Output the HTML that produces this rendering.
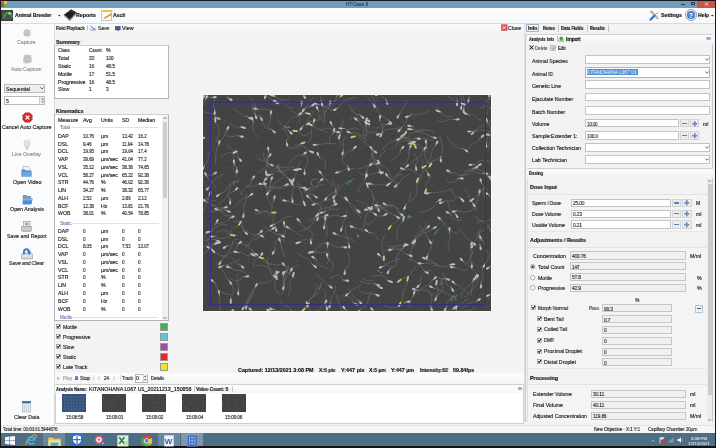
<!DOCTYPE html><html><head><meta charset="utf-8"><style>
html,body{margin:0;padding:0;width:716px;height:448px;overflow:hidden;background:#f3f3f3;}
.t{position:absolute;font-family:"Liberation Sans",sans-serif;line-height:1;white-space:nowrap;transform-origin:0 50%;will-change:transform;-webkit-text-stroke:0.15px currentColor;}
.r{position:absolute;box-sizing:border-box;}
svg{position:absolute;overflow:visible;}
</style></head><body>
<div class="r" style="left:0px;top:0px;width:716px;height:448px;background:#f3f3f3"></div>
<div class="r" style="left:0px;top:1px;width:716px;height:7px;background:#6e9ebf"></div>
<div class="t" style="left:207px;width:300px;text-align:center;top:2.48px;font-size:5px;color:#2b4257;">HTCasa II</div>
<div class="r" style="left:1px;top:2px;width:3px;height:3px;background:#d94c3a"></div>
<div class="r" style="left:4px;top:1px;width:3px;height:3px;background:#f0c030"></div>
<div class="r" style="left:1px;top:5px;width:3px;height:2px;background:#3a7bd0"></div>
<div class="r" style="left:4px;top:4px;width:3px;height:3px;background:#5db05a"></div>
<div class="r" style="left:681px;top:4.3px;width:4px;height:0.9px;background:#2a3a48"></div>
<div class="r" style="left:691px;top:1.8px;width:4px;height:3px;border:0.8px solid #2a3a48;border-top-width:1.3px"></div>
<div class="r" style="left:697px;top:1px;width:18px;height:7px;background:#c9534d"></div>
<svg style="left:703.5px;top:2.2px" width="5" height="4" viewBox="0 0 5 4"><path d="M1 0.5 L4 3.5 M4 0.5 L1 3.5" stroke="#fff" stroke-width="0.8"/></svg>
<div class="r" style="left:1px;top:8px;width:714px;height:15px;background:linear-gradient(#fdfdfe,#f7f8f9)"></div>
<div class="r" style="left:1px;top:23px;width:714px;height:1px;background:#d6dbe0"></div>
<div class="r" style="left:1px;top:9.7px;width:12.4px;height:11px;background:#4d4f4f;border:0.6px solid #3a3c3c"></div>
<svg style="left:1px;top:9.7px" width="12.4" height="11" viewBox="0 0 12.4 11"><path d="M2.8 8.2 Q3.5 3 8 2.8 Q10.8 3.2 11 7.5" stroke="#35a843" stroke-width="1.7" fill="none"/><circle cx="8.6" cy="3.4" r="1.2" fill="#b8ecb8"/></svg>
<div class="t" style="left:15px;top:13.10px;font-size:5.2px;color:#111;font-weight:bold;transform:scaleX(0.952)">Animal Breeder</div>
<svg style="left:57.8px;top:15px" width="2.6" height="2" viewBox="0 0 2.6 2"><path d="M0 0 L2.6 0 L1.3 1.6 Z" fill="#222"/></svg>
<svg style="left:62px;top:8px" width="18" height="15" viewBox="0 0 18 15"><path d="M2.3 6.4 L7.8 11.4 L14.2 4.3 L14.2 5.8 L7.8 12.8 L2.3 7.9 Z" fill="#cdc8b2" stroke="#3a3a3a" stroke-width="0.5"/><path d="M9 1.6 L14.2 4.3 L7.8 11.4 L2.3 6.4 Z" fill="#1d1d1d"/><path d="M9 1.6 L14.2 4.3 L12 6.6 L6.6 3.8 Z" fill="#2e2e2e"/></svg>
<div class="t" style="left:76px;top:13.10px;font-size:5.2px;color:#111;font-weight:bold;transform:scaleX(1.020)">Reports</div>
<div class="r" style="left:101.3px;top:9.8px;width:10.3px;height:11px;background:#fbfbf8;border:0.6px solid #c6c6c0;border-radius:0.5px"></div>
<div class="r" style="left:102px;top:9.9px;width:8.5px;height:2px;background:#dccb5a"></div>
<svg style="left:101px;top:9px" width="12" height="12" viewBox="0 0 12 12"><path d="M3.5 9.2 L10.8 4.8" stroke="#e08a2a" stroke-width="1.5"/><path d="M3.5 9.2 L2.8 9.9" stroke="#666" stroke-width="0.9"/></svg>
<div class="t" style="left:113px;top:13.10px;font-size:5.2px;color:#111;font-weight:bold;transform:scaleX(0.967)">Ascii</div>
<svg style="left:649px;top:10px" width="11" height="11" viewBox="0 0 11 11"><path d="M1.5 2 L3 1 L9.5 8 L8.5 9.5 Z" fill="#b9bec3" stroke="#8f959b" stroke-width="0.4"/><path d="M0.6 1.6 Q1.2 0.2 2.8 0.6 L2 1.8 L2.6 2.5 L3.6 1.8 Q3.8 3.2 2.5 3.5 Z" fill="#a9aeb3"/><path d="M1.6 9.6 L5.5 5.6" stroke="#3f7cc4" stroke-width="2.3" stroke-linecap="round"/><path d="M5.5 5.6 L8.8 2.3" stroke="#7a8690" stroke-width="0.9"/></svg>
<div class="t" style="left:661px;top:13.10px;font-size:5.2px;color:#111;font-weight:bold;transform:scaleX(1.026)">Settings</div>
<svg style="left:685px;top:9.2px" width="12" height="12" viewBox="0 0 12 12"><circle cx="6" cy="6" r="5.6" fill="#dce6f0" stroke="#6d93bb" stroke-width="0.7"/><circle cx="6" cy="6" r="4.1" fill="#4a82c4"/><text x="6" y="8.6" font-size="7" font-family="Liberation Sans" font-weight="bold" fill="#fff" text-anchor="middle">?</text></svg>
<div class="t" style="left:698px;top:13.10px;font-size:5.2px;color:#111;font-weight:bold;transform:scaleX(0.978)">Help</div>
<svg style="left:711px;top:15px" width="2.6" height="2" viewBox="0 0 2.6 2"><path d="M0 0 L2.6 0 L1.3 1.6 Z" fill="#222"/></svg>
<div class="r" style="left:1px;top:24px;width:53px;height:401px;background:#fafbfc"></div>
<div class="r" style="left:54px;top:24px;width:1px;height:401px;background:#dcdcdc"></div>
<svg style="left:23px;top:28.5px" width="8" height="8" viewBox="0 0 8 8"><circle cx="4" cy="3.9" r="3.7" fill="#c4c4c4"/></svg>
<div class="t" style="left:17px;top:39.50px;font-size:5.2px;color:#8f8f8f;transform:scaleX(1.002)">Capture</div>
<svg style="left:22px;top:54px" width="10.5" height="10" viewBox="0 0 10.5 10"><path d="M2 1.2 Q5 0 9 1 Q10.3 4.5 9.5 8.5 Q5.5 10 1.5 9 Q0.3 5 2 1.2 Z" fill="#c9c9c9"/><circle cx="5.2" cy="5" r="2.6" fill="#b5b5b5"/><circle cx="5.2" cy="5" r="1.4" fill="#d2d2d2"/></svg>
<div class="t" style="left:11.4px;top:67.40px;font-size:5.2px;color:#8f8f8f;transform:scaleX(0.981)">Auto Capture</div>
<div class="r" style="left:4px;top:84px;width:41px;height:9px;background:#eeeeee;border:1px solid #b9b9b9;"></div>
<div class="t" style="left:6px;top:86.67px;font-size:5px;color:#222;transform:scaleX(1.015)">Sequential</div>
<svg style="left:40px;top:87px" width="4" height="3" viewBox="0 0 4 3"><path d="M0.3 0.3 L2 2 L3.7 0.3" stroke="#333" stroke-width="0.7" fill="none"/></svg>
<div class="r" style="left:4px;top:96px;width:41px;height:9px;background:#fff;border:1px solid #b9b9b9;"></div>
<div class="t" style="left:5.5px;top:98.67px;font-size:5px;color:#222;">5</div>
<div class="r" style="left:39px;top:97px;width:5px;height:7px;background:#efefef;border-left:1px solid #d0d0d0"></div>
<svg style="left:39.5px;top:97px" width="5" height="7" viewBox="0 0 5 7"><path d="M1 2.6 L2.5 1.2 L4 2.6 Z M1 4.4 L2.5 5.8 L4 4.4 Z" fill="#555"/></svg>
<svg style="left:21.5px;top:112px" width="11" height="11" viewBox="0 0 11 11"><path d="M3.2 0.5 L7.8 0.5 L10.5 3.2 L10.5 7.8 L7.8 10.5 L3.2 10.5 L0.5 7.8 L0.5 3.2 Z" fill="#d02b2b"/><path d="M3.6 3.6 L7.4 7.4 M7.4 3.6 L3.6 7.4" stroke="#fff" stroke-width="1.3"/></svg>
<div class="t" style="left:1.5px;top:125.20px;font-size:5.2px;color:#1e1e1e;transform:scaleX(1.034)">Cancel Auto Capture</div>
<svg style="left:23px;top:140px" width="8" height="10" viewBox="0 0 8 10"><ellipse cx="4" cy="3.6" rx="3.2" ry="3.4" fill="#e2e2e2" stroke="#cfcfcf" stroke-width="0.6"/><rect x="2.4" y="6.8" width="3.2" height="2.6" fill="#cfcfcf"/></svg>
<div class="t" style="left:12px;top:152.30px;font-size:5.2px;color:#8f8f8f;transform:scaleX(1.005)">Live Overlay</div>
<svg style="left:21px;top:166px" width="11" height="11" viewBox="0 0 11 11"><path d="M2 0.5 L7 0.5 L9 2.5 L9 6 L2 6 Z" fill="#f4f4f4" stroke="#9a9a9a" stroke-width="0.6"/><path d="M0.5 3.5 L4 3.5 L5 4.5 L10.5 4.5 L10.5 10.5 L0.5 10.5 Z" fill="#4f8fd6"/><path d="M0.5 6 L10.5 6 L10.5 10.5 L0.5 10.5 Z" fill="#6aa6e6"/></svg>
<div class="t" style="left:12.5px;top:180.00px;font-size:5.2px;color:#1e1e1e;transform:scaleX(1.043)">Open Video</div>
<svg style="left:21.5px;top:193.5px" width="11" height="11" viewBox="0 0 11 11"><path d="M0.8 1 L4.5 1 L5.5 2 L9 2 L9 6 L0.8 6 Z" fill="#8e9398"/><path d="M1 4.5 L10.5 4.5 L9.5 10.5 L0.5 10.5 Z" fill="#4a8ad8"/><path d="M1 4.5 L10.5 4.5 L10.2 6.5 L0.8 6.5 Z" fill="#7fb2ea"/></svg>
<div class="t" style="left:10px;top:207.00px;font-size:5.2px;color:#1e1e1e;transform:scaleX(1.025)">Open Analysis</div>
<svg style="left:21px;top:220.5px" width="11" height="11.5" viewBox="0 0 11 11.5"><rect x="2.5" y="0.5" width="6.5" height="5" fill="#e9eaeb" stroke="#8f9194" stroke-width="0.6"/><rect x="4.3" y="1.8" width="3" height="2.4" fill="#9a9c9f"/><path d="M0.5 5.5 H10.5 V9.5 H0.5 Z" fill="#d6d7d9" stroke="#8a8c8f" stroke-width="0.6"/><path d="M1.5 7.3 H9.5" stroke="#9fa1a4" stroke-width="0.6"/><rect x="1" y="9.5" width="9" height="1.5" fill="#b9bbbe"/></svg>
<div class="t" style="left:7px;top:234.20px;font-size:5.2px;color:#1e1e1e;transform:scaleX(1.014)">Save and Report</div>
<svg style="left:21px;top:247.5px" width="12" height="11.5" viewBox="0 0 12 11.5"><path d="M0.5 6 L2.5 5 L9.5 5 L11.5 6 L11.5 11 L0.5 11 Z" fill="#d4d6d8" stroke="#9d9fa2" stroke-width="0.6"/><path d="M1.5 7.8 H10.5" stroke="#eceeef" stroke-width="1.2"/><path d="M3.2 6.5 Q2 2 5 1.2 Q7.5 0.8 8.3 4" stroke="#3b7fd0" stroke-width="2" fill="none"/><path d="M6 3.6 L10.3 3.4 L8.3 7.6 Z" fill="#3b7fd0"/></svg>
<div class="t" style="left:9px;top:261.00px;font-size:5.2px;color:#1e1e1e;transform:scaleX(0.979)">Save and Clear</div>
<svg style="left:21px;top:400px" width="11" height="13" viewBox="0 0 11 13"><rect x="1" y="1" width="9" height="2.4" rx="0.8" fill="#3f73b8"/><rect x="1.5" y="3.4" width="8" height="8.6" fill="#e3e6ea" stroke="#a9adb2" stroke-width="0.6"/><path d="M3.5 5 V11 M5.5 5 V11 M7.5 5 V11" stroke="#c2c6cb" stroke-width="0.6"/></svg>
<div class="t" style="left:14px;top:414.50px;font-size:5.2px;color:#1e1e1e;transform:scaleX(1.028)">Clear Data</div>
<div class="r" style="left:1px;top:424.5px;width:714px;height:8.5px;background:#f5f6f7;border-top:0.6px solid #e4e4e4"></div>
<div class="t" style="left:2.5px;top:427.30px;font-size:5.2px;color:#1e1e1e;transform:scaleX(0.814)">Total time: 00:00:01.5944676</div>
<div class="t" style="left:594px;top:427.30px;font-size:5.2px;color:#1e1e1e;transform:scaleX(0.841)">New Objective - X:1 Y:1</div>
<div class="t" style="left:648px;top:427.30px;font-size:5.2px;color:#1e1e1e;transform:scaleX(0.852)">Capillary Chamber 20&micro;m</div>
<div class="r" style="left:0px;top:433px;width:716px;height:14px;background:#4e6e85"></div>
<div class="r" style="left:0px;top:446px;width:716px;height:2px;background:#141414"></div>
<div class="r" style="left:55px;top:24px;width:469px;height:349px;background:#f3f3f3"></div>
<div class="r" style="left:55px;top:24px;width:469px;height:10px;background:linear-gradient(#fbfbfb,#f3f3f3)"></div>
<div class="t" style="left:56px;top:26.30px;font-size:5.2px;color:#1e1e1e;font-weight:bold;transform:scaleX(0.791)">Field Playback</div>
<div class="r" style="left:87px;top:25px;width:0.8px;height:5px;background:#c8c8c8"></div>
<svg style="left:90px;top:24.5px" width="6" height="6" viewBox="0 0 6 6"><path d="M0.5 3.2 L0.5 5.5 L5.5 5.5 L5.5 3.2" fill="#dfe4ea" stroke="#8d99a6" stroke-width="0.5"/><path d="M0.8 0.5 L3.8 3.4 L4.6 2.6 L4.6 4.6 L2.6 4.6 L3.3 3.9 L0.3 1 Z" fill="#3a72bd"/></svg>
<div class="t" style="left:97.5px;top:26.30px;font-size:5.2px;color:#1e1e1e;transform:scaleX(0.930)">Save</div>
<svg style="left:115px;top:25.5px" width="5.5" height="5" viewBox="0 0 5.5 5"><rect x="0.3" y="0.3" width="4.9" height="3.6" fill="#3d5ea8" stroke="#24386e" stroke-width="0.4"/><rect x="1.6" y="4" width="2.4" height="0.7" fill="#777"/></svg>
<div class="t" style="left:121.5px;top:26.30px;font-size:5.2px;color:#1e1e1e;transform:scaleX(1.031)">View</div>
<svg style="left:501px;top:24px" width="7" height="7" viewBox="0 0 7 7"><rect x="0.5" y="0.8" width="5.6" height="5.6" fill="#d9534f" stroke="#b03a36" stroke-width="0.5"/><path d="M1.8 2.1 L4.8 5.1 M4.8 2.1 L1.8 5.1" stroke="#fff" stroke-width="0.8"/></svg>
<div class="t" style="left:508px;top:26.30px;font-size:5.2px;color:#1e1e1e;transform:scaleX(0.980)">Close</div>
<div class="t" style="left:56px;top:40.12px;font-size:5.4px;color:#111;font-weight:bold;transform:scaleX(0.976)">Summary</div>
<div class="r" style="left:54px;top:45px;width:115px;height:54px;background:#fff;border:1px solid #b4b4b4;border-top-color:#cfcfcf"></div>
<div class="t" style="left:58px;top:48.00px;font-size:5.2px;color:#1e1e1e;transform:scaleX(0.886)">Class</div>
<div class="t" style="left:89px;top:48.00px;font-size:5.2px;color:#1e1e1e;transform:scaleX(0.903)">Count</div>
<div class="t" style="left:105.5px;top:48.00px;font-size:5.2px;color:#1e1e1e;">%</div>
<div class="t" style="left:58px;top:55.80px;font-size:5.2px;color:#1e1e1e;">Total</div>
<div class="t" style="left:89px;top:55.80px;font-size:5.2px;color:#1e1e1e;transform:scaleX(0.88);">33</div>
<div class="t" style="left:105.5px;top:55.80px;font-size:5.2px;color:#1e1e1e;transform:scaleX(0.88);">100</div>
<div class="t" style="left:58px;top:64.00px;font-size:5.2px;color:#1e1e1e;">Static</div>
<div class="t" style="left:89px;top:64.00px;font-size:5.2px;color:#1e1e1e;transform:scaleX(0.88);">16</div>
<div class="t" style="left:105.5px;top:64.00px;font-size:5.2px;color:#1e1e1e;transform:scaleX(0.88);">48.5</div>
<div class="t" style="left:58px;top:72.20px;font-size:5.2px;color:#1e1e1e;">Motile</div>
<div class="t" style="left:89px;top:72.20px;font-size:5.2px;color:#1e1e1e;transform:scaleX(0.88);">17</div>
<div class="t" style="left:105.5px;top:72.20px;font-size:5.2px;color:#1e1e1e;transform:scaleX(0.88);">51.5</div>
<div class="t" style="left:58px;top:80.00px;font-size:5.2px;color:#1e1e1e;">Progressive</div>
<div class="t" style="left:89px;top:80.00px;font-size:5.2px;color:#1e1e1e;transform:scaleX(0.88);">16</div>
<div class="t" style="left:105.5px;top:80.00px;font-size:5.2px;color:#1e1e1e;transform:scaleX(0.88);">48.5</div>
<div class="t" style="left:58px;top:87.10px;font-size:5.2px;color:#1e1e1e;">Slow</div>
<div class="t" style="left:89px;top:87.10px;font-size:5.2px;color:#1e1e1e;transform:scaleX(0.88);">1</div>
<div class="t" style="left:105.5px;top:87.10px;font-size:5.2px;color:#1e1e1e;transform:scaleX(0.88);">3</div>
<div class="t" style="left:56px;top:108.92px;font-size:5.4px;color:#111;font-weight:bold;transform:scaleX(0.956)">Kinematics</div>
<div class="r" style="left:54px;top:114px;width:115px;height:207px;background:#fff;border:1px solid #b4b4b4;border-top-color:#cfcfcf"></div>
<div class="r" style="left:162px;top:115px;width:6px;height:205px;background:#f0f0f0"></div>
<div class="r" style="left:162.7px;top:121.8px;width:4.2px;height:76.7px;background:#cdcdcd"></div>
<svg style="left:162px;top:116px" width="6" height="4" viewBox="0 0 6 4"><path d="M1.3 3 L3 1.3 L4.7 3" stroke="#555" stroke-width="0.7" fill="none"/></svg>
<svg style="left:162px;top:316px" width="6" height="4" viewBox="0 0 6 4"><path d="M1.3 1 L3 2.7 L4.7 1" stroke="#555" stroke-width="0.7" fill="none"/></svg>
<div class="t" style="left:58px;top:117.70px;font-size:5.2px;color:#1e1e1e;">Measure</div>
<div class="t" style="left:82.5px;top:117.70px;font-size:5.2px;color:#1e1e1e;">Avg</div>
<div class="t" style="left:101px;top:117.70px;font-size:5.2px;color:#1e1e1e;">Units</div>
<div class="t" style="left:121.5px;top:117.70px;font-size:5.2px;color:#1e1e1e;">SD</div>
<div class="t" style="left:137.5px;top:117.70px;font-size:5.2px;color:#1e1e1e;">Median</div>
<div class="t" style="left:59.5px;top:126.33px;font-size:4.6px;color:#34509a;-webkit-text-stroke:0;">Total</div>
<div class="r" style="left:71px;top:127.4px;width:87px;height:0.7px;background:#dde1ea"></div>
<div class="t" style="left:58px;top:133.80px;font-size:5.2px;color:#1e1e1e;">DAP</div>
<div class="t" style="left:82.5px;top:133.80px;font-size:5.2px;color:#1e1e1e;transform:scaleX(0.85);">10.76</div>
<div class="t" style="left:101px;top:133.80px;font-size:5.2px;color:#1e1e1e;">&micro;m</div>
<div class="t" style="left:121.5px;top:133.80px;font-size:5.2px;color:#1e1e1e;transform:scaleX(0.85);">13.42</div>
<div class="t" style="left:137.5px;top:133.80px;font-size:5.2px;color:#1e1e1e;transform:scaleX(0.85);">16.2</div>
<div class="t" style="left:58px;top:141.55px;font-size:5.2px;color:#1e1e1e;">DSL</div>
<div class="t" style="left:82.5px;top:141.55px;font-size:5.2px;color:#1e1e1e;transform:scaleX(0.85);">9.46</div>
<div class="t" style="left:101px;top:141.55px;font-size:5.2px;color:#1e1e1e;">&micro;m</div>
<div class="t" style="left:121.5px;top:141.55px;font-size:5.2px;color:#1e1e1e;transform:scaleX(0.85);">11.94</div>
<div class="t" style="left:137.5px;top:141.55px;font-size:5.2px;color:#1e1e1e;transform:scaleX(0.85);">14.78</div>
<div class="t" style="left:58px;top:149.30px;font-size:5.2px;color:#1e1e1e;">DCL</div>
<div class="t" style="left:82.5px;top:149.30px;font-size:5.2px;color:#1e1e1e;transform:scaleX(0.85);">19.95</div>
<div class="t" style="left:101px;top:149.30px;font-size:5.2px;color:#1e1e1e;">&micro;m</div>
<div class="t" style="left:121.5px;top:149.30px;font-size:5.2px;color:#1e1e1e;transform:scaleX(0.85);">19.04</div>
<div class="t" style="left:137.5px;top:149.30px;font-size:5.2px;color:#1e1e1e;transform:scaleX(0.85);">17.4</div>
<div class="t" style="left:58px;top:157.05px;font-size:5.2px;color:#1e1e1e;">VAP</div>
<div class="t" style="left:82.5px;top:157.05px;font-size:5.2px;color:#1e1e1e;transform:scaleX(0.85);">39.69</div>
<div class="t" style="left:101px;top:157.05px;font-size:5.2px;color:#1e1e1e;">&micro;m/sec</div>
<div class="t" style="left:121.5px;top:157.05px;font-size:5.2px;color:#1e1e1e;transform:scaleX(0.85);">41.04</div>
<div class="t" style="left:137.5px;top:157.05px;font-size:5.2px;color:#1e1e1e;transform:scaleX(0.85);">77.2</div>
<div class="t" style="left:58px;top:164.80px;font-size:5.2px;color:#1e1e1e;">VSL</div>
<div class="t" style="left:82.5px;top:164.80px;font-size:5.2px;color:#1e1e1e;transform:scaleX(0.85);">35.12</div>
<div class="t" style="left:101px;top:164.80px;font-size:5.2px;color:#1e1e1e;">&micro;m/sec</div>
<div class="t" style="left:121.5px;top:164.80px;font-size:5.2px;color:#1e1e1e;transform:scaleX(0.85);">38.36</div>
<div class="t" style="left:137.5px;top:164.80px;font-size:5.2px;color:#1e1e1e;transform:scaleX(0.85);">74.65</div>
<div class="t" style="left:58px;top:172.55px;font-size:5.2px;color:#1e1e1e;">VCL</div>
<div class="t" style="left:82.5px;top:172.55px;font-size:5.2px;color:#1e1e1e;transform:scaleX(0.85);">58.27</div>
<div class="t" style="left:101px;top:172.55px;font-size:5.2px;color:#1e1e1e;">&micro;m/sec</div>
<div class="t" style="left:121.5px;top:172.55px;font-size:5.2px;color:#1e1e1e;transform:scaleX(0.85);">65.22</div>
<div class="t" style="left:137.5px;top:172.55px;font-size:5.2px;color:#1e1e1e;transform:scaleX(0.85);">92.38</div>
<div class="t" style="left:58px;top:180.30px;font-size:5.2px;color:#1e1e1e;">STR</div>
<div class="t" style="left:82.5px;top:180.30px;font-size:5.2px;color:#1e1e1e;transform:scaleX(0.85);">44.76</div>
<div class="t" style="left:101px;top:180.30px;font-size:5.2px;color:#1e1e1e;">%</div>
<div class="t" style="left:121.5px;top:180.30px;font-size:5.2px;color:#1e1e1e;transform:scaleX(0.85);">46.02</div>
<div class="t" style="left:137.5px;top:180.30px;font-size:5.2px;color:#1e1e1e;transform:scaleX(0.85);">92.36</div>
<div class="t" style="left:58px;top:188.05px;font-size:5.2px;color:#1e1e1e;">LIN</div>
<div class="t" style="left:82.5px;top:188.05px;font-size:5.2px;color:#1e1e1e;transform:scaleX(0.85);">34.27</div>
<div class="t" style="left:101px;top:188.05px;font-size:5.2px;color:#1e1e1e;">%</div>
<div class="t" style="left:121.5px;top:188.05px;font-size:5.2px;color:#1e1e1e;transform:scaleX(0.85);">38.32</div>
<div class="t" style="left:137.5px;top:188.05px;font-size:5.2px;color:#1e1e1e;transform:scaleX(0.85);">65.77</div>
<div class="t" style="left:58px;top:195.80px;font-size:5.2px;color:#1e1e1e;">ALH</div>
<div class="t" style="left:82.5px;top:195.80px;font-size:5.2px;color:#1e1e1e;transform:scaleX(0.85);">2.52</div>
<div class="t" style="left:101px;top:195.80px;font-size:5.2px;color:#1e1e1e;">&micro;m</div>
<div class="t" style="left:121.5px;top:195.80px;font-size:5.2px;color:#1e1e1e;transform:scaleX(0.85);">2.89</div>
<div class="t" style="left:137.5px;top:195.80px;font-size:5.2px;color:#1e1e1e;transform:scaleX(0.85);">2.12</div>
<div class="t" style="left:58px;top:203.55px;font-size:5.2px;color:#1e1e1e;">BCF</div>
<div class="t" style="left:82.5px;top:203.55px;font-size:5.2px;color:#1e1e1e;transform:scaleX(0.85);">12.38</div>
<div class="t" style="left:101px;top:203.55px;font-size:5.2px;color:#1e1e1e;">Hz</div>
<div class="t" style="left:121.5px;top:203.55px;font-size:5.2px;color:#1e1e1e;transform:scaleX(0.85);">13.81</div>
<div class="t" style="left:137.5px;top:203.55px;font-size:5.2px;color:#1e1e1e;transform:scaleX(0.85);">21.76</div>
<div class="t" style="left:58px;top:211.30px;font-size:5.2px;color:#1e1e1e;">WOB</div>
<div class="t" style="left:82.5px;top:211.30px;font-size:5.2px;color:#1e1e1e;transform:scaleX(0.85);">38.01</div>
<div class="t" style="left:101px;top:211.30px;font-size:5.2px;color:#1e1e1e;">%</div>
<div class="t" style="left:121.5px;top:211.30px;font-size:5.2px;color:#1e1e1e;transform:scaleX(0.85);">40.54</div>
<div class="t" style="left:137.5px;top:211.30px;font-size:5.2px;color:#1e1e1e;transform:scaleX(0.85);">78.85</div>
<div class="t" style="left:59.5px;top:221.63px;font-size:4.6px;color:#34509a;-webkit-text-stroke:0;">Static</div>
<div class="r" style="left:72px;top:222.7px;width:87px;height:0.7px;background:#dde1ea"></div>
<div class="t" style="left:58px;top:228.90px;font-size:5.2px;color:#1e1e1e;">DAP</div>
<div class="t" style="left:82.5px;top:228.90px;font-size:5.2px;color:#1e1e1e;transform:scaleX(0.85);">0</div>
<div class="t" style="left:101px;top:228.90px;font-size:5.2px;color:#1e1e1e;">&micro;m</div>
<div class="t" style="left:121.5px;top:228.90px;font-size:5.2px;color:#1e1e1e;transform:scaleX(0.85);">0</div>
<div class="t" style="left:137.5px;top:228.90px;font-size:5.2px;color:#1e1e1e;transform:scaleX(0.85);">0</div>
<div class="t" style="left:58px;top:236.66px;font-size:5.2px;color:#1e1e1e;">DSL</div>
<div class="t" style="left:82.5px;top:236.66px;font-size:5.2px;color:#1e1e1e;transform:scaleX(0.85);">0</div>
<div class="t" style="left:101px;top:236.66px;font-size:5.2px;color:#1e1e1e;">&micro;m</div>
<div class="t" style="left:121.5px;top:236.66px;font-size:5.2px;color:#1e1e1e;transform:scaleX(0.85);">0</div>
<div class="t" style="left:137.5px;top:236.66px;font-size:5.2px;color:#1e1e1e;transform:scaleX(0.85);">0</div>
<div class="t" style="left:58px;top:244.42px;font-size:5.2px;color:#1e1e1e;">DCL</div>
<div class="t" style="left:82.5px;top:244.42px;font-size:5.2px;color:#1e1e1e;transform:scaleX(0.85);">8.05</div>
<div class="t" style="left:101px;top:244.42px;font-size:5.2px;color:#1e1e1e;">&micro;m</div>
<div class="t" style="left:121.5px;top:244.42px;font-size:5.2px;color:#1e1e1e;transform:scaleX(0.85);">7.53</div>
<div class="t" style="left:137.5px;top:244.42px;font-size:5.2px;color:#1e1e1e;transform:scaleX(0.85);">13.07</div>
<div class="t" style="left:58px;top:252.18px;font-size:5.2px;color:#1e1e1e;">VAP</div>
<div class="t" style="left:82.5px;top:252.18px;font-size:5.2px;color:#1e1e1e;transform:scaleX(0.85);">0</div>
<div class="t" style="left:101px;top:252.18px;font-size:5.2px;color:#1e1e1e;">&micro;m/sec</div>
<div class="t" style="left:121.5px;top:252.18px;font-size:5.2px;color:#1e1e1e;transform:scaleX(0.85);">0</div>
<div class="t" style="left:137.5px;top:252.18px;font-size:5.2px;color:#1e1e1e;transform:scaleX(0.85);">0</div>
<div class="t" style="left:58px;top:259.94px;font-size:5.2px;color:#1e1e1e;">VSL</div>
<div class="t" style="left:82.5px;top:259.94px;font-size:5.2px;color:#1e1e1e;transform:scaleX(0.85);">0</div>
<div class="t" style="left:101px;top:259.94px;font-size:5.2px;color:#1e1e1e;">&micro;m/sec</div>
<div class="t" style="left:121.5px;top:259.94px;font-size:5.2px;color:#1e1e1e;transform:scaleX(0.85);">0</div>
<div class="t" style="left:137.5px;top:259.94px;font-size:5.2px;color:#1e1e1e;transform:scaleX(0.85);">0</div>
<div class="t" style="left:58px;top:267.70px;font-size:5.2px;color:#1e1e1e;">VCL</div>
<div class="t" style="left:82.5px;top:267.70px;font-size:5.2px;color:#1e1e1e;transform:scaleX(0.85);">0</div>
<div class="t" style="left:101px;top:267.70px;font-size:5.2px;color:#1e1e1e;">&micro;m/sec</div>
<div class="t" style="left:121.5px;top:267.70px;font-size:5.2px;color:#1e1e1e;transform:scaleX(0.85);">0</div>
<div class="t" style="left:137.5px;top:267.70px;font-size:5.2px;color:#1e1e1e;transform:scaleX(0.85);">0</div>
<div class="t" style="left:58px;top:275.46px;font-size:5.2px;color:#1e1e1e;">STR</div>
<div class="t" style="left:82.5px;top:275.46px;font-size:5.2px;color:#1e1e1e;transform:scaleX(0.85);">0</div>
<div class="t" style="left:101px;top:275.46px;font-size:5.2px;color:#1e1e1e;">%</div>
<div class="t" style="left:121.5px;top:275.46px;font-size:5.2px;color:#1e1e1e;transform:scaleX(0.85);">0</div>
<div class="t" style="left:137.5px;top:275.46px;font-size:5.2px;color:#1e1e1e;transform:scaleX(0.85);">0</div>
<div class="t" style="left:58px;top:283.22px;font-size:5.2px;color:#1e1e1e;">LIN</div>
<div class="t" style="left:82.5px;top:283.22px;font-size:5.2px;color:#1e1e1e;transform:scaleX(0.85);">0</div>
<div class="t" style="left:101px;top:283.22px;font-size:5.2px;color:#1e1e1e;">%</div>
<div class="t" style="left:121.5px;top:283.22px;font-size:5.2px;color:#1e1e1e;transform:scaleX(0.85);">0</div>
<div class="t" style="left:137.5px;top:283.22px;font-size:5.2px;color:#1e1e1e;transform:scaleX(0.85);">0</div>
<div class="t" style="left:58px;top:290.98px;font-size:5.2px;color:#1e1e1e;">ALH</div>
<div class="t" style="left:82.5px;top:290.98px;font-size:5.2px;color:#1e1e1e;transform:scaleX(0.85);">0</div>
<div class="t" style="left:101px;top:290.98px;font-size:5.2px;color:#1e1e1e;">&micro;m</div>
<div class="t" style="left:121.5px;top:290.98px;font-size:5.2px;color:#1e1e1e;transform:scaleX(0.85);">0</div>
<div class="t" style="left:137.5px;top:290.98px;font-size:5.2px;color:#1e1e1e;transform:scaleX(0.85);">0</div>
<div class="t" style="left:58px;top:298.74px;font-size:5.2px;color:#1e1e1e;">BCF</div>
<div class="t" style="left:82.5px;top:298.74px;font-size:5.2px;color:#1e1e1e;transform:scaleX(0.85);">0</div>
<div class="t" style="left:101px;top:298.74px;font-size:5.2px;color:#1e1e1e;">Hz</div>
<div class="t" style="left:121.5px;top:298.74px;font-size:5.2px;color:#1e1e1e;transform:scaleX(0.85);">0</div>
<div class="t" style="left:137.5px;top:298.74px;font-size:5.2px;color:#1e1e1e;transform:scaleX(0.85);">0</div>
<div class="t" style="left:58px;top:306.50px;font-size:5.2px;color:#1e1e1e;">WOB</div>
<div class="t" style="left:82.5px;top:306.50px;font-size:5.2px;color:#1e1e1e;transform:scaleX(0.85);">0</div>
<div class="t" style="left:101px;top:306.50px;font-size:5.2px;color:#1e1e1e;">%</div>
<div class="t" style="left:121.5px;top:306.50px;font-size:5.2px;color:#1e1e1e;transform:scaleX(0.85);">0</div>
<div class="t" style="left:137.5px;top:306.50px;font-size:5.2px;color:#1e1e1e;transform:scaleX(0.85);">0</div>
<div class="t" style="left:59.5px;top:316.03px;font-size:4.6px;color:#34509a;-webkit-text-stroke:0;">Motile</div>
<div class="r" style="left:71px;top:317.09999999999997px;width:87px;height:0.7px;background:#dde1ea"></div>
<div class="r" style="left:54px;top:320px;width:115px;height:1px;background:#b4b4b4"></div>
<div class="r" style="left:55px;top:321px;width:114px;height:1.5px;background:#f3f3f3"></div>
<svg style="left:56.1px;top:324.29999999999995px" width="4.8" height="4.8" viewBox="0 0 4.8 4.8"><rect x="0.3" y="0.3" width="4.2" height="4.2" fill="#fff" stroke="#7d7d7d" stroke-width="0.6"/><path d="M1.1 2.3 L2.1 3.5 L3.9 1.1" stroke="#111" stroke-width="1.05" fill="none"/></svg>
<div class="t" style="left:63px;top:324.90px;font-size:5.2px;color:#1e1e1e;">Motile</div>
<div class="r" style="left:159.5px;top:322.9px;width:8.2px;height:8px;background:#3db54a;border:0.6px solid #9a9a9a"></div>
<svg style="left:56.1px;top:334.29999999999995px" width="4.8" height="4.8" viewBox="0 0 4.8 4.8"><rect x="0.3" y="0.3" width="4.2" height="4.2" fill="#fff" stroke="#7d7d7d" stroke-width="0.6"/><path d="M1.1 2.3 L2.1 3.5 L3.9 1.1" stroke="#111" stroke-width="1.05" fill="none"/></svg>
<div class="t" style="left:63px;top:334.90px;font-size:5.2px;color:#1e1e1e;">Progressive</div>
<div class="r" style="left:159.5px;top:332.9px;width:8.2px;height:8px;background:#5ac6dc;border:0.6px solid #9a9a9a"></div>
<svg style="left:56.1px;top:344.29999999999995px" width="4.8" height="4.8" viewBox="0 0 4.8 4.8"><rect x="0.3" y="0.3" width="4.2" height="4.2" fill="#fff" stroke="#7d7d7d" stroke-width="0.6"/><path d="M1.1 2.3 L2.1 3.5 L3.9 1.1" stroke="#111" stroke-width="1.05" fill="none"/></svg>
<div class="t" style="left:63px;top:344.90px;font-size:5.2px;color:#1e1e1e;">Slow</div>
<div class="r" style="left:159.5px;top:342.9px;width:8.2px;height:8px;background:#ad47a8;border:0.6px solid #9a9a9a"></div>
<svg style="left:56.1px;top:354.29999999999995px" width="4.8" height="4.8" viewBox="0 0 4.8 4.8"><rect x="0.3" y="0.3" width="4.2" height="4.2" fill="#fff" stroke="#7d7d7d" stroke-width="0.6"/><path d="M1.1 2.3 L2.1 3.5 L3.9 1.1" stroke="#111" stroke-width="1.05" fill="none"/></svg>
<div class="t" style="left:63px;top:354.90px;font-size:5.2px;color:#1e1e1e;">Static</div>
<div class="r" style="left:159.5px;top:352.9px;width:8.2px;height:8px;background:#e62429;border:0.6px solid #9a9a9a"></div>
<svg style="left:56.1px;top:364.29999999999995px" width="4.8" height="4.8" viewBox="0 0 4.8 4.8"><rect x="0.3" y="0.3" width="4.2" height="4.2" fill="#fff" stroke="#7d7d7d" stroke-width="0.6"/><path d="M1.1 2.3 L2.1 3.5 L3.9 1.1" stroke="#111" stroke-width="1.05" fill="none"/></svg>
<div class="t" style="left:63px;top:364.90px;font-size:5.2px;color:#1e1e1e;">Late Track</div>
<div class="r" style="left:159.5px;top:362.9px;width:8.2px;height:8px;background:#f3e61b;border:0.6px solid #9a9a9a"></div>
<div class="r" style="left:55px;top:372.5px;width:469px;height:10px;background:linear-gradient(#fcfcfc,#f6f6f6)"></div>
<svg style="left:56px;top:375.5px" width="5" height="5" viewBox="0 0 5 5"><path d="M1 0.5 L4 2.5 L1 4.5 Z" fill="#b9b9b9"/></svg>
<div class="t" style="left:63px;top:376.00px;font-size:5.2px;color:#9a9a9a;transform:scaleX(0.892)">Play</div>
<div class="r" style="left:75.3px;top:376.3px;width:2.8px;height:3.6px;background:linear-gradient(#7f9fd6,#3a5fae)"></div>
<div class="t" style="left:80px;top:376.00px;font-size:5.2px;color:#1e1e1e;transform:scaleX(0.937)">Stop</div>
<div class="r" style="left:93.2px;top:375px;width:0.7px;height:6px;background:#d6d6d6"></div>
<svg style="left:97px;top:375.5px" width="4" height="5" viewBox="0 0 4 5"><path d="M3 0.5 L0.8 2.5 L3 4.5" stroke="#aaa" stroke-width="0.7" fill="none"/></svg>
<div class="t" style="left:104px;top:376.00px;font-size:5.2px;color:#1e1e1e;transform:scaleX(0.865)">24</div>
<svg style="left:112px;top:375.5px" width="4" height="5" viewBox="0 0 4 5"><path d="M1 0.5 L3.2 2.5 L1 4.5" stroke="#aaa" stroke-width="0.7" fill="none"/></svg>
<div class="r" style="left:119.5px;top:375px;width:0.7px;height:6px;background:#d6d6d6"></div>
<div class="t" style="left:121.5px;top:376.00px;font-size:5.2px;color:#1e1e1e;transform:scaleX(0.861)">Track</div>
<div class="r" style="left:134.5px;top:373.5px;width:13px;height:9px;background:#fff;border:0.7px solid #b5b5b5"></div>
<div class="t" style="left:135.5px;top:376.00px;font-size:5.2px;color:#1e1e1e;">0</div>
<div class="r" style="left:143px;top:374px;width:4.3px;height:8px;background:#f0f0f0;border-left:0.6px solid #ccc"></div>
<svg style="left:143px;top:374px" width="4.3" height="8" viewBox="0 0 4.3 8"><path d="M1 3 L2.2 1.6 L3.4 3 Z M1 5 L2.2 6.4 L3.4 5 Z" fill="#555"/></svg>
<div class="t" style="left:151px;top:376.00px;font-size:5.2px;color:#1e1e1e;transform:scaleX(0.820)">Details</div>
<div class="r" style="left:524px;top:24px;width:191px;height:401px;background:#f2f2f2"></div>
<div class="r" style="left:524px;top:24px;width:1px;height:401px;background:#e2e2e2"></div>
<div class="r" style="left:525.3px;top:33.5px;width:1px;height:391px;background:#c9c9c9"></div>
<div class="r" style="left:527.2px;top:168px;width:0.8px;height:255px;background:#dedede"></div>
<div class="r" style="left:712.3px;top:33.5px;width:1px;height:391px;background:#c9c9c9"></div>
<div class="r" style="left:526px;top:24.3px;width:12.5px;height:7.8px;background:#f7fafd;border:0.8px solid #9fb6cc"></div>
<div class="t" style="left:527.8px;top:26.20px;font-size:5.2px;color:#111;font-weight:bold;transform:scaleX(0.998)">Info</div>
<div class="t" style="left:542.8px;top:26.20px;font-size:5.2px;color:#111;font-weight:bold;transform:scaleX(0.832)">Notes</div>
<div class="r" style="left:558.2px;top:25px;width:0.7px;height:6.5px;background:#c5c5c5"></div>
<div class="t" style="left:561.2px;top:26.20px;font-size:5.2px;color:#111;font-weight:bold;transform:scaleX(0.813)">Data Fields</div>
<div class="r" style="left:586.8px;top:25px;width:0.7px;height:6.5px;background:#c5c5c5"></div>
<div class="t" style="left:589.8px;top:26.20px;font-size:5.2px;color:#111;font-weight:bold;transform:scaleX(0.800)">Results</div>
<div class="r" style="left:608.2px;top:25px;width:0.7px;height:6.5px;background:#c5c5c5"></div>
<div class="r" style="left:525.3px;top:33.5px;width:187.5px;height:1px;background:#d3d3d3"></div>
<div class="r" style="left:526.5px;top:34.5px;width:186px;height:9px;background:linear-gradient(#fdfdfd,#f2f2f2)"></div>
<div class="t" style="left:528.7px;top:37.00px;font-size:5.2px;color:#111;font-weight:bold;transform:scaleX(0.774)">Analysis Info</div>
<div class="r" style="left:556.5px;top:36px;width:0.7px;height:5.5px;background:#c5c5c5"></div>
<svg style="left:558.3px;top:36px" width="6.5" height="6" viewBox="0 0 6.5 6"><path d="M0.3 3.2 L1 5.6 L5.5 5.6 L6.2 3.2" fill="#c9cdc6" stroke="#8b9088" stroke-width="0.4"/><path d="M3.25 0.2 L6 2.6 L4.4 2.6 L4.4 4.5 L2.1 4.5 L2.1 2.6 L0.5 2.6 Z" fill="#3f9e36"/></svg>
<div class="t" style="left:566px;top:37.00px;font-size:5.2px;color:#111;-webkit-text-stroke:0.3px #111;transform:scaleX(0.973)">Import</div>
<div class="r" style="left:706px;top:37.3px;width:4.5px;height:2.8px;background:#8fb0dc;border-radius:1.4px"></div>
<svg style="left:528.9px;top:45.3px" width="5" height="5" viewBox="0 0 5 5"><path d="M0.5 0.5 L4.5 4.5 M4.5 0.5 L0.5 4.5" stroke="#222" stroke-width="1.05"/></svg>
<div class="t" style="left:535px;top:46.00px;font-size:5.2px;color:#3a3a3a;-webkit-text-stroke:0.05px #3a3a3a;transform:scaleX(0.833)">Delete</div>
<svg style="left:550.3px;top:45px" width="6" height="6" viewBox="0 0 6 6"><rect x="0.4" y="0.6" width="4.8" height="5" fill="#dfe6ee" stroke="#8a9aaa" stroke-width="0.45"/><path d="M0.4 2.2 H5.2 M0.4 3.8 H5.2 M2.8 0.6 V5.6" stroke="#8a9aaa" stroke-width="0.35"/><path d="M2.5 5.2 L5.8 1.8" stroke="#c9a040" stroke-width="1.1"/></svg>
<div class="t" style="left:558px;top:46.00px;font-size:5.2px;color:#111;transform:scaleX(0.838)">Edit</div>
<div class="t" style="left:531.8px;top:58.70px;font-size:5.2px;color:#1e1e1e;transform:scaleX(0.993)">Animal Species</div>
<div class="r" style="left:585.3px;top:55.2px;width:124.30000000000007px;height:9.0px;background:#fff;border:0.8px solid #c3c3c3"></div>
<svg style="left:704.5px;top:58.2px" width="4" height="3" viewBox="0 0 4 3"><path d="M0.4 0.5 L2 2.2 L3.6 0.5" stroke="#444" stroke-width="0.8" fill="none"/></svg>
<div class="t" style="left:531.8px;top:72.10px;font-size:5.2px;color:#1e1e1e;transform:scaleX(0.933)">Animal ID</div>
<div class="r" style="left:585.3px;top:67.2px;width:124.30000000000007px;height:10.399999999999991px;background:#fff;border:0.8px solid #9ab8d6"></div>
<svg style="left:704.5px;top:70.9px" width="4" height="3" viewBox="0 0 4 3"><path d="M0.4 0.5 L2 2.2 L3.6 0.5" stroke="#444" stroke-width="0.8" fill="none"/></svg>
<div class="r" style="left:586.5px;top:69px;width:51.5px;height:6.4px;background:#4a8fd6"></div>
<div class="t" style="left:587px;top:70.30px;font-size:5.2px;color:#fff;-webkit-text-stroke:0;transform:scaleX(0.924)">KITANOHANA L067 U1</div>
<div class="t" style="left:531.8px;top:83.90px;font-size:5.2px;color:#1e1e1e;transform:scaleX(0.995)">Genetic Line</div>
<div class="r" style="left:585.3px;top:80.4px;width:124.30000000000007px;height:8.299999999999997px;background:#fff;border:0.8px solid #c3c3c3"></div>
<div class="t" style="left:531.8px;top:96.50px;font-size:5.2px;color:#1e1e1e;transform:scaleX(0.994)">Ejaculate Number</div>
<div class="r" style="left:585.3px;top:93.2px;width:124.30000000000007px;height:8.299999999999997px;background:#fff;border:0.8px solid #c3c3c3"></div>
<div class="t" style="left:531.8px;top:109.60px;font-size:5.2px;color:#1e1e1e;transform:scaleX(0.995)">Batch Number</div>
<div class="r" style="left:585.3px;top:106.2px;width:124.30000000000007px;height:8.399999999999991px;background:#fff;border:0.8px solid #c3c3c3"></div>
<div class="t" style="left:531.8px;top:122.00px;font-size:5.2px;color:#1e1e1e;transform:scaleX(1.011)">Volume</div>
<div class="r" style="left:585.3px;top:119.2px;width:94.0px;height:8.200000000000003px;background:#fff;border:0.8px solid #c3c3c3"></div>
<div class="t" style="left:586.7px;top:121.50px;font-size:5.2px;color:#1e1e1e;transform:scaleX(0.809)">10.00</div>
<div class="r" style="left:679.5px;top:119.2px;width:9.9px;height:8.200000000000003px;background:#ececec;border:0.7px solid #d3d3d3"></div>
<div class="r" style="left:682.2px;top:122.60000000000001px;width:5px;height:1.5px;background:#5f7fae"></div>
<div class="r" style="left:690.1px;top:119.2px;width:9.4px;height:8.200000000000003px;background:#ececec;border:0.7px solid #d3d3d3"></div>
<svg style="left:692.3px;top:120.5px" width="5.5" height="5.5" viewBox="0 0 5.5 5.5"><path d="M2.75 0.3 V5.2 M0.3 2.75 H5.2" stroke="#5b82bd" stroke-width="1.6"/><circle cx="2.75" cy="2.75" r="0.6" fill="#9fbde6"/></svg>
<div class="t" style="left:703px;top:121.50px;font-size:5.2px;color:#1e1e1e;transform:scaleX(0.966)">ml</div>
<div class="t" style="left:531.8px;top:133.80px;font-size:5.2px;color:#1e1e1e;transform:scaleX(0.999)">Sample:Extender 1:</div>
<div class="r" style="left:585.3px;top:131.3px;width:94.0px;height:8.399999999999977px;background:#fff;border:0.8px solid #c3c3c3"></div>
<div class="t" style="left:586.7px;top:133.70px;font-size:5.2px;color:#1e1e1e;transform:scaleX(0.847)">100.0</div>
<div class="r" style="left:679.5px;top:131.3px;width:9.9px;height:8.399999999999977px;background:#ececec;border:0.7px solid #d3d3d3"></div>
<div class="r" style="left:682.2px;top:134.8px;width:5px;height:1.5px;background:#5f7fae"></div>
<div class="r" style="left:690.1px;top:131.3px;width:9.4px;height:8.399999999999977px;background:#ececec;border:0.7px solid #d3d3d3"></div>
<svg style="left:692.3px;top:132.60000000000002px" width="5.5" height="5.5" viewBox="0 0 5.5 5.5"><path d="M2.75 0.3 V5.2 M0.3 2.75 H5.2" stroke="#5b82bd" stroke-width="1.6"/><circle cx="2.75" cy="2.75" r="0.6" fill="#9fbde6"/></svg>
<div class="t" style="left:531.8px;top:146.20px;font-size:5.2px;color:#1e1e1e;transform:scaleX(1.007)">Collection Technician</div>
<div class="r" style="left:585.3px;top:143.3px;width:124.30000000000007px;height:8.5px;background:#fff;border:0.8px solid #c3c3c3"></div>
<svg style="left:704.5px;top:146.05px" width="4" height="3" viewBox="0 0 4 3"><path d="M0.4 0.5 L2 2.2 L3.6 0.5" stroke="#444" stroke-width="0.8" fill="none"/></svg>
<div class="t" style="left:531.8px;top:158.20px;font-size:5.2px;color:#1e1e1e;transform:scaleX(1.014)">Lab Technician</div>
<div class="r" style="left:585.3px;top:155.3px;width:124.30000000000007px;height:8.5px;background:#fff;border:0.8px solid #c3c3c3"></div>
<svg style="left:704.5px;top:158.05px" width="4" height="3" viewBox="0 0 4 3"><path d="M0.4 0.5 L2 2.2 L3.6 0.5" stroke="#444" stroke-width="0.8" fill="none"/></svg>
<div class="r" style="left:526.5px;top:167.5px;width:186px;height:1px;background:#cfcfcf"></div>
<div class="r" style="left:526.5px;top:168.5px;width:186px;height:9px;background:linear-gradient(#fbfbfb,#f2f2f2)"></div>
<div class="t" style="left:528.5px;top:171.27px;font-size:5px;color:#111;font-weight:bold;transform:scaleX(0.826)">Dosing</div>
<div class="r" style="left:707px;top:178px;width:5.3px;height:247px;background:#ececec"></div>
<div class="r" style="left:707.5px;top:184.4px;width:4.6px;height:210.5px;background:#cbcbcb"></div>
<svg style="left:707px;top:179px" width="5.3" height="4" viewBox="0 0 5.3 4"><path d="M1.2 2.8 L2.65 1.3 L4.1 2.8" stroke="#555" stroke-width="0.7" fill="none"/></svg>
<svg style="left:707px;top:417.5px" width="5.3" height="4" viewBox="0 0 5.3 4"><path d="M1.2 1.2 L2.65 2.7 L4.1 1.2" stroke="#555" stroke-width="0.7" fill="none"/></svg>
<div class="t" style="left:530px;top:185.22px;font-size:5.4px;color:#111;font-weight:bold;transform:scaleX(0.969)">Dose Input</div>
<div class="r" style="left:527.5px;top:194px;width:179px;height:37.5px;background:#f4f4f4;border-top:0.7px solid #e2e2e2;border-bottom:0.7px solid #e8e8e8"></div>
<div class="t" style="left:532.3px;top:200.95px;font-size:5.2px;color:#1e1e1e;transform:scaleX(0.914)">Sperm / Dose</div>
<div class="r" style="left:571.4px;top:198.7px;width:100px;height:8.100000000000023px;background:#fff;border:0.8px solid #c3c3c3"></div>
<div class="t" style="left:572.8px;top:200.95px;font-size:5.2px;color:#1e1e1e;transform:scaleX(0.88);">25.00</div>
<div class="r" style="left:671.8px;top:198.7px;width:9.5px;height:8.100000000000023px;background:#ececec;border:0.7px solid #d3d3d3"></div>
<div class="r" style="left:674px;top:202.05px;width:5px;height:1.5px;background:#5f7fae"></div>
<div class="r" style="left:682px;top:198.7px;width:9.5px;height:8.100000000000023px;background:#ececec;border:0.7px solid #d3d3d3"></div>
<svg style="left:684px;top:200.0px" width="5.5" height="5.5" viewBox="0 0 5.5 5.5"><path d="M2.75 0.3 V5.2 M0.3 2.75 H5.2" stroke="#5b82bd" stroke-width="1.6"/><circle cx="2.75" cy="2.75" r="0.6" fill="#9fbde6"/></svg>
<div class="t" style="left:695.5px;top:200.95px;font-size:5.2px;color:#1e1e1e;">M</div>
<div class="t" style="left:532.3px;top:211.80px;font-size:5.2px;color:#1e1e1e;transform:scaleX(0.940)">Dose Volume</div>
<div class="r" style="left:571.4px;top:209.5px;width:100px;height:8.199999999999989px;background:#fff;border:0.8px solid #c3c3c3"></div>
<div class="t" style="left:572.8px;top:211.80px;font-size:5.2px;color:#1e1e1e;transform:scaleX(0.88);">0.23</div>
<div class="r" style="left:671.8px;top:209.5px;width:9.5px;height:8.199999999999989px;background:#ececec;border:0.7px solid #d3d3d3"></div>
<div class="r" style="left:674px;top:212.9px;width:5px;height:1.5px;background:#5f7fae"></div>
<div class="r" style="left:682px;top:209.5px;width:9.5px;height:8.199999999999989px;background:#ececec;border:0.7px solid #d3d3d3"></div>
<svg style="left:684px;top:210.8px" width="5.5" height="5.5" viewBox="0 0 5.5 5.5"><path d="M2.75 0.3 V5.2 M0.3 2.75 H5.2" stroke="#5b82bd" stroke-width="1.6"/><circle cx="2.75" cy="2.75" r="0.6" fill="#9fbde6"/></svg>
<div class="t" style="left:695.5px;top:211.80px;font-size:5.2px;color:#1e1e1e;">ml</div>
<div class="t" style="left:532.3px;top:222.70px;font-size:5.2px;color:#1e1e1e;transform:scaleX(0.945)">Usable Volume</div>
<div class="r" style="left:571.4px;top:220.4px;width:100px;height:8.199999999999989px;background:#fff;border:0.8px solid #c3c3c3"></div>
<div class="t" style="left:572.8px;top:222.70px;font-size:5.2px;color:#1e1e1e;transform:scaleX(0.88);">0.21</div>
<div class="r" style="left:671.8px;top:220.4px;width:9.5px;height:8.199999999999989px;background:#ececec;border:0.7px solid #d3d3d3"></div>
<div class="r" style="left:674px;top:223.8px;width:5px;height:1.5px;background:#5f7fae"></div>
<div class="r" style="left:682px;top:220.4px;width:9.5px;height:8.199999999999989px;background:#ececec;border:0.7px solid #d3d3d3"></div>
<svg style="left:684px;top:221.70000000000002px" width="5.5" height="5.5" viewBox="0 0 5.5 5.5"><path d="M2.75 0.3 V5.2 M0.3 2.75 H5.2" stroke="#5b82bd" stroke-width="1.6"/><circle cx="2.75" cy="2.75" r="0.6" fill="#9fbde6"/></svg>
<div class="t" style="left:695.5px;top:222.70px;font-size:5.2px;color:#1e1e1e;">ml</div>
<div class="t" style="left:530px;top:237.92px;font-size:5.4px;color:#111;font-weight:bold;transform:scaleX(0.989)">Adjustments / Results</div>
<div class="r" style="left:527.5px;top:247px;width:179px;height:121.5px;background:#f4f4f4;border-top:0.7px solid #e2e2e2;border-bottom:0.7px solid #e8e8e8"></div>
<div class="t" style="left:532.5px;top:253.80px;font-size:5.2px;color:#1e1e1e;transform:scaleX(1.021)">Concentration</div>
<div class="r" style="left:570.3px;top:251.4px;width:116.2px;height:8.200000000000017px;background:#f0f0f0;border:0.8px solid #c6c6c6"></div>
<div class="t" style="left:571.8px;top:253.70px;font-size:5.2px;color:#1e1e1e;transform:scaleX(0.88);">400.76</div>
<div class="t" style="left:690px;top:253.80px;font-size:5.2px;color:#1e1e1e;">M/ml</div>
<svg style="left:530.3px;top:263.7px" width="5.4" height="5.4" viewBox="0 0 5.4 5.4"><circle cx="2.7" cy="2.7" r="2.3" fill="#fff" stroke="#777" stroke-width="0.6"/><circle cx="2.7" cy="2.7" r="1.2" fill="#222"/></svg>
<div class="t" style="left:537.5px;top:264.60px;font-size:5.2px;color:#1e1e1e;transform:scaleX(1.010)">Total Count</div>
<div class="r" style="left:570.3px;top:262.3px;width:116.2px;height:8.0px;background:#f0f0f0;border:0.8px solid #c6c6c6"></div>
<div class="t" style="left:571.8px;top:264.50px;font-size:5.2px;color:#1e1e1e;transform:scaleX(0.88);">147</div>
<svg style="left:530.3px;top:274.59999999999997px" width="5.4" height="5.4" viewBox="0 0 5.4 5.4"><circle cx="2.7" cy="2.7" r="2.3" fill="#fff" stroke="#777" stroke-width="0.6"/></svg>
<div class="t" style="left:537.5px;top:275.50px;font-size:5.2px;color:#1e1e1e;transform:scaleX(1.011)">Motile</div>
<div class="r" style="left:570.3px;top:273.2px;width:116.2px;height:8.0px;background:#f0f0f0;border:0.8px solid #c6c6c6"></div>
<div class="t" style="left:571.8px;top:275.40px;font-size:5.2px;color:#1e1e1e;transform:scaleX(0.88);">57.8</div>
<div class="t" style="left:697px;top:275.50px;font-size:5.2px;color:#1e1e1e;">%</div>
<svg style="left:530.3px;top:285.4px" width="5.4" height="5.4" viewBox="0 0 5.4 5.4"><circle cx="2.7" cy="2.7" r="2.3" fill="#fff" stroke="#777" stroke-width="0.6"/></svg>
<div class="t" style="left:537.5px;top:286.30px;font-size:5.2px;color:#1e1e1e;transform:scaleX(0.986)">Progressive</div>
<div class="r" style="left:570.3px;top:284px;width:116.2px;height:8px;background:#f0f0f0;border:0.8px solid #c6c6c6"></div>
<div class="t" style="left:571.8px;top:286.20px;font-size:5.2px;color:#1e1e1e;transform:scaleX(0.88);">42.9</div>
<div class="t" style="left:697px;top:286.30px;font-size:5.2px;color:#1e1e1e;">%</div>
<div class="t" style="left:634.8px;top:298.47px;font-size:5px;color:#1e1e1e;">%</div>
<svg style="left:530.9px;top:305.20000000000005px" width="4.8" height="4.8" viewBox="0 0 4.8 4.8"><rect x="0.3" y="0.3" width="4.2" height="4.2" fill="#fff" stroke="#7d7d7d" stroke-width="0.6"/><path d="M1.1 2.3 L2.1 3.5 L3.9 1.1" stroke="#111" stroke-width="1.05" fill="none"/></svg>
<div class="t" style="left:537.6px;top:305.70px;font-size:5.2px;color:#1e1e1e;transform:scaleX(0.913)">Morph Normal</div>
<div class="r" style="left:602px;top:304px;width:70px;height:8.4px;background:#f0f0f0;border:0.8px solid #c6c6c6"></div>
<div class="t" style="left:603.7px;top:306.60px;font-size:5.2px;color:#1e1e1e;transform:scaleX(0.88);">99.3</div>
<svg style="left:537.2px;top:316.1px" width="4.8" height="4.8" viewBox="0 0 4.8 4.8"><rect x="0.3" y="0.3" width="4.2" height="4.2" fill="#fff" stroke="#7d7d7d" stroke-width="0.6"/><path d="M1.1 2.3 L2.1 3.5 L3.9 1.1" stroke="#111" stroke-width="1.05" fill="none"/></svg>
<div class="t" style="left:544px;top:316.60px;font-size:5.2px;color:#1e1e1e;transform:scaleX(0.984)">Bent Tail</div>
<div class="r" style="left:602px;top:315px;width:70px;height:8.4px;background:#f0f0f0;border:0.8px solid #c6c6c6"></div>
<div class="t" style="left:603.7px;top:317.50px;font-size:5.2px;color:#1e1e1e;transform:scaleX(0.88);">0.7</div>
<svg style="left:537.2px;top:326.90000000000003px" width="4.8" height="4.8" viewBox="0 0 4.8 4.8"><rect x="0.3" y="0.3" width="4.2" height="4.2" fill="#fff" stroke="#7d7d7d" stroke-width="0.6"/><path d="M1.1 2.3 L2.1 3.5 L3.9 1.1" stroke="#111" stroke-width="1.05" fill="none"/></svg>
<div class="t" style="left:544px;top:327.40px;font-size:5.2px;color:#1e1e1e;transform:scaleX(0.965)">Coiled Tail</div>
<div class="r" style="left:602px;top:326px;width:70px;height:8.4px;background:#f0f0f0;border:0.8px solid #c6c6c6"></div>
<div class="t" style="left:603.7px;top:328.30px;font-size:5.2px;color:#1e1e1e;transform:scaleX(0.88);">0</div>
<svg style="left:537.2px;top:337.70000000000005px" width="4.8" height="4.8" viewBox="0 0 4.8 4.8"><rect x="0.3" y="0.3" width="4.2" height="4.2" fill="#fff" stroke="#7d7d7d" stroke-width="0.6"/><path d="M1.1 2.3 L2.1 3.5 L3.9 1.1" stroke="#111" stroke-width="1.05" fill="none"/></svg>
<div class="t" style="left:544px;top:338.20px;font-size:5.2px;color:#1e1e1e;transform:scaleX(0.845)">DMR</div>
<div class="r" style="left:602px;top:337px;width:70px;height:8.4px;background:#f0f0f0;border:0.8px solid #c6c6c6"></div>
<div class="t" style="left:603.7px;top:339.10px;font-size:5.2px;color:#1e1e1e;transform:scaleX(0.88);">0</div>
<svg style="left:537.2px;top:348.5px" width="4.8" height="4.8" viewBox="0 0 4.8 4.8"><rect x="0.3" y="0.3" width="4.2" height="4.2" fill="#fff" stroke="#7d7d7d" stroke-width="0.6"/><path d="M1.1 2.3 L2.1 3.5 L3.9 1.1" stroke="#111" stroke-width="1.05" fill="none"/></svg>
<div class="t" style="left:544px;top:349.00px;font-size:5.2px;color:#1e1e1e;transform:scaleX(0.991)">Proximal Droplet</div>
<div class="r" style="left:602px;top:348px;width:70px;height:8.4px;background:#f0f0f0;border:0.8px solid #c6c6c6"></div>
<div class="t" style="left:603.7px;top:349.90px;font-size:5.2px;color:#1e1e1e;transform:scaleX(0.88);">0</div>
<svg style="left:537.2px;top:359.3px" width="4.8" height="4.8" viewBox="0 0 4.8 4.8"><rect x="0.3" y="0.3" width="4.2" height="4.2" fill="#fff" stroke="#7d7d7d" stroke-width="0.6"/><path d="M1.1 2.3 L2.1 3.5 L3.9 1.1" stroke="#111" stroke-width="1.05" fill="none"/></svg>
<div class="t" style="left:544px;top:359.80px;font-size:5.2px;color:#1e1e1e;transform:scaleX(1.028)">Distal Droplet</div>
<div class="r" style="left:602px;top:358px;width:70px;height:8.4px;background:#f0f0f0;border:0.8px solid #c6c6c6"></div>
<div class="t" style="left:603.7px;top:360.70px;font-size:5.2px;color:#1e1e1e;transform:scaleX(0.88);">0</div>
<div class="t" style="left:588.5px;top:307.43px;font-size:4.6px;color:#287a28;font-weight:bold;transform:scaleX(0.932)">Pass</div>
<div class="r" style="left:695.4px;top:304.5px;width:7.5px;height:8px;background:#eef0f3;border:0.7px solid #b9c3cf"></div>
<div class="r" style="left:697.2px;top:308.1px;width:4px;height:1.2px;background:#3c5fa0"></div>
<div class="t" style="left:530px;top:375.92px;font-size:5.4px;color:#111;font-weight:bold;transform:scaleX(0.963)">Processing</div>
<div class="r" style="left:527.5px;top:384px;width:179px;height:38.5px;background:#f4f4f4;border-top:0.7px solid #e2e2e2"></div>
<div class="t" style="left:532.7px;top:392.20px;font-size:5.2px;color:#1e1e1e;transform:scaleX(0.987)">Extender Volume</div>
<div class="r" style="left:591.3px;top:389.8px;width:94.4px;height:8.199999999999989px;background:#f0f0f0;border:0.8px solid #c6c6c6"></div>
<div class="t" style="left:592.8px;top:392.10px;font-size:5.2px;color:#1e1e1e;transform:scaleX(0.88);">30.11</div>
<div class="t" style="left:690px;top:392.20px;font-size:5.2px;color:#1e1e1e;">ml</div>
<div class="t" style="left:532.7px;top:403.10px;font-size:5.2px;color:#1e1e1e;transform:scaleX(1.000)">Final Volume</div>
<div class="r" style="left:591.3px;top:400.7px;width:94.4px;height:8.199999999999989px;background:#f0f0f0;border:0.8px solid #c6c6c6"></div>
<div class="t" style="left:592.8px;top:403.00px;font-size:5.2px;color:#1e1e1e;transform:scaleX(0.88);">40.11</div>
<div class="t" style="left:690px;top:403.10px;font-size:5.2px;color:#1e1e1e;">ml</div>
<div class="t" style="left:532.7px;top:414.00px;font-size:5.2px;color:#1e1e1e;transform:scaleX(1.001)">Adjusted Concentration</div>
<div class="r" style="left:591.3px;top:411.6px;width:94.4px;height:8.199999999999989px;background:#f0f0f0;border:0.8px solid #c6c6c6"></div>
<div class="t" style="left:592.8px;top:413.90px;font-size:5.2px;color:#1e1e1e;transform:scaleX(0.88);">119.86</div>
<div class="t" style="left:690px;top:414.00px;font-size:5.2px;color:#1e1e1e;">M/ml</div>
<div class="r" style="left:524px;top:422.4px;width:191px;height:3px;background:#f2f2f2"></div>
<div class="r" style="left:201.7px;top:93.6px;width:290.8px;height:218.6px;background:#fbfbfb"></div>
<svg style="left:202.7px;top:94.6px;overflow:hidden" width="288.8" height="216.6" viewBox="0 0 288.8 216.6"><defs><filter id="bl" x="-5%" y="-5%" width="110%" height="110%"><feGaussianBlur stdDeviation="0.35"/></filter></defs><rect x="0" y="0" width="288.8" height="216.6" fill="#434343"/><g filter="url(#bl)"><circle cx="130.6" cy="121.2" r="0.4" fill="#6e6e6e"/><circle cx="266.9" cy="100.9" r="0.4" fill="#6e6e6e"/><circle cx="146.7" cy="127.2" r="0.4" fill="#6e6e6e"/><circle cx="53.3" cy="110.9" r="0.4" fill="#6e6e6e"/><circle cx="181.9" cy="171.8" r="0.4" fill="#6e6e6e"/><circle cx="27.2" cy="65.7" r="0.4" fill="#6e6e6e"/><circle cx="26.2" cy="175.4" r="0.4" fill="#6e6e6e"/><circle cx="200.3" cy="9.1" r="0.4" fill="#6e6e6e"/><circle cx="283.7" cy="209.0" r="0.4" fill="#6e6e6e"/><circle cx="188.9" cy="133.3" r="0.4" fill="#6e6e6e"/><circle cx="45.5" cy="3.2" r="0.4" fill="#6e6e6e"/><circle cx="152.6" cy="12.9" r="0.4" fill="#6e6e6e"/><circle cx="54.9" cy="52.4" r="0.4" fill="#6e6e6e"/><circle cx="8.7" cy="100.5" r="0.4" fill="#6e6e6e"/><circle cx="127.2" cy="182.5" r="0.4" fill="#6e6e6e"/><circle cx="149.9" cy="138.7" r="0.4" fill="#6e6e6e"/><circle cx="144.3" cy="143.5" r="0.4" fill="#6e6e6e"/><circle cx="132.1" cy="60.3" r="0.4" fill="#6e6e6e"/><circle cx="288.1" cy="215.7" r="0.4" fill="#6e6e6e"/><circle cx="242.7" cy="153.3" r="0.4" fill="#6e6e6e"/><circle cx="91.1" cy="49.7" r="0.4" fill="#6e6e6e"/><circle cx="83.5" cy="15.2" r="0.4" fill="#6e6e6e"/><circle cx="221.3" cy="86.7" r="0.4" fill="#6e6e6e"/><circle cx="244.5" cy="83.7" r="0.4" fill="#6e6e6e"/><circle cx="276.7" cy="183.5" r="0.4" fill="#6e6e6e"/><circle cx="0.2" cy="45.4" r="0.4" fill="#6e6e6e"/><circle cx="262.9" cy="101.8" r="0.4" fill="#6e6e6e"/><circle cx="283.1" cy="86.1" r="0.4" fill="#6e6e6e"/><circle cx="21.1" cy="136.3" r="0.4" fill="#6e6e6e"/><circle cx="224.8" cy="58.4" r="0.4" fill="#6e6e6e"/><circle cx="25.2" cy="72.0" r="0.4" fill="#6e6e6e"/><circle cx="278.4" cy="164.2" r="0.4" fill="#6e6e6e"/><circle cx="34.1" cy="53.4" r="0.4" fill="#6e6e6e"/><circle cx="29.2" cy="13.0" r="0.4" fill="#6e6e6e"/><circle cx="230.2" cy="38.5" r="0.4" fill="#6e6e6e"/><circle cx="161.5" cy="96.9" r="0.4" fill="#6e6e6e"/><circle cx="55.1" cy="158.5" r="0.4" fill="#6e6e6e"/><circle cx="37.8" cy="139.4" r="0.4" fill="#6e6e6e"/><circle cx="33.6" cy="91.1" r="0.4" fill="#6e6e6e"/><circle cx="61.5" cy="58.4" r="0.4" fill="#6e6e6e"/><circle cx="280.4" cy="174.0" r="0.4" fill="#6e6e6e"/><circle cx="87.8" cy="191.7" r="0.4" fill="#6e6e6e"/><circle cx="60.9" cy="85.4" r="0.4" fill="#6e6e6e"/><circle cx="246.7" cy="139.0" r="0.4" fill="#6e6e6e"/><circle cx="29.0" cy="214.3" r="0.4" fill="#6e6e6e"/><circle cx="61.6" cy="55.9" r="0.4" fill="#6e6e6e"/><circle cx="223.2" cy="71.3" r="0.4" fill="#6e6e6e"/><circle cx="85.6" cy="15.9" r="0.4" fill="#6e6e6e"/><circle cx="26.0" cy="126.2" r="0.4" fill="#6e6e6e"/><circle cx="70.2" cy="130.2" r="0.4" fill="#6e6e6e"/><circle cx="107.3" cy="98.2" r="0.4" fill="#6e6e6e"/><circle cx="277.0" cy="104.8" r="0.4" fill="#6e6e6e"/><circle cx="165.9" cy="187.7" r="0.4" fill="#6e6e6e"/><circle cx="52.8" cy="33.4" r="0.4" fill="#6e6e6e"/><circle cx="262.4" cy="177.1" r="0.4" fill="#6e6e6e"/><circle cx="72.1" cy="41.1" r="0.4" fill="#6e6e6e"/><circle cx="213.5" cy="203.7" r="0.4" fill="#6e6e6e"/><circle cx="56.8" cy="205.8" r="0.4" fill="#6e6e6e"/><circle cx="254.8" cy="130.7" r="0.4" fill="#6e6e6e"/><circle cx="121.7" cy="22.5" r="0.4" fill="#6e6e6e"/><circle cx="11.2" cy="208.5" r="0.4" fill="#6e6e6e"/><circle cx="68.9" cy="152.6" r="0.4" fill="#6e6e6e"/><circle cx="74.2" cy="178.4" r="0.4" fill="#6e6e6e"/><circle cx="172.3" cy="63.6" r="0.4" fill="#6e6e6e"/><circle cx="50.7" cy="156.0" r="0.4" fill="#6e6e6e"/><circle cx="19.9" cy="49.5" r="0.4" fill="#6e6e6e"/><circle cx="161.5" cy="184.6" r="0.4" fill="#6e6e6e"/><circle cx="177.4" cy="60.7" r="0.4" fill="#6e6e6e"/><circle cx="264.9" cy="44.2" r="0.4" fill="#6e6e6e"/><circle cx="4.8" cy="58.3" r="0.4" fill="#6e6e6e"/><circle cx="128.7" cy="13.1" r="0.4" fill="#6e6e6e"/><circle cx="50.9" cy="79.9" r="0.4" fill="#6e6e6e"/><circle cx="165.2" cy="28.5" r="0.4" fill="#6e6e6e"/><circle cx="104.6" cy="193.0" r="0.4" fill="#6e6e6e"/><circle cx="283.2" cy="142.3" r="0.4" fill="#6e6e6e"/><circle cx="199.6" cy="126.6" r="0.4" fill="#6e6e6e"/><circle cx="40.5" cy="7.6" r="0.4" fill="#6e6e6e"/><circle cx="5.2" cy="197.2" r="0.4" fill="#6e6e6e"/><circle cx="202.4" cy="208.5" r="0.4" fill="#6e6e6e"/><circle cx="6.1" cy="137.8" r="0.4" fill="#6e6e6e"/><circle cx="139.3" cy="158.2" r="0.4" fill="#6e6e6e"/><circle cx="92.1" cy="216.5" r="0.4" fill="#6e6e6e"/><circle cx="21.7" cy="118.3" r="0.4" fill="#6e6e6e"/><circle cx="212.8" cy="195.0" r="0.4" fill="#6e6e6e"/><circle cx="212.9" cy="152.4" r="0.4" fill="#6e6e6e"/><circle cx="229.1" cy="198.2" r="0.4" fill="#6e6e6e"/><circle cx="101.6" cy="148.4" r="0.4" fill="#6e6e6e"/><circle cx="260.2" cy="188.7" r="0.4" fill="#6e6e6e"/><circle cx="120.5" cy="171.2" r="0.4" fill="#6e6e6e"/><circle cx="249.4" cy="124.1" r="0.4" fill="#6e6e6e"/><circle cx="180.5" cy="82.8" r="0.4" fill="#6e6e6e"/><circle cx="168.3" cy="131.9" r="0.4" fill="#6e6e6e"/><circle cx="23.2" cy="138.5" r="0.4" fill="#6e6e6e"/><circle cx="286.9" cy="190.6" r="0.4" fill="#6e6e6e"/><circle cx="210.3" cy="84.1" r="0.4" fill="#6e6e6e"/><circle cx="212.3" cy="125.8" r="0.4" fill="#6e6e6e"/><circle cx="127.2" cy="181.6" r="0.4" fill="#6e6e6e"/><circle cx="24.2" cy="162.5" r="0.4" fill="#6e6e6e"/><circle cx="8.6" cy="130.2" r="0.4" fill="#6e6e6e"/><circle cx="138.9" cy="49.9" r="0.4" fill="#6e6e6e"/><circle cx="201.7" cy="107.7" r="0.4" fill="#6e6e6e"/><circle cx="177.5" cy="199.4" r="0.4" fill="#6e6e6e"/><circle cx="73.9" cy="2.4" r="0.4" fill="#6e6e6e"/><circle cx="86.9" cy="146.9" r="0.4" fill="#6e6e6e"/><circle cx="58.5" cy="36.7" r="0.4" fill="#6e6e6e"/><circle cx="261.6" cy="143.0" r="0.4" fill="#6e6e6e"/><circle cx="127.6" cy="193.1" r="0.4" fill="#6e6e6e"/><circle cx="94.4" cy="144.2" r="0.4" fill="#6e6e6e"/><circle cx="57.3" cy="93.3" r="0.4" fill="#6e6e6e"/><circle cx="232.8" cy="198.0" r="0.4" fill="#6e6e6e"/><circle cx="254.2" cy="83.3" r="0.4" fill="#6e6e6e"/><circle cx="168.4" cy="68.6" r="0.4" fill="#6e6e6e"/><circle cx="39.3" cy="107.5" r="0.4" fill="#6e6e6e"/><circle cx="241.8" cy="183.8" r="0.4" fill="#6e6e6e"/><circle cx="205.4" cy="205.8" r="0.4" fill="#6e6e6e"/><circle cx="79.9" cy="36.6" r="0.4" fill="#6e6e6e"/><circle cx="130.1" cy="59.6" r="0.4" fill="#6e6e6e"/><circle cx="61.8" cy="89.7" r="0.4" fill="#6e6e6e"/><circle cx="180.7" cy="107.0" r="0.4" fill="#6e6e6e"/><circle cx="91.1" cy="181.8" r="0.4" fill="#6e6e6e"/><circle cx="283.6" cy="98.0" r="0.4" fill="#6e6e6e"/><circle cx="21.6" cy="6.8" r="0.4" fill="#6e6e6e"/><circle cx="252.1" cy="9.0" r="0.4" fill="#6e6e6e"/><circle cx="204.7" cy="123.6" r="0.4" fill="#6e6e6e"/><circle cx="89.2" cy="171.4" r="0.4" fill="#6e6e6e"/><circle cx="5.5" cy="29.4" r="0.4" fill="#6e6e6e"/><circle cx="131.4" cy="5.4" r="0.4" fill="#6e6e6e"/><circle cx="239.6" cy="51.4" r="0.4" fill="#6e6e6e"/><circle cx="40.7" cy="10.2" r="0.4" fill="#6e6e6e"/><circle cx="181.7" cy="96.7" r="0.4" fill="#6e6e6e"/><circle cx="181.9" cy="141.9" r="0.4" fill="#6e6e6e"/><circle cx="233.2" cy="207.6" r="0.4" fill="#6e6e6e"/><circle cx="197.7" cy="43.2" r="0.4" fill="#6e6e6e"/><circle cx="137.2" cy="38.7" r="0.4" fill="#6e6e6e"/><circle cx="3.1" cy="102.3" r="0.4" fill="#6e6e6e"/><circle cx="206.3" cy="38.8" r="0.4" fill="#6e6e6e"/><circle cx="78.7" cy="74.9" r="0.4" fill="#6e6e6e"/><circle cx="201.4" cy="112.7" r="0.4" fill="#6e6e6e"/><circle cx="177.5" cy="163.8" r="0.4" fill="#6e6e6e"/><circle cx="113.6" cy="171.5" r="0.4" fill="#6e6e6e"/><circle cx="261.7" cy="18.9" r="0.4" fill="#6e6e6e"/><circle cx="269.3" cy="156.5" r="0.4" fill="#6e6e6e"/><circle cx="37.5" cy="98.2" r="0.4" fill="#6e6e6e"/><circle cx="180.7" cy="197.1" r="0.4" fill="#6e6e6e"/><circle cx="108.8" cy="123.2" r="0.4" fill="#6e6e6e"/><circle cx="253.9" cy="172.6" r="0.4" fill="#6e6e6e"/><circle cx="272.7" cy="100.4" r="0.4" fill="#6e6e6e"/><circle cx="188.1" cy="44.4" r="0.4" fill="#6e6e6e"/><circle cx="208.5" cy="177.3" r="0.4" fill="#6e6e6e"/><circle cx="185.3" cy="155.4" r="0.4" fill="#6e6e6e"/><circle cx="61.6" cy="194.9" r="0.4" fill="#6e6e6e"/><circle cx="283.2" cy="211.7" r="0.4" fill="#6e6e6e"/><circle cx="155.1" cy="171.3" r="0.4" fill="#6e6e6e"/><circle cx="92.5" cy="197.1" r="0.4" fill="#6e6e6e"/><circle cx="247.2" cy="75.5" r="0.4" fill="#6e6e6e"/><circle cx="23.9" cy="95.5" r="0.4" fill="#6e6e6e"/><circle cx="158.9" cy="166.4" r="0.4" fill="#6e6e6e"/><circle cx="140.8" cy="6.2" r="0.4" fill="#6e6e6e"/><circle cx="233.7" cy="13.9" r="0.4" fill="#6e6e6e"/><circle cx="231.0" cy="37.4" r="0.4" fill="#6e6e6e"/><circle cx="96.7" cy="170.7" r="0.4" fill="#6e6e6e"/><circle cx="40.6" cy="32.2" r="0.4" fill="#6e6e6e"/><circle cx="149.2" cy="156.7" r="0.4" fill="#6e6e6e"/><circle cx="242.6" cy="149.3" r="0.4" fill="#6e6e6e"/><circle cx="273.1" cy="106.7" r="0.4" fill="#6e6e6e"/><circle cx="274.1" cy="18.6" r="0.4" fill="#6e6e6e"/><circle cx="63.9" cy="114.1" r="0.4" fill="#6e6e6e"/><circle cx="83.8" cy="157.9" r="0.4" fill="#6e6e6e"/><circle cx="184.5" cy="113.2" r="0.4" fill="#6e6e6e"/><circle cx="243.6" cy="121.3" r="0.4" fill="#6e6e6e"/><circle cx="90.0" cy="82.6" r="0.4" fill="#6e6e6e"/><circle cx="244.1" cy="195.1" r="0.4" fill="#6e6e6e"/><circle cx="60.1" cy="184.3" r="0.4" fill="#6e6e6e"/><circle cx="279.7" cy="113.5" r="0.4" fill="#6e6e6e"/><circle cx="165.5" cy="43.5" r="0.4" fill="#6e6e6e"/><circle cx="154.8" cy="109.0" r="0.4" fill="#6e6e6e"/><circle cx="174.8" cy="6.0" r="0.4" fill="#6e6e6e"/><circle cx="280.0" cy="111.8" r="0.4" fill="#6e6e6e"/><circle cx="115.7" cy="173.5" r="0.4" fill="#6e6e6e"/><circle cx="162.6" cy="106.4" r="0.4" fill="#6e6e6e"/><circle cx="199.6" cy="14.3" r="0.4" fill="#6e6e6e"/><circle cx="155.6" cy="89.6" r="0.4" fill="#6e6e6e"/><circle cx="276.3" cy="200.0" r="0.4" fill="#6e6e6e"/><circle cx="77.7" cy="102.5" r="0.4" fill="#6e6e6e"/><circle cx="36.7" cy="93.9" r="0.4" fill="#6e6e6e"/><circle cx="235.6" cy="195.1" r="0.4" fill="#6e6e6e"/><circle cx="137.6" cy="68.7" r="0.4" fill="#6e6e6e"/><circle cx="55.3" cy="133.8" r="0.4" fill="#6e6e6e"/><circle cx="267.2" cy="28.0" r="0.4" fill="#6e6e6e"/><circle cx="225.1" cy="4.9" r="0.4" fill="#6e6e6e"/><circle cx="56.1" cy="49.2" r="0.4" fill="#6e6e6e"/><circle cx="198.4" cy="69.8" r="0.4" fill="#6e6e6e"/><circle cx="102.6" cy="134.2" r="0.4" fill="#6e6e6e"/><circle cx="30.3" cy="158.3" r="0.4" fill="#6e6e6e"/><circle cx="35.5" cy="110.6" r="0.4" fill="#6e6e6e"/><circle cx="72.4" cy="42.8" r="0.4" fill="#6e6e6e"/><circle cx="153.2" cy="94.6" r="0.4" fill="#6e6e6e"/><circle cx="108.5" cy="89.5" r="0.4" fill="#6e6e6e"/><circle cx="152.9" cy="34.6" r="0.4" fill="#6e6e6e"/><circle cx="59.0" cy="136.7" r="0.4" fill="#6e6e6e"/><circle cx="184.4" cy="114.7" r="0.4" fill="#6e6e6e"/><circle cx="245.8" cy="132.5" r="0.4" fill="#6e6e6e"/><circle cx="247.4" cy="50.4" r="0.4" fill="#6e6e6e"/><circle cx="213.9" cy="175.6" r="0.4" fill="#6e6e6e"/><circle cx="260.7" cy="68.4" r="0.4" fill="#6e6e6e"/><circle cx="91.0" cy="199.9" r="0.4" fill="#6e6e6e"/><circle cx="63.0" cy="216.2" r="0.4" fill="#6e6e6e"/><circle cx="256.3" cy="29.0" r="0.4" fill="#6e6e6e"/><circle cx="69.1" cy="157.4" r="0.4" fill="#6e6e6e"/><circle cx="74.9" cy="21.0" r="0.4" fill="#6e6e6e"/><circle cx="240.3" cy="91.3" r="0.4" fill="#6e6e6e"/><circle cx="228.1" cy="27.3" r="0.4" fill="#6e6e6e"/><circle cx="116.3" cy="148.4" r="0.4" fill="#6e6e6e"/><circle cx="5.1" cy="43.5" r="0.4" fill="#6e6e6e"/><circle cx="197.1" cy="197.4" r="0.4" fill="#6e6e6e"/><circle cx="279.7" cy="25.0" r="0.4" fill="#6e6e6e"/><circle cx="146.0" cy="164.2" r="0.4" fill="#6e6e6e"/><circle cx="145.2" cy="148.5" r="0.4" fill="#6e6e6e"/><circle cx="54.6" cy="15.3" r="0.4" fill="#6e6e6e"/><circle cx="30.7" cy="8.1" r="0.4" fill="#6e6e6e"/><circle cx="159.3" cy="111.5" r="0.4" fill="#6e6e6e"/><circle cx="164.3" cy="31.7" r="0.4" fill="#6e6e6e"/><circle cx="53.3" cy="44.2" r="0.4" fill="#6e6e6e"/><circle cx="242.7" cy="214.5" r="0.4" fill="#6e6e6e"/><circle cx="267.7" cy="20.6" r="0.4" fill="#6e6e6e"/><circle cx="17.9" cy="206.1" r="0.4" fill="#6e6e6e"/><circle cx="133.4" cy="165.6" r="0.4" fill="#6e6e6e"/><circle cx="94.4" cy="101.1" r="0.4" fill="#6e6e6e"/><circle cx="148.8" cy="93.2" r="0.4" fill="#6e6e6e"/><circle cx="173.5" cy="2.9" r="0.4" fill="#6e6e6e"/><circle cx="202.5" cy="182.9" r="0.4" fill="#6e6e6e"/><circle cx="52.4" cy="98.3" r="0.4" fill="#6e6e6e"/><circle cx="213.5" cy="87.8" r="0.4" fill="#6e6e6e"/><circle cx="56.4" cy="35.8" r="0.4" fill="#6e6e6e"/><circle cx="148.0" cy="3.3" r="0.4" fill="#6e6e6e"/><circle cx="258.0" cy="173.6" r="0.4" fill="#6e6e6e"/><circle cx="203.5" cy="186.4" r="0.4" fill="#6e6e6e"/><circle cx="181.8" cy="87.6" r="0.4" fill="#6e6e6e"/><circle cx="173.2" cy="109.2" r="0.4" fill="#6e6e6e"/><circle cx="283.8" cy="174.3" r="0.4" fill="#6e6e6e"/><circle cx="74.6" cy="197.4" r="0.4" fill="#6e6e6e"/><circle cx="215.0" cy="168.5" r="0.4" fill="#6e6e6e"/><circle cx="235.3" cy="87.9" r="0.4" fill="#6e6e6e"/><circle cx="258.9" cy="190.6" r="0.4" fill="#6e6e6e"/><circle cx="200.7" cy="166.2" r="0.4" fill="#6e6e6e"/><circle cx="221.0" cy="87.9" r="0.4" fill="#6e6e6e"/><circle cx="208.7" cy="15.3" r="0.4" fill="#6e6e6e"/><circle cx="98.7" cy="101.6" r="0.4" fill="#6e6e6e"/><circle cx="3.1" cy="77.0" r="0.4" fill="#6e6e6e"/><circle cx="184.5" cy="135.2" r="0.4" fill="#6e6e6e"/><circle cx="67.0" cy="204.6" r="0.4" fill="#6e6e6e"/><circle cx="192.4" cy="73.2" r="0.4" fill="#6e6e6e"/><circle cx="190.5" cy="123.4" r="0.4" fill="#6e6e6e"/><circle cx="154.0" cy="84.4" r="0.4" fill="#6e6e6e"/><circle cx="288.8" cy="139.1" r="0.4" fill="#6e6e6e"/><circle cx="202.5" cy="165.0" r="0.4" fill="#6e6e6e"/><circle cx="283.0" cy="4.9" r="0.4" fill="#6e6e6e"/><circle cx="177.7" cy="160.0" r="0.4" fill="#6e6e6e"/><circle cx="74.1" cy="87.0" r="0.4" fill="#6e6e6e"/><circle cx="14.6" cy="42.3" r="0.4" fill="#6e6e6e"/><circle cx="108.5" cy="21.3" r="0.4" fill="#6e6e6e"/><circle cx="72.5" cy="196.2" r="0.4" fill="#6e6e6e"/><circle cx="158.9" cy="110.0" r="0.4" fill="#6e6e6e"/><circle cx="279.3" cy="123.0" r="0.4" fill="#6e6e6e"/><circle cx="287.4" cy="138.2" r="0.4" fill="#6e6e6e"/><circle cx="233.8" cy="16.5" r="0.4" fill="#6e6e6e"/><circle cx="172.6" cy="164.5" r="0.4" fill="#6e6e6e"/><circle cx="13.0" cy="201.5" r="0.4" fill="#6e6e6e"/><circle cx="46.2" cy="102.2" r="0.4" fill="#6e6e6e"/><circle cx="48.8" cy="107.3" r="0.4" fill="#6e6e6e"/><circle cx="176.5" cy="12.7" r="0.4" fill="#6e6e6e"/><circle cx="273.0" cy="91.1" r="0.4" fill="#6e6e6e"/><circle cx="152.1" cy="129.5" r="0.4" fill="#6e6e6e"/><circle cx="105.6" cy="61.9" r="0.4" fill="#6e6e6e"/><circle cx="189.2" cy="121.4" r="0.4" fill="#6e6e6e"/><circle cx="81.9" cy="155.2" r="0.4" fill="#6e6e6e"/><circle cx="85.5" cy="3.0" r="0.4" fill="#6e6e6e"/><circle cx="70.8" cy="9.3" r="0.4" fill="#6e6e6e"/><circle cx="45.2" cy="163.5" r="0.4" fill="#6e6e6e"/><circle cx="112.6" cy="194.4" r="0.4" fill="#6e6e6e"/><circle cx="216.1" cy="10.9" r="0.4" fill="#6e6e6e"/><circle cx="285.6" cy="204.6" r="0.4" fill="#6e6e6e"/><circle cx="21.2" cy="196.1" r="0.4" fill="#6e6e6e"/><circle cx="124.0" cy="103.4" r="0.4" fill="#6e6e6e"/><circle cx="281.1" cy="52.8" r="0.4" fill="#6e6e6e"/><circle cx="151.1" cy="203.0" r="0.4" fill="#6e6e6e"/><circle cx="208.7" cy="101.4" r="0.4" fill="#6e6e6e"/><circle cx="282.7" cy="176.9" r="0.4" fill="#6e6e6e"/><circle cx="174.3" cy="24.9" r="0.4" fill="#6e6e6e"/><circle cx="180.3" cy="98.7" r="0.4" fill="#6e6e6e"/><circle cx="58.8" cy="11.3" r="0.4" fill="#6e6e6e"/><circle cx="152.5" cy="26.9" r="0.4" fill="#6e6e6e"/><circle cx="127.9" cy="144.7" r="0.4" fill="#6e6e6e"/><circle cx="131.6" cy="56.8" r="0.4" fill="#6e6e6e"/><circle cx="168.1" cy="90.9" r="0.4" fill="#6e6e6e"/><circle cx="224.7" cy="115.0" r="0.4" fill="#6e6e6e"/><circle cx="288.1" cy="206.3" r="0.4" fill="#6e6e6e"/><circle cx="212.1" cy="51.6" r="0.4" fill="#6e6e6e"/><circle cx="32.9" cy="193.4" r="0.4" fill="#6e6e6e"/><circle cx="226.5" cy="135.4" r="0.4" fill="#6e6e6e"/><circle cx="103.7" cy="58.8" r="0.4" fill="#6e6e6e"/><circle cx="197.8" cy="122.4" r="0.4" fill="#6e6e6e"/><circle cx="170.9" cy="137.1" r="0.4" fill="#6e6e6e"/><circle cx="217.6" cy="41.1" r="0.4" fill="#6e6e6e"/><circle cx="71.9" cy="212.2" r="0.4" fill="#6e6e6e"/><circle cx="264.5" cy="190.3" r="0.4" fill="#6e6e6e"/><circle cx="11.4" cy="13.2" r="0.4" fill="#6e6e6e"/><circle cx="78.2" cy="92.1" r="0.4" fill="#6e6e6e"/><circle cx="180.0" cy="22.2" r="0.4" fill="#6e6e6e"/><circle cx="156.4" cy="15.7" r="0.4" fill="#6e6e6e"/><circle cx="25.0" cy="146.5" r="0.4" fill="#6e6e6e"/><circle cx="159.0" cy="136.7" r="0.4" fill="#6e6e6e"/><circle cx="107.8" cy="103.7" r="0.4" fill="#6e6e6e"/><circle cx="60.8" cy="74.4" r="0.4" fill="#6e6e6e"/><circle cx="215.1" cy="181.6" r="0.4" fill="#6e6e6e"/><circle cx="21.5" cy="25.9" r="0.4" fill="#6e6e6e"/><circle cx="233.7" cy="135.1" r="0.4" fill="#6e6e6e"/><circle cx="222.0" cy="46.2" r="0.4" fill="#6e6e6e"/><circle cx="122.6" cy="55.9" r="0.4" fill="#6e6e6e"/><circle cx="233.9" cy="79.9" r="0.4" fill="#6e6e6e"/><circle cx="188.8" cy="214.3" r="0.4" fill="#6e6e6e"/><circle cx="94.0" cy="118.8" r="0.4" fill="#6e6e6e"/><circle cx="215.5" cy="199.5" r="0.4" fill="#6e6e6e"/><circle cx="123.5" cy="80.0" r="0.4" fill="#6e6e6e"/><circle cx="28.0" cy="189.6" r="0.4" fill="#6e6e6e"/><circle cx="22.7" cy="18.0" r="0.4" fill="#6e6e6e"/><circle cx="162.9" cy="105.0" r="0.4" fill="#6e6e6e"/><circle cx="197.9" cy="64.7" r="0.4" fill="#6e6e6e"/><circle cx="224.0" cy="16.5" r="0.4" fill="#6e6e6e"/><circle cx="61.6" cy="143.4" r="0.4" fill="#6e6e6e"/><circle cx="23.6" cy="65.8" r="0.4" fill="#6e6e6e"/><circle cx="209.4" cy="150.3" r="0.4" fill="#6e6e6e"/><circle cx="81.7" cy="31.0" r="0.4" fill="#6e6e6e"/><circle cx="103.3" cy="157.2" r="0.4" fill="#6e6e6e"/><circle cx="105.8" cy="25.4" r="0.4" fill="#6e6e6e"/><circle cx="204.8" cy="123.3" r="0.4" fill="#6e6e6e"/><circle cx="265.3" cy="203.6" r="0.4" fill="#6e6e6e"/><circle cx="263.8" cy="94.9" r="0.4" fill="#6e6e6e"/><circle cx="231.9" cy="66.0" r="0.4" fill="#6e6e6e"/><circle cx="91.7" cy="86.6" r="0.4" fill="#6e6e6e"/><circle cx="269.9" cy="193.8" r="0.4" fill="#6e6e6e"/><circle cx="71.7" cy="78.3" r="0.4" fill="#6e6e6e"/><circle cx="105.6" cy="78.7" r="0.4" fill="#6e6e6e"/><circle cx="114.3" cy="83.9" r="0.4" fill="#6e6e6e"/><circle cx="56.3" cy="122.1" r="0.4" fill="#6e6e6e"/><circle cx="230.2" cy="117.1" r="0.4" fill="#6e6e6e"/><circle cx="241.5" cy="121.9" r="0.4" fill="#6e6e6e"/><circle cx="51.0" cy="164.4" r="0.4" fill="#6e6e6e"/><circle cx="254.4" cy="61.0" r="0.4" fill="#6e6e6e"/><circle cx="6.4" cy="111.7" r="0.4" fill="#6e6e6e"/><circle cx="157.2" cy="122.9" r="0.4" fill="#6e6e6e"/><circle cx="279.1" cy="141.1" r="0.4" fill="#6e6e6e"/><circle cx="232.3" cy="13.9" r="0.4" fill="#6e6e6e"/><circle cx="157.9" cy="170.7" r="0.4" fill="#6e6e6e"/><circle cx="24.3" cy="17.7" r="0.4" fill="#6e6e6e"/><circle cx="212.9" cy="194.7" r="0.4" fill="#6e6e6e"/><circle cx="24.5" cy="137.4" r="0.4" fill="#6e6e6e"/><circle cx="41.6" cy="161.5" r="0.4" fill="#6e6e6e"/><circle cx="187.4" cy="53.2" r="0.4" fill="#6e6e6e"/><circle cx="63.7" cy="165.8" r="0.4" fill="#6e6e6e"/><circle cx="150.6" cy="165.6" r="0.4" fill="#6e6e6e"/><circle cx="113.9" cy="73.2" r="0.4" fill="#6e6e6e"/><circle cx="279.6" cy="145.6" r="0.4" fill="#6e6e6e"/><circle cx="142.6" cy="116.4" r="0.4" fill="#6e6e6e"/><circle cx="208.2" cy="153.4" r="0.4" fill="#6e6e6e"/><circle cx="264.2" cy="88.9" r="0.4" fill="#6e6e6e"/><circle cx="238.6" cy="144.4" r="0.4" fill="#6e6e6e"/><circle cx="246.5" cy="174.6" r="0.4" fill="#6e6e6e"/><circle cx="240.8" cy="192.5" r="0.4" fill="#6e6e6e"/><circle cx="276.6" cy="138.7" r="0.4" fill="#6e6e6e"/><circle cx="151.3" cy="153.8" r="0.4" fill="#6e6e6e"/><circle cx="231.7" cy="91.3" r="0.4" fill="#6e6e6e"/><circle cx="121.4" cy="31.7" r="0.4" fill="#6e6e6e"/><circle cx="214.1" cy="214.7" r="0.4" fill="#6e6e6e"/><circle cx="108.5" cy="36.3" r="0.4" fill="#6e6e6e"/><circle cx="59.0" cy="92.0" r="0.4" fill="#6e6e6e"/><circle cx="84.3" cy="210.1" r="0.4" fill="#6e6e6e"/><circle cx="17.1" cy="66.8" r="0.4" fill="#6e6e6e"/><circle cx="33.2" cy="140.4" r="0.4" fill="#6e6e6e"/><circle cx="224.1" cy="38.9" r="0.4" fill="#6e6e6e"/><circle cx="18.0" cy="99.4" r="0.4" fill="#6e6e6e"/><circle cx="168.7" cy="197.0" r="0.4" fill="#6e6e6e"/><circle cx="10.5" cy="23.5" r="0.4" fill="#6e6e6e"/><circle cx="53.3" cy="47.1" r="0.4" fill="#6e6e6e"/><circle cx="68.0" cy="155.4" r="0.4" fill="#6e6e6e"/><circle cx="171.8" cy="48.5" r="0.4" fill="#6e6e6e"/><circle cx="53.4" cy="60.9" r="0.4" fill="#6e6e6e"/><circle cx="49.8" cy="164.1" r="0.4" fill="#6e6e6e"/><circle cx="90.0" cy="118.7" r="0.4" fill="#6e6e6e"/><circle cx="236.0" cy="103.9" r="0.4" fill="#6e6e6e"/><circle cx="75.2" cy="192.2" r="0.4" fill="#6e6e6e"/><circle cx="264.0" cy="74.1" r="0.4" fill="#6e6e6e"/><circle cx="158.1" cy="207.3" r="0.4" fill="#6e6e6e"/><circle cx="139.4" cy="47.9" r="0.4" fill="#6e6e6e"/><circle cx="14.4" cy="205.2" r="0.4" fill="#6e6e6e"/><circle cx="231.4" cy="83.4" r="0.4" fill="#6e6e6e"/><circle cx="152.4" cy="111.7" r="0.4" fill="#6e6e6e"/><circle cx="79.3" cy="214.5" r="0.4" fill="#6e6e6e"/><circle cx="189.9" cy="51.5" r="0.4" fill="#6e6e6e"/><circle cx="3.1" cy="102.4" r="0.4" fill="#6e6e6e"/><circle cx="107.3" cy="172.6" r="0.4" fill="#6e6e6e"/><circle cx="206.0" cy="131.3" r="0.4" fill="#6e6e6e"/><circle cx="45.4" cy="34.0" r="0.4" fill="#6e6e6e"/><circle cx="92.9" cy="56.2" r="0.4" fill="#6e6e6e"/><circle cx="251.0" cy="111.8" r="0.4" fill="#6e6e6e"/><circle cx="184.0" cy="215.1" r="0.4" fill="#6e6e6e"/><circle cx="77.0" cy="115.8" r="0.4" fill="#6e6e6e"/><circle cx="43.5" cy="166.9" r="0.4" fill="#6e6e6e"/><circle cx="0.4" cy="177.9" r="0.4" fill="#6e6e6e"/><circle cx="244.4" cy="178.1" r="0.4" fill="#6e6e6e"/><circle cx="23.8" cy="58.5" r="0.4" fill="#6e6e6e"/><circle cx="206.9" cy="21.0" r="0.4" fill="#6e6e6e"/><circle cx="138.7" cy="101.5" r="0.4" fill="#6e6e6e"/><circle cx="275.9" cy="127.1" r="0.4" fill="#6e6e6e"/><circle cx="247.6" cy="65.8" r="0.4" fill="#6e6e6e"/><circle cx="228.0" cy="90.3" r="0.4" fill="#6e6e6e"/><circle cx="264.8" cy="19.7" r="0.4" fill="#6e6e6e"/><circle cx="238.6" cy="45.1" r="0.4" fill="#6e6e6e"/><circle cx="156.9" cy="113.9" r="0.4" fill="#6e6e6e"/><circle cx="45.5" cy="180.2" r="0.4" fill="#6e6e6e"/><circle cx="89.9" cy="67.3" r="0.4" fill="#6e6e6e"/><circle cx="22.0" cy="66.2" r="0.4" fill="#6e6e6e"/><circle cx="134.9" cy="154.9" r="0.4" fill="#6e6e6e"/><circle cx="103.9" cy="148.8" r="0.4" fill="#6e6e6e"/><circle cx="30.5" cy="85.4" r="0.4" fill="#6e6e6e"/><circle cx="133.4" cy="209.4" r="0.4" fill="#6e6e6e"/><circle cx="239.6" cy="141.6" r="0.4" fill="#6e6e6e"/><circle cx="3.6" cy="81.7" r="0.4" fill="#6e6e6e"/><circle cx="205.0" cy="51.4" r="0.4" fill="#6e6e6e"/><circle cx="162.9" cy="99.2" r="0.4" fill="#6e6e6e"/><circle cx="3.0" cy="214.8" r="0.4" fill="#6e6e6e"/><circle cx="230.9" cy="44.8" r="0.4" fill="#6e6e6e"/><circle cx="177.9" cy="62.9" r="0.4" fill="#6e6e6e"/><circle cx="108.6" cy="116.9" r="0.4" fill="#6e6e6e"/><circle cx="86.1" cy="73.1" r="0.4" fill="#6e6e6e"/><circle cx="113.3" cy="144.4" r="0.4" fill="#6e6e6e"/><circle cx="74.1" cy="43.3" r="0.4" fill="#6e6e6e"/><circle cx="211.2" cy="71.3" r="0.4" fill="#6e6e6e"/><circle cx="272.9" cy="121.9" r="0.4" fill="#6e6e6e"/><circle cx="209.0" cy="71.8" r="0.4" fill="#6e6e6e"/><circle cx="238.8" cy="20.0" r="0.4" fill="#6e6e6e"/><circle cx="40.7" cy="20.4" r="0.4" fill="#6e6e6e"/><circle cx="195.7" cy="153.4" r="0.4" fill="#6e6e6e"/><circle cx="51.9" cy="87.1" r="0.4" fill="#6e6e6e"/><circle cx="241.7" cy="128.4" r="0.4" fill="#6e6e6e"/><circle cx="26.0" cy="49.1" r="0.4" fill="#6e6e6e"/><circle cx="45.4" cy="26.9" r="0.4" fill="#6e6e6e"/><circle cx="117.5" cy="15.7" r="0.4" fill="#6e6e6e"/><circle cx="265.9" cy="92.5" r="0.4" fill="#6e6e6e"/><circle cx="147.7" cy="140.2" r="0.4" fill="#6e6e6e"/><circle cx="221.5" cy="177.9" r="0.4" fill="#6e6e6e"/><circle cx="111.5" cy="71.8" r="0.4" fill="#6e6e6e"/><circle cx="119.0" cy="3.3" r="0.4" fill="#6e6e6e"/><circle cx="115.7" cy="151.6" r="0.4" fill="#6e6e6e"/><circle cx="283.6" cy="171.0" r="0.4" fill="#6e6e6e"/><circle cx="190.7" cy="131.8" r="0.4" fill="#6e6e6e"/><circle cx="5.4" cy="71.7" r="0.4" fill="#6e6e6e"/><circle cx="98.8" cy="140.9" r="0.4" fill="#6e6e6e"/><circle cx="30.7" cy="81.8" r="0.4" fill="#6e6e6e"/><circle cx="147.1" cy="170.8" r="0.4" fill="#6e6e6e"/><circle cx="238.3" cy="132.4" r="0.4" fill="#6e6e6e"/><circle cx="45.7" cy="166.0" r="0.4" fill="#6e6e6e"/><circle cx="260.8" cy="118.8" r="0.4" fill="#6e6e6e"/><circle cx="101.8" cy="108.4" r="0.4" fill="#6e6e6e"/><circle cx="40.9" cy="154.5" r="0.4" fill="#6e6e6e"/><circle cx="285.0" cy="111.8" r="0.4" fill="#6e6e6e"/><circle cx="206.6" cy="181.0" r="0.4" fill="#6e6e6e"/><circle cx="57.0" cy="204.7" r="0.4" fill="#6e6e6e"/><circle cx="181.1" cy="42.9" r="0.4" fill="#6e6e6e"/><circle cx="24.0" cy="53.0" r="0.4" fill="#6e6e6e"/><circle cx="166.5" cy="151.0" r="0.4" fill="#6e6e6e"/><circle cx="95.1" cy="201.2" r="0.4" fill="#6e6e6e"/><circle cx="104.3" cy="100.3" r="0.4" fill="#6e6e6e"/><circle cx="35.8" cy="210.9" r="0.4" fill="#6e6e6e"/><circle cx="39.2" cy="195.8" r="0.4" fill="#6e6e6e"/><circle cx="156.9" cy="121.5" r="0.4" fill="#6e6e6e"/><circle cx="161.8" cy="57.3" r="0.4" fill="#6e6e6e"/><circle cx="262.6" cy="214.9" r="0.4" fill="#6e6e6e"/><circle cx="236.1" cy="130.3" r="0.4" fill="#6e6e6e"/><circle cx="35.4" cy="178.6" r="0.4" fill="#6e6e6e"/><circle cx="83.3" cy="194.3" r="0.4" fill="#6e6e6e"/><circle cx="69.6" cy="124.2" r="0.4" fill="#6e6e6e"/><circle cx="239.9" cy="40.2" r="0.4" fill="#6e6e6e"/><circle cx="158.2" cy="16.5" r="0.4" fill="#6e6e6e"/><circle cx="9.2" cy="39.0" r="0.4" fill="#6e6e6e"/><circle cx="285.0" cy="203.5" r="0.4" fill="#6e6e6e"/><circle cx="190.1" cy="66.6" r="0.4" fill="#6e6e6e"/><circle cx="193.9" cy="159.8" r="0.4" fill="#6e6e6e"/><circle cx="110.2" cy="128.2" r="0.4" fill="#6e6e6e"/><circle cx="232.1" cy="3.5" r="0.4" fill="#6e6e6e"/><circle cx="57.6" cy="101.4" r="0.4" fill="#6e6e6e"/><circle cx="41.3" cy="83.7" r="0.4" fill="#6e6e6e"/><circle cx="164.5" cy="37.6" r="0.4" fill="#6e6e6e"/><circle cx="150.1" cy="57.1" r="0.4" fill="#6e6e6e"/><circle cx="164.0" cy="71.9" r="0.4" fill="#6e6e6e"/><circle cx="185.3" cy="8.2" r="0.4" fill="#6e6e6e"/><circle cx="193.8" cy="31.4" r="0.4" fill="#6e6e6e"/><circle cx="277.1" cy="130.0" r="0.4" fill="#6e6e6e"/><circle cx="135.7" cy="89.1" r="0.4" fill="#6e6e6e"/><circle cx="180.2" cy="149.3" r="0.4" fill="#6e6e6e"/><circle cx="218.9" cy="162.8" r="0.4" fill="#6e6e6e"/><circle cx="140.3" cy="215.4" r="0.4" fill="#6e6e6e"/><circle cx="242.1" cy="185.2" r="0.4" fill="#6e6e6e"/><circle cx="118.1" cy="94.0" r="0.4" fill="#6e6e6e"/><circle cx="163.5" cy="196.1" r="0.4" fill="#6e6e6e"/><circle cx="151.9" cy="113.7" r="0.4" fill="#6e6e6e"/><circle cx="124.8" cy="195.9" r="0.4" fill="#6e6e6e"/><circle cx="92.6" cy="11.8" r="0.4" fill="#6e6e6e"/><circle cx="209.5" cy="195.0" r="0.4" fill="#6e6e6e"/><circle cx="211.4" cy="129.4" r="0.4" fill="#6e6e6e"/><circle cx="217.1" cy="66.0" r="0.4" fill="#6e6e6e"/><circle cx="171.4" cy="15.1" r="0.4" fill="#6e6e6e"/><circle cx="35.9" cy="96.8" r="0.4" fill="#6e6e6e"/><circle cx="145.2" cy="85.9" r="0.4" fill="#6e6e6e"/><circle cx="15.0" cy="150.5" r="0.4" fill="#6e6e6e"/><circle cx="152.0" cy="51.8" r="0.4" fill="#6e6e6e"/><circle cx="88.5" cy="85.7" r="0.4" fill="#6e6e6e"/><circle cx="68.1" cy="14.8" r="0.4" fill="#6e6e6e"/><circle cx="263.2" cy="209.3" r="0.4" fill="#6e6e6e"/><circle cx="192.3" cy="187.7" r="0.4" fill="#6e6e6e"/><circle cx="121.7" cy="174.4" r="0.4" fill="#6e6e6e"/><circle cx="64.0" cy="161.7" r="0.4" fill="#6e6e6e"/><circle cx="163.7" cy="195.7" r="0.4" fill="#6e6e6e"/><circle cx="28.5" cy="171.6" r="0.4" fill="#6e6e6e"/><circle cx="35.8" cy="116.4" r="0.4" fill="#6e6e6e"/><circle cx="274.6" cy="0.1" r="0.4" fill="#6e6e6e"/><circle cx="70.4" cy="64.8" r="0.4" fill="#6e6e6e"/><circle cx="93.8" cy="13.6" r="0.4" fill="#6e6e6e"/><circle cx="258.5" cy="176.6" r="0.4" fill="#6e6e6e"/><circle cx="114.7" cy="77.2" r="0.4" fill="#6e6e6e"/><circle cx="169.1" cy="9.9" r="0.4" fill="#6e6e6e"/><circle cx="9.0" cy="194.6" r="0.4" fill="#6e6e6e"/><circle cx="88.9" cy="108.0" r="0.4" fill="#6e6e6e"/><circle cx="269.7" cy="211.7" r="0.4" fill="#6e6e6e"/><circle cx="136.5" cy="44.7" r="0.4" fill="#6e6e6e"/><circle cx="85.3" cy="199.8" r="0.4" fill="#6e6e6e"/><circle cx="259.0" cy="42.3" r="0.4" fill="#6e6e6e"/><circle cx="242.0" cy="76.7" r="0.4" fill="#6e6e6e"/><circle cx="136.5" cy="37.2" r="0.4" fill="#6e6e6e"/><circle cx="254.1" cy="215.6" r="0.4" fill="#6e6e6e"/><circle cx="58.3" cy="137.0" r="0.4" fill="#6e6e6e"/><circle cx="55.3" cy="190.6" r="0.4" fill="#6e6e6e"/><circle cx="14.4" cy="23.0" r="0.4" fill="#6e6e6e"/><circle cx="209.6" cy="67.8" r="0.4" fill="#6e6e6e"/><circle cx="260.0" cy="188.4" r="0.4" fill="#6e6e6e"/><circle cx="206.0" cy="29.2" r="0.4" fill="#6e6e6e"/><circle cx="201.0" cy="203.1" r="0.4" fill="#6e6e6e"/><circle cx="128.6" cy="17.1" r="0.4" fill="#6e6e6e"/><circle cx="64.5" cy="66.5" r="0.4" fill="#6e6e6e"/><circle cx="205.2" cy="42.6" r="0.4" fill="#6e6e6e"/><circle cx="52.3" cy="51.0" r="0.4" fill="#6e6e6e"/><circle cx="191.9" cy="171.2" r="0.4" fill="#6e6e6e"/><circle cx="107.6" cy="143.4" r="0.4" fill="#6e6e6e"/><circle cx="255.4" cy="127.8" r="0.4" fill="#6e6e6e"/><circle cx="66.1" cy="65.2" r="0.4" fill="#6e6e6e"/><circle cx="267.6" cy="144.5" r="0.4" fill="#6e6e6e"/><circle cx="79.9" cy="138.6" r="0.4" fill="#6e6e6e"/><circle cx="26.0" cy="212.9" r="0.4" fill="#6e6e6e"/><circle cx="127.2" cy="114.4" r="0.4" fill="#6e6e6e"/><circle cx="153.3" cy="9.8" r="0.4" fill="#6e6e6e"/><circle cx="173.2" cy="61.6" r="0.4" fill="#6e6e6e"/><circle cx="72.5" cy="174.0" r="0.4" fill="#6e6e6e"/><circle cx="25.2" cy="61.8" r="0.4" fill="#6e6e6e"/><circle cx="218.2" cy="53.3" r="0.4" fill="#6e6e6e"/><circle cx="80.6" cy="118.7" r="0.4" fill="#6e6e6e"/><circle cx="53.8" cy="194.3" r="0.4" fill="#6e6e6e"/><circle cx="285.3" cy="7.3" r="0.4" fill="#6e6e6e"/><circle cx="133.3" cy="162.6" r="0.4" fill="#6e6e6e"/><circle cx="111.1" cy="201.3" r="0.4" fill="#6e6e6e"/><circle cx="144.4" cy="39.0" r="0.4" fill="#6e6e6e"/><circle cx="160.6" cy="139.7" r="0.4" fill="#6e6e6e"/><circle cx="103.9" cy="142.6" r="0.4" fill="#6e6e6e"/><circle cx="226.1" cy="111.9" r="0.4" fill="#6e6e6e"/><circle cx="146.0" cy="183.1" r="0.4" fill="#6e6e6e"/><circle cx="197.6" cy="112.7" r="0.4" fill="#6e6e6e"/><circle cx="274.8" cy="37.7" r="0.4" fill="#6e6e6e"/><circle cx="225.2" cy="35.8" r="0.4" fill="#6e6e6e"/><circle cx="175.6" cy="51.0" r="0.4" fill="#6e6e6e"/><circle cx="127.2" cy="167.4" r="0.4" fill="#6e6e6e"/><circle cx="227.2" cy="171.4" r="0.4" fill="#6e6e6e"/><circle cx="68.1" cy="105.9" r="0.4" fill="#6e6e6e"/><circle cx="63.9" cy="125.6" r="0.4" fill="#6e6e6e"/><circle cx="144.1" cy="7.7" r="0.4" fill="#6e6e6e"/><circle cx="172.4" cy="154.8" r="0.4" fill="#6e6e6e"/><circle cx="165.4" cy="189.1" r="0.4" fill="#6e6e6e"/><circle cx="52.0" cy="32.9" r="0.4" fill="#6e6e6e"/><circle cx="5.1" cy="107.5" r="0.4" fill="#6e6e6e"/><circle cx="125.5" cy="95.7" r="0.4" fill="#6e6e6e"/><circle cx="75.9" cy="173.0" r="0.4" fill="#6e6e6e"/><circle cx="20.9" cy="196.5" r="0.4" fill="#6e6e6e"/><circle cx="164.3" cy="117.7" r="0.4" fill="#6e6e6e"/><circle cx="228.6" cy="51.5" r="0.4" fill="#6e6e6e"/><circle cx="42.2" cy="67.4" r="0.4" fill="#6e6e6e"/><circle cx="12.2" cy="68.1" r="0.4" fill="#6e6e6e"/><circle cx="179.4" cy="113.8" r="0.4" fill="#6e6e6e"/><circle cx="76.5" cy="127.5" r="0.4" fill="#6e6e6e"/><circle cx="25.6" cy="177.7" r="0.4" fill="#6e6e6e"/><circle cx="49.6" cy="55.2" r="0.4" fill="#6e6e6e"/><circle cx="46.2" cy="149.6" r="0.4" fill="#6e6e6e"/><circle cx="240.0" cy="170.4" r="0.4" fill="#6e6e6e"/><circle cx="17.7" cy="88.9" r="0.4" fill="#6e6e6e"/><circle cx="105.2" cy="46.9" r="0.4" fill="#6e6e6e"/><circle cx="280.3" cy="9.1" r="0.4" fill="#6e6e6e"/><circle cx="141.4" cy="164.9" r="0.4" fill="#6e6e6e"/><circle cx="284.8" cy="31.3" r="0.4" fill="#6e6e6e"/><circle cx="131.5" cy="161.4" r="0.4" fill="#6e6e6e"/><circle cx="11.3" cy="52.1" r="0.4" fill="#6e6e6e"/><circle cx="257.1" cy="30.7" r="0.4" fill="#6e6e6e"/><circle cx="113.5" cy="64.6" r="0.4" fill="#6e6e6e"/><circle cx="122.6" cy="16.6" r="0.4" fill="#6e6e6e"/><circle cx="9.9" cy="215.8" r="0.4" fill="#6e6e6e"/><circle cx="220.4" cy="159.0" r="0.4" fill="#6e6e6e"/><circle cx="66.4" cy="54.8" r="0.4" fill="#6e6e6e"/><circle cx="159.4" cy="52.3" r="0.4" fill="#6e6e6e"/><circle cx="133.3" cy="202.0" r="0.4" fill="#6e6e6e"/><circle cx="105.1" cy="73.0" r="0.4" fill="#6e6e6e"/><circle cx="283.4" cy="132.3" r="0.4" fill="#6e6e6e"/><circle cx="11.5" cy="87.3" r="0.4" fill="#6e6e6e"/><circle cx="187.7" cy="12.7" r="0.4" fill="#6e6e6e"/><circle cx="99.1" cy="150.5" r="0.4" fill="#6e6e6e"/><circle cx="249.6" cy="127.9" r="0.4" fill="#6e6e6e"/><circle cx="256.0" cy="100.2" r="0.4" fill="#6e6e6e"/><circle cx="113.5" cy="182.6" r="0.4" fill="#6e6e6e"/><circle cx="110.1" cy="169.2" r="0.4" fill="#6e6e6e"/><circle cx="62.2" cy="75.2" r="0.4" fill="#6e6e6e"/><circle cx="53.0" cy="119.0" r="0.4" fill="#6e6e6e"/><circle cx="47.3" cy="44.1" r="0.4" fill="#6e6e6e"/><circle cx="61.9" cy="101.3" r="0.4" fill="#6e6e6e"/><circle cx="89.1" cy="96.8" r="0.4" fill="#6e6e6e"/><circle cx="286.9" cy="147.1" r="0.4" fill="#6e6e6e"/><circle cx="249.2" cy="44.3" r="0.4" fill="#6e6e6e"/><circle cx="110.6" cy="15.8" r="0.4" fill="#6e6e6e"/><circle cx="199.7" cy="78.6" r="0.4" fill="#6e6e6e"/><circle cx="79.3" cy="4.0" r="0.4" fill="#6e6e6e"/><circle cx="52.6" cy="56.8" r="0.4" fill="#6e6e6e"/><circle cx="113.5" cy="200.0" r="0.4" fill="#6e6e6e"/><circle cx="206.5" cy="58.2" r="0.4" fill="#6e6e6e"/><circle cx="104.3" cy="33.3" r="0.4" fill="#6e6e6e"/><circle cx="270.5" cy="77.9" r="0.4" fill="#6e6e6e"/><circle cx="221.1" cy="156.7" r="0.4" fill="#6e6e6e"/><circle cx="262.0" cy="4.4" r="0.4" fill="#6e6e6e"/><circle cx="93.0" cy="83.3" r="0.4" fill="#6e6e6e"/><circle cx="24.0" cy="191.1" r="0.4" fill="#6e6e6e"/><circle cx="93.9" cy="166.9" r="0.4" fill="#6e6e6e"/><circle cx="150.0" cy="11.9" r="0.4" fill="#6e6e6e"/><circle cx="113.8" cy="51.6" r="0.4" fill="#6e6e6e"/><circle cx="11.8" cy="32.7" r="0.4" fill="#6e6e6e"/><circle cx="171.9" cy="6.9" r="0.4" fill="#6e6e6e"/><circle cx="90.2" cy="91.9" r="0.4" fill="#6e6e6e"/><circle cx="157.1" cy="29.5" r="0.4" fill="#6e6e6e"/><circle cx="204.1" cy="56.4" r="0.4" fill="#6e6e6e"/><circle cx="209.5" cy="144.3" r="0.4" fill="#6e6e6e"/><circle cx="42.5" cy="44.4" r="0.4" fill="#6e6e6e"/><circle cx="81.0" cy="154.4" r="0.4" fill="#6e6e6e"/><circle cx="117.1" cy="83.7" r="0.4" fill="#6e6e6e"/><circle cx="250.1" cy="49.0" r="0.4" fill="#6e6e6e"/><circle cx="84.4" cy="74.7" r="0.4" fill="#6e6e6e"/><circle cx="62.3" cy="8.8" r="0.4" fill="#6e6e6e"/><circle cx="7.1" cy="136.5" r="0.4" fill="#6e6e6e"/><circle cx="163.4" cy="175.2" r="0.4" fill="#6e6e6e"/><circle cx="281.8" cy="64.6" r="0.4" fill="#6e6e6e"/><circle cx="193.6" cy="199.1" r="0.4" fill="#6e6e6e"/><circle cx="62.4" cy="149.3" r="0.4" fill="#6e6e6e"/><circle cx="192.5" cy="206.9" r="0.4" fill="#6e6e6e"/><circle cx="250.8" cy="50.8" r="0.4" fill="#6e6e6e"/><circle cx="182.7" cy="19.5" r="0.4" fill="#6e6e6e"/><circle cx="123.5" cy="85.0" r="0.4" fill="#6e6e6e"/><circle cx="17.4" cy="83.0" r="0.4" fill="#6e6e6e"/><circle cx="94.8" cy="107.7" r="0.4" fill="#6e6e6e"/><circle cx="80.8" cy="34.4" r="0.4" fill="#6e6e6e"/><circle cx="116.2" cy="102.9" r="0.4" fill="#6e6e6e"/><circle cx="48.1" cy="144.1" r="0.4" fill="#6e6e6e"/><circle cx="69.3" cy="20.2" r="0.4" fill="#6e6e6e"/><circle cx="98.7" cy="91.5" r="0.4" fill="#6e6e6e"/><circle cx="43.5" cy="126.2" r="0.4" fill="#6e6e6e"/><circle cx="202.6" cy="119.8" r="0.4" fill="#6e6e6e"/><circle cx="202.2" cy="5.0" r="0.4" fill="#6e6e6e"/><circle cx="113.0" cy="78.9" r="0.4" fill="#6e6e6e"/><circle cx="18.2" cy="87.6" r="0.4" fill="#6e6e6e"/><circle cx="15.8" cy="107.3" r="0.4" fill="#6e6e6e"/><circle cx="169.2" cy="101.6" r="0.4" fill="#6e6e6e"/><circle cx="94.0" cy="54.9" r="0.4" fill="#6e6e6e"/><circle cx="6.8" cy="75.2" r="0.4" fill="#6e6e6e"/><circle cx="257.5" cy="122.5" r="0.4" fill="#6e6e6e"/><circle cx="75.6" cy="144.7" r="0.4" fill="#6e6e6e"/><circle cx="53.7" cy="101.6" r="0.4" fill="#6e6e6e"/><circle cx="177.7" cy="206.8" r="0.4" fill="#6e6e6e"/><circle cx="104.7" cy="124.8" r="0.4" fill="#6e6e6e"/><circle cx="272.2" cy="167.1" r="0.4" fill="#6e6e6e"/><circle cx="181.2" cy="134.5" r="0.4" fill="#6e6e6e"/><circle cx="118.7" cy="90.0" r="0.4" fill="#6e6e6e"/><circle cx="79.8" cy="179.7" r="0.4" fill="#6e6e6e"/><circle cx="254.1" cy="82.7" r="0.4" fill="#6e6e6e"/><circle cx="262.7" cy="8.3" r="0.4" fill="#6e6e6e"/><circle cx="39.2" cy="109.8" r="0.4" fill="#6e6e6e"/><circle cx="89.1" cy="78.1" r="0.4" fill="#6e6e6e"/><circle cx="282.2" cy="32.5" r="0.4" fill="#6e6e6e"/><circle cx="55.6" cy="49.5" r="0.4" fill="#6e6e6e"/><circle cx="196.4" cy="50.8" r="0.4" fill="#6e6e6e"/><circle cx="0.3" cy="117.8" r="0.4" fill="#6e6e6e"/><g stroke="#858585" stroke-width="0.55" fill="none" opacity="0.75"><path d="M115.9 49.6 C120.1 48.9 127.2 47.7 133.4 48.9"/><path d="M244.2 211.0 C241.7 206.0 250.7 204.1 251.4 198.5"/><path d="M199.5 150.9 C193.9 148.0 187.5 155.1 180.7 155.2"/><path d="M164.0 76.1 C164.6 71.6 169.8 65.0 168.1 58.0"/><path d="M95.4 36.2 C97.3 41.6 102.7 42.0 107.7 37.2"/><path d="M208.0 20.4 C212.5 19.3 220.9 20.6 225.9 14.8"/><path d="M254.2 5.0 C250.8 1.2 255.8 -5.3 254.6 -11.1"/><path d="M72.1 154.1 C70.8 149.9 72.7 144.1 78.8 141.4"/><path d="M165.2 93.4 C170.1 96.2 171.7 103.1 169.8 110.0"/><path d="M107.5 143.4 C113.0 140.1 105.5 135.4 106.0 130.6"/><path d="M285.2 28.8 C287.9 31.3 287.7 38.3 291.0 42.9"/><path d="M290.2 9.9 C285.3 13.4 289.4 17.9 293.0 21.7"/><path d="M292.4 20.4 C292.9 18.4 295.9 14.3 297.8 10.5"/><path d="M86.2 178.3 C83.6 180.1 82.7 186.5 78.9 190.1"/><path d="M288.2 86.3 C292.9 88.6 287.9 97.7 293.9 101.7"/><path d="M27.8 202.7 C32.4 199.1 30.0 192.5 28.0 186.8"/><path d="M166.1 30.4 C165.8 34.7 172.1 36.7 175.8 40.1"/><path d="M70.3 6.3 C66.6 2.2 60.3 -3.5 52.0 -1.5"/><path d="M138.6 217.1 C137.3 212.3 135.8 204.5 132.8 198.3"/><path d="M116.4 9.9 C120.8 9.8 126.4 16.0 133.1 15.4"/><path d="M255.4 218.3 C259.0 214.1 268.6 217.5 273.5 211.5"/><path d="M43.4 21.3 C39.2 22.6 36.2 15.1 30.4 14.7"/><path d="M-3.8 44.0 C-5.6 44.8 -9.5 49.3 -14.5 46.8"/><path d="M213.3 88.5 C214.8 94.1 214.7 102.3 207.0 106.7"/><path d="M278.9 89.2 C284.4 90.5 275.8 99.0 282.7 102.2"/><path d="M65.5 81.0 C65.6 75.4 74.4 73.8 77.5 68.2"/><path d="M98.6 60.4 C93.4 58.1 90.0 63.8 86.8 68.4"/><path d="M61.6 163.8 C64.6 168.7 71.3 171.6 78.7 168.9"/><path d="M97.0 92.6 C93.4 91.2 86.8 89.8 81.0 91.6"/><path d="M276.4 44.0 C276.3 48.3 266.6 46.8 266.1 53.7"/><path d="M123.1 209.3 C120.0 206.5 125.1 199.1 120.2 194.5"/><path d="M198.3 206.2 C201.0 204.6 196.6 196.3 203.9 194.6"/><path d="M186.2 83.3 C189.0 84.5 195.0 86.9 194.4 93.6"/><path d="M185.3 110.6 C189.1 107.9 193.2 111.7 196.4 115.6"/><path d="M195.8 88.2 C197.0 85.5 201.5 82.0 205.7 79.4"/><path d="M8.4 135.9 C11.8 133.5 17.0 127.4 24.4 130.4"/><path d="M135.3 222.0 C138.4 224.8 141.9 230.5 136.4 236.1"/><path d="M250.5 24.6 C246.7 21.7 240.5 29.4 234.6 25.6"/><path d="M273.4 185.1 C278.0 190.4 265.4 193.5 268.7 200.5"/><path d="M206.2 55.1 C205.3 58.5 206.8 66.0 200.7 69.7"/><path d="M76.3 139.2 C71.3 140.6 66.8 134.4 61.5 131.9"/><path d="M233.0 191.0 C237.4 195.4 235.2 202.0 230.9 207.4"/><path d="M101.7 17.8 C97.6 21.4 91.8 19.6 87.6 14.5"/><path d="M48.2 85.7 C49.7 91.8 37.5 91.8 38.2 99.7"/><path d="M55.2 139.4 C49.5 139.9 48.1 149.2 42.2 152.2"/><path d="M1.8 69.5 C5.8 66.8 5.1 58.7 8.7 53.7"/><path d="M50.7 27.6 C47.7 32.4 49.8 38.6 56.1 42.3"/><path d="M176.1 73.5 C172.1 69.2 168.8 61.4 169.1 53.7"/><path d="M86.3 85.3 C84.5 81.5 76.4 78.7 75.8 71.5"/><path d="M128.8 110.8 C126.7 114.2 119.0 111.2 115.3 116.0"/><path d="M81.2 189.1 C80.3 183.8 84.7 176.7 85.7 170.0"/><path d="M113.5 164.7 C113.1 171.0 120.9 171.4 125.9 173.9"/><path d="M127.7 207.5 C126.8 202.8 133.7 197.1 132.4 190.2"/><path d="M35.3 194.1 C37.2 190.7 31.5 184.3 35.4 178.9"/><path d="M168.9 116.9 C167.7 109.9 159.2 107.9 152.7 105.2"/><path d="M212.3 143.8 C210.6 136.6 224.3 136.1 223.4 127.2"/><path d="M138.2 76.6 C140.7 73.9 146.7 73.4 152.0 73.5"/><path d="M288.2 217.1 C290.9 212.7 296.7 207.5 303.4 205.3"/><path d="M18.2 98.1 C23.6 98.4 24.0 86.7 32.5 87.9"/><path d="M108.2 26.3 C114.8 27.4 120.1 22.0 122.7 14.9"/><path d="M181.0 159.7 C178.3 154.9 177.9 147.1 181.4 140.6"/><path d="M133.2 1.9 C133.5 8.9 120.3 8.6 120.2 17.6"/><path d="M152.8 113.9 C150.7 109.1 143.3 106.1 138.3 101.8"/><path d="M162.0 23.6 C160.2 19.5 151.4 20.9 148.3 15.1"/><path d="M118.2 5.3 C116.9 2.0 116.7 -4.6 115.1 -9.9"/><path d="M25.3 184.5 C22.1 180.2 18.6 172.6 13.6 167.3"/><path d="M255.0 210.9 C258.8 213.5 258.9 204.1 264.5 205.2"/><path d="M210.4 31.7 C211.5 36.7 216.8 35.4 221.5 33.9"/><path d="M184.0 185.5 C182.2 179.7 175.5 180.0 169.5 181.2"/><path d="M271.7 69.6 C275.6 64.7 282.7 63.5 289.2 68.4"/><path d="M147.0 197.2 C147.6 193.1 155.8 194.0 158.1 188.5"/><path d="M125.3 100.8 C127.9 98.5 135.7 96.6 134.9 88.9"/><path d="M17.2 115.4 C19.4 119.6 24.9 122.9 31.5 119.9"/><path d="M88.9 101.7 C88.5 97.2 93.3 89.1 86.7 83.4"/><path d="M285.3 -0.7 C288.8 3.5 297.2 5.8 302.5 10.7"/><path d="M87.9 134.4 C90.5 136.0 95.7 139.1 99.9 142.0"/><path d="M11.8 13.9 C8.3 11.0 12.8 5.2 12.0 0.2"/><path d="M116.7 62.9 C122.9 62.4 123.4 67.9 121.7 73.6"/><path d="M89.5 182.9 C83.3 185.7 89.9 194.7 85.3 199.9"/><path d="M178.7 121.3 C172.5 118.0 170.9 131.0 163.1 129.0"/><path d="M168.3 0.2 C170.8 3.4 174.9 9.5 169.6 15.4"/><path d="M21.0 170.4 C25.8 170.1 32.5 166.6 38.3 163.6"/><path d="M31.3 70.8 C26.9 73.4 36.0 77.7 32.4 82.5"/><path d="M156.5 19.4 C150.6 21.4 149.4 13.9 146.1 9.9"/><path d="M61.6 89.8 C65.3 95.3 75.0 88.3 80.5 94.2"/><path d="M7.5 90.9 C7.0 84.3 15.8 83.0 20.2 78.6"/><path d="M108.8 169.0 C107.7 163.1 98.7 162.5 94.2 157.7"/><path d="M100.5 30.4 C102.7 27.0 108.0 22.3 110.5 16.7"/><path d="M248.6 78.0 C254.6 74.8 256.3 84.9 262.3 85.9"/><path d="M65.7 57.7 C63.3 61.9 61.8 69.0 67.8 74.3"/><path d="M110.8 155.7 C114.2 153.4 118.6 145.9 126.5 148.6"/><path d="M130.9 102.4 C135.1 97.3 131.8 90.1 128.8 84.0"/><path d="M9.1 154.1 C11.8 157.5 17.1 162.3 24.2 161.0"/><path d="M220.5 175.2 C218.7 169.8 212.6 165.2 205.1 164.4"/><path d="M176.7 26.1 C181.1 30.5 180.8 37.4 175.1 42.9"/><path d="M104.6 212.5 C109.4 214.6 109.0 220.7 107.4 226.2"/><path d="M72.9 1.3 C75.0 4.3 80.5 6.1 86.0 4.4"/><path d="M140.6 54.3 C141.1 51.5 138.1 44.8 143.6 40.9"/><path d="M253.5 189.9 C258.2 190.1 261.9 196.3 266.2 200.3"/><path d="M269.0 167.1 C263.9 164.7 271.1 160.1 269.7 155.6"/><path d="M67.3 95.5 C66.5 88.6 75.5 86.8 79.9 82.2"/><path d="M96.7 49.1 C96.1 54.8 90.0 53.2 85.2 52.8"/><path d="M266.4 20.1 C270.9 15.7 272.5 25.3 277.6 25.0"/><path d="M11.5 144.4 C9.3 144.4 2.7 146.8 1.2 139.7"/><path d="M252.8 172.7 C255.0 172.6 259.6 177.4 264.5 174.2"/><path d="M100.2 105.2 C99.7 100.8 96.5 94.1 94.3 88.2"/><path d="M137.6 121.7 C133.0 118.1 126.6 121.2 121.2 124.6"/><path d="M201.4 207.3 C197.0 213.2 188.8 213.6 181.1 210.4"/><path d="M4.5 107.6 C8.9 108.8 15.0 112.7 19.6 117.2"/><path d="M18.7 113.4 C15.6 109.4 13.1 119.4 7.8 116.2"/><path d="M1.7 5.8 C-0.2 9.7 -3.0 16.5 -6.9 21.5"/><path d="M233.0 -5.1 C226.4 -1.8 220.1 -6.6 215.8 -12.9"/><path d="M92.6 73.6 C88.3 70.3 80.4 73.5 74.0 71.8"/><path d="M98.4 146.7 C99.8 141.6 107.6 148.1 111.2 143.0"/><path d="M70.6 106.5 C66.9 108.9 70.5 115.8 67.6 120.5"/><path d="M149.0 55.4 C144.9 54.8 141.5 59.3 139.8 64.3"/><path d="M210.9 150.3 C205.0 152.7 211.3 161.3 206.7 166.2"/><path d="M57.7 89.3 C54.4 87.7 48.6 94.8 43.0 90.2"/><path d="M110.2 29.4 C107.1 33.4 110.5 42.1 105.5 47.6"/><path d="M81.4 132.3 C85.4 135.6 76.1 142.7 82.2 148.0"/><path d="M106.3 12.2 C102.5 10.4 101.9 20.0 95.6 18.5"/><path d="M269.7 74.1 C268.7 77.4 264.9 82.2 258.5 79.3"/><path d="M34.1 150.3 C34.4 157.3 24.9 157.9 20.5 162.6"/><path d="M28.9 58.4 C25.5 55.7 21.4 59.5 18.0 62.8"/><path d="M85.0 35.0 C81.9 32.7 76.9 28.2 73.3 23.6"/><path d="M149.7 207.3 C149.9 201.5 143.6 201.2 138.2 200.8"/><path d="M268.7 106.6 C266.4 104.5 265.9 97.6 261.1 94.5"/><path d="M287.1 101.1 C290.7 104.3 295.0 111.7 302.6 112.8"/><path d="M286.0 4.5 C280.4 7.3 281.2 13.7 284.8 19.4"/><path d="M211.6 43.2 C208.5 46.4 203.3 42.1 198.5 41.5"/><path d="M131.1 36.7 C128.6 31.0 122.4 33.0 117.1 35.4"/><path d="M107.8 104.3 C108.7 107.7 117.4 107.4 117.9 114.3"/><path d="M122.7 116.6 C124.4 111.0 132.3 117.4 136.5 113.0"/><path d="M247.6 191.5 C240.7 191.4 244.4 181.4 239.2 177.8"/><path d="M213.3 50.3 C218.1 46.9 218.8 56.5 224.2 56.6"/><path d="M202.8 75.1 C208.0 71.7 212.4 78.6 217.7 80.9"/><path d="M-3.2 104.5 C-4.3 100.5 -1.4 93.8 -1.2 87.9"/><path d="M145.6 106.5 C146.8 112.3 153.6 117.5 158.6 122.6"/><path d="M232.0 51.3 C227.2 54.0 230.3 64.5 222.9 68.0"/><path d="M119.7 121.7 C116.2 122.7 109.2 122.7 104.7 127.0"/><path d="M144.3 70.1 C139.6 68.9 138.1 63.5 140.0 57.7"/><path d="M267.3 152.7 C269.6 158.0 267.3 165.1 262.0 170.1"/><path d="M237.7 61.1 C243.2 55.8 237.1 47.9 236.9 40.9"/><path d="M228.4 134.7 C225.0 138.9 214.4 137.3 211.2 145.5"/><path d="M26.4 218.8 C21.6 218.3 21.9 226.9 16.6 229.0"/><path d="M286.2 133.8 C286.9 126.9 274.7 128.5 273.3 120.8"/><path d="M231.8 193.5 C237.2 194.1 243.9 199.2 250.4 202.1"/><path d="M99.3 -1.4 C99.6 -7.1 91.2 -10.9 89.2 -17.5"/><path d="M203.3 109.1 C207.9 108.0 205.2 100.4 208.8 96.5"/><path d="M273.0 71.6 C267.3 71.6 263.5 82.3 254.9 80.5"/><path d="M283.2 167.3 C284.4 164.6 287.7 159.8 290.1 155.3"/><path d="M254.9 115.8 C259.9 118.0 267.4 117.3 273.1 112.6"/><path d="M64.9 68.3 C63.8 65.8 58.3 65.5 54.5 63.4"/><path d="M188.3 87.4 C190.8 86.2 192.3 78.2 199.5 80.0"/><path d="M124.3 153.0 C125.7 156.9 128.7 164.0 123.0 169.5"/><path d="M67.5 117.6 C63.7 113.9 57.1 121.0 51.3 117.9"/><path d="M41.0 116.8 C39.0 112.1 44.9 105.4 43.6 98.8"/><path d="M191.1 153.8 C195.7 157.4 200.7 151.4 205.9 149.6"/><path d="M257.0 7.3 C253.4 8.2 249.5 2.9 244.6 1.4"/><path d="M122.4 127.7 C124.3 131.0 124.9 137.3 123.0 142.8"/><path d="M7.7 153.4 C6.5 151.7 6.9 144.2 -0.3 145.1"/><path d="M109.7 99.4 C103.0 99.5 99.2 91.0 93.5 86.7"/><path d="M87.5 214.9 C87.6 210.4 78.0 212.0 77.2 205.3"/><path d="M115.5 87.5 C115.7 92.0 110.6 95.0 105.2 96.4"/><path d="M107.4 93.2 C109.9 90.9 116.4 91.6 121.0 89.1"/><path d="M228.3 97.7 C233.3 97.4 241.3 97.0 247.8 94.5"/><path d="M288.2 170.7 C290.0 165.9 299.0 166.0 302.7 160.4"/><path d="M279.4 145.9 C282.6 148.0 281.3 156.1 286.9 159.3"/><path d="M157.7 213.6 C164.9 213.1 164.9 204.3 167.5 198.4"/><path d="M72.5 130.8 C66.0 128.7 74.3 120.8 69.7 116.1"/><path d="M12.4 129.6 C9.2 133.4 7.9 141.5 4.1 147.1"/><path d="M224.7 165.1 C228.3 164.3 232.6 168.5 236.6 171.6"/><path d="M288.4 29.6 C290.5 33.1 292.0 39.5 285.7 43.6"/><path d="M167.3 114.6 C169.8 113.0 175.2 109.6 180.0 114.2"/><path d="M84.4 175.6 C85.9 173.3 91.5 172.2 95.4 169.6"/><path d="M287.3 124.8 C285.2 128.6 277.0 122.6 273.4 128.9"/><path d="M199.9 153.7 C196.0 155.2 194.0 161.2 192.9 166.7"/><path d="M4.8 82.6 C4.3 85.9 12.9 86.7 11.7 93.1"/><path d="M67.9 33.9 C63.9 35.1 60.5 31.1 59.1 25.9"/><path d="M138.2 151.7 C132.8 155.1 126.5 146.0 119.3 148.3"/><path d="M201.4 73.8 C199.2 75.4 193.8 77.9 191.9 82.9"/><path d="M239.4 125.9 C241.4 131.9 247.9 137.2 255.6 139.1"/><path d="M42.2 210.0 C44.8 207.6 44.3 199.6 50.6 197.1"/><path d="M198.8 32.1 C204.2 30.8 202.4 20.0 209.9 17.9"/><path d="M62.8 74.8 C67.6 69.7 58.9 63.4 60.4 56.8"/><path d="M248.2 119.5 C247.4 125.4 253.8 124.8 258.6 125.5"/><path d="M171.3 188.5 C171.5 182.3 163.5 187.8 160.2 183.9"/><path d="M77.9 148.6 C78.6 151.6 78.6 158.0 82.7 162.0"/><path d="M101.6 73.9 C104.4 70.9 107.3 65.0 101.5 59.9"/><path d="M169.4 54.4 C166.0 50.9 159.7 46.2 154.7 41.7"/><path d="M261.4 167.4 C266.1 168.7 269.6 175.4 274.1 179.7"/><path d="M114.7 108.6 C118.3 107.5 124.3 103.2 130.7 105.4"/><path d="M63.4 -1.9 C60.7 -4.9 64.3 -9.0 67.0 -12.6"/><path d="M51.2 193.7 C51.0 198.5 47.8 205.1 42.0 209.0"/><path d="M111.8 122.2 C111.2 129.5 104.5 134.5 96.5 136.5"/><path d="M72.2 214.9 C75.1 218.1 83.4 213.5 87.7 219.3"/><path d="M286.9 13.1 C284.8 9.0 280.0 12.1 275.8 13.6"/><path d="M26.1 123.4 C24.0 127.6 17.3 128.1 11.8 129.1"/><path d="M45.0 102.0 C39.5 101.7 35.3 108.2 30.6 112.4"/><path d="M98.0 128.0 C96.8 131.7 104.1 131.8 105.6 136.2"/><path d="M19.1 164.5 C21.1 159.6 30.0 155.3 29.5 146.7"/><path d="M74.3 181.9 C69.8 187.2 70.8 194.7 77.3 200.2"/><path d="M34.8 40.8 C32.4 40.0 25.9 44.7 22.3 38.4"/><path d="M71.8 179.2 C68.9 176.0 62.5 171.0 64.8 163.3"/><path d="M161.8 84.7 C162.9 88.3 154.6 90.7 155.8 96.8"/><path d="M283.9 46.9 C282.8 41.5 291.5 34.9 287.6 27.1"/><path d="M64.7 63.6 C67.0 70.4 59.8 74.4 54.6 78.5"/><path d="M112.7 157.0 C114.8 157.0 120.0 158.1 124.3 156.5"/><path d="M7.5 2.6 C4.1 0.9 -2.3 -0.6 -7.1 4.2"/><path d="M270.5 36.5 C274.1 33.3 280.8 35.7 286.5 36.5"/><path d="M49.6 157.3 C47.9 150.1 40.1 148.0 32.3 148.1"/><path d="M246.6 138.2 C249.4 142.7 241.5 150.4 247.1 156.8"/><path d="M36.9 31.8 C33.9 35.7 30.5 28.7 26.0 29.1"/><path d="M12.3 187.9 C13.1 195.4 20.1 199.5 28.5 199.9"/><path d="M51.8 18.3 C54.3 13.2 52.1 6.4 46.5 1.8"/><path d="M110.2 30.8 C113.0 33.6 119.5 35.4 124.8 37.5"/><path d="M180.1 36.9 C177.1 32.8 182.7 30.4 185.8 27.3"/><path d="M154.8 204.9 C150.8 204.2 149.5 196.8 144.8 193.9"/><path d="M266.2 2.2 C263.9 -1.3 264.8 -7.1 269.2 -11.4"/><path d="M272.8 35.8 C274.7 30.3 285.7 31.6 288.1 23.7"/><path d="M217.7 188.2 C216.1 181.6 221.2 176.7 228.8 175.2"/><path d="M258.5 222.9 C261.0 229.4 248.9 230.3 249.2 237.8"/><path d="M162.8 28.5 C164.0 30.9 158.9 35.1 160.6 39.9"/><path d="M178.9 38.0 C181.7 30.9 192.0 36.6 197.5 31.7"/><path d="M200.2 41.1 C199.2 43.6 193.8 46.6 192.6 51.6"/><path d="M-2.3 -6.2 C-6.1 -11.5 0.4 -14.7 4.2 -18.3"/><path d="M211.5 47.9 C215.4 43.1 222.7 41.3 229.6 45.8"/><path d="M91.5 82.5 C93.6 78.5 94.0 70.6 98.5 65.5"/><path d="M227.5 210.3 C230.2 205.2 229.6 198.0 222.5 193.8"/><path d="M53.1 161.4 C59.4 158.3 61.1 171.3 69.0 169.2"/><path d="M5.3 101.9 C3.8 106.0 3.8 114.1 -2.8 117.8"/><path d="M26.6 139.6 C24.8 133.6 18.9 134.3 13.4 137.5"/><path d="M156.2 26.6 C158.8 31.0 163.4 37.8 171.5 38.2"/><path d="M215.1 195.5 C220.2 192.8 226.0 197.2 230.9 201.2"/><path d="M83.2 172.1 C81.2 178.7 89.8 179.8 93.7 183.8"/><path d="M177.5 110.6 C179.3 115.2 184.8 109.8 189.1 111.4"/><path d="M290.7 171.1 C291.5 167.7 289.7 160.6 294.6 156.1"/><path d="M271.6 102.9 C275.5 102.1 276.2 92.0 284.3 93.5"/><path d="M115.9 16.5 C113.2 20.6 118.5 24.0 121.4 27.8"/><path d="M223.5 93.0 C219.9 88.6 229.4 84.9 227.6 78.9"/><path d="M256.9 102.3 C251.8 103.7 249.4 98.5 248.6 93.1"/><path d="M199.2 43.0 C204.8 46.8 207.9 34.4 215.3 37.3"/><path d="M36.4 169.3 C33.7 169.5 31.2 164.6 27.6 162.1"/><path d="M227.8 41.5 C224.0 40.1 217.9 36.2 211.4 36.8"/><path d="M55.2 139.1 C48.2 141.7 42.7 134.5 37.1 130.1"/><path d="M210.0 201.8 C209.5 203.8 203.9 207.4 206.9 212.8"/><path d="M277.9 187.3 C280.1 183.4 281.8 176.6 277.8 170.7"/><path d="M224.0 70.2 C226.5 65.7 234.5 65.0 239.8 61.5"/><path d="M23.0 36.7 C22.9 40.8 16.8 45.1 15.6 50.9"/><path d="M50.6 216.7 C54.0 216.3 57.4 220.6 60.3 224.3"/><path d="M222.4 134.7 C217.8 137.7 213.9 145.5 207.6 149.2"/><path d="M119.7 80.6 C120.1 84.2 128.6 85.5 128.4 92.2"/><path d="M199.0 183.5 C204.1 183.0 208.9 177.8 212.1 172.1"/><path d="M234.0 200.1 C239.4 198.5 241.1 192.5 238.8 186.1"/><path d="M260.8 11.9 C264.3 7.4 256.7 -0.4 261.4 -6.7"/><path d="M137.3 38.4 C140.7 35.8 137.1 28.2 141.1 23.6"/><path d="M187.0 173.6 C192.2 173.4 195.2 168.7 192.9 162.1"/><path d="M177.9 -1.5 C182.3 -0.6 190.0 0.7 194.1 -6.4"/><path d="M102.9 212.1 C102.7 205.3 110.6 201.3 115.7 196.5"/><path d="M238.6 17.3 C238.9 22.7 245.2 20.9 249.8 21.5"/><path d="M288.0 127.6 C285.7 133.2 278.3 137.1 271.6 140.0"/><path d="M225.2 143.8 C224.0 140.1 219.3 135.1 216.3 130.2"/><path d="M199.8 126.9 C193.9 130.3 192.6 138.1 195.1 145.6"/><path d="M44.7 208.6 C46.4 205.5 47.6 199.1 50.3 194.3"/><path d="M225.4 73.0 C217.8 73.5 218.9 83.5 214.7 88.7"/><path d="M258.7 8.6 C258.1 3.9 258.0 -3.7 260.7 -10.0"/><path d="M153.4 41.0 C155.6 38.2 162.9 43.5 166.6 37.8"/><path d="M57.2 117.2 C61.8 113.0 65.2 117.0 66.9 122.6"/><path d="M40.2 181.9 C38.1 185.3 32.8 186.9 27.5 183.8"/><path d="M56.4 20.5 C50.9 20.6 47.9 15.8 49.6 9.0"/><path d="M33.7 72.2 C30.8 68.2 29.7 61.0 32.7 54.7"/><path d="M133.7 98.9 C134.4 94.8 138.6 89.9 144.3 87.6"/><path d="M161.4 27.7 C158.7 25.2 153.8 19.7 147.1 23.6"/><path d="M120.8 210.2 C117.9 210.8 115.8 215.3 114.9 219.8"/><path d="M35.1 131.1 C30.1 131.8 26.1 136.7 27.2 143.7"/><path d="M223.6 50.8 C219.5 56.2 222.0 63.6 226.7 69.5"/><path d="M225.2 158.7 C228.0 155.9 228.8 149.3 230.2 144.0"/><path d="M71.0 179.5 C70.2 186.2 63.9 189.4 56.1 187.7"/><path d="M289.3 43.9 C286.2 45.3 286.0 50.8 285.1 55.4"/><path d="M195.6 43.6 C191.8 46.6 182.1 47.0 179.9 55.3"/><path d="M80.0 91.1 C77.6 96.1 67.9 90.2 64.1 97.1"/><path d="M212.6 69.5 C217.7 66.6 212.6 62.2 211.0 58.0"/><path d="M115.5 120.0 C113.9 117.6 119.1 113.8 118.3 109.2"/><path d="M105.3 55.7 C103.3 52.4 98.3 48.5 92.0 51.2"/><path d="M136.5 2.5 C133.7 4.1 129.9 9.1 125.9 12.5"/><path d="M28.9 173.4 C31.7 176.4 39.6 174.2 43.9 179.0"/><path d="M228.8 185.6 C226.6 189.9 219.2 192.5 214.5 196.8"/><path d="M166.6 116.7 C159.7 118.9 163.9 129.6 158.4 134.5"/><path d="M170.7 199.1 C167.8 196.6 159.5 201.1 155.7 194.2"/><path d="M163.0 31.4 C165.8 35.1 160.5 41.6 162.6 47.3"/><path d="M-1.6 49.4 C2.2 54.0 -2.9 62.6 0.5 69.1"/><path d="M203.7 159.2 C198.8 157.6 193.4 149.0 184.9 151.6"/><path d="M94.1 21.4 C87.3 21.4 83.7 29.7 78.8 34.8"/><path d="M197.0 18.1 C199.0 15.3 202.6 10.1 204.6 5.0"/><path d="M272.5 206.9 C266.7 206.8 260.3 211.2 256.4 217.5"/><path d="M188.7 129.7 C193.7 126.7 201.4 122.0 200.9 112.8"/><path d="M56.5 162.7 C52.8 162.7 50.1 167.0 50.4 172.3"/><path d="M260.0 53.3 C252.4 54.7 247.6 47.3 243.5 40.9"/><path d="M220.6 168.5 C223.5 168.4 229.4 167.1 234.3 169.3"/><path d="M182.8 29.5 C179.6 26.8 175.7 36.4 169.9 31.9"/><path d="M268.9 187.4 C266.8 191.7 257.4 194.6 257.7 203.0"/><path d="M241.2 183.4 C238.4 185.5 234.2 181.3 230.0 180.2"/><path d="M291.4 99.1 C295.4 101.8 295.1 110.0 299.4 114.8"/><path d="M16.6 201.1 C17.0 205.8 15.2 213.9 19.8 219.9"/><path d="M195.7 117.2 C195.0 115.1 192.3 110.5 187.1 110.3"/><path d="M62.7 92.2 C66.5 96.3 61.8 106.6 69.5 111.1"/><path d="M179.0 162.3 C180.1 165.8 182.6 172.3 190.0 171.8"/><path d="M9.5 150.6 C6.6 153.9 1.7 159.8 -5.5 159.9"/><path d="M240.1 217.6 C241.6 215.8 246.3 214.3 250.9 214.8"/><path d="M174.7 77.5 C169.8 78.9 161.9 83.0 155.4 76.9"/><path d="M246.1 169.6 C242.9 174.6 236.0 169.0 230.5 170.5"/><path d="M89.7 75.0 C86.3 72.5 80.3 77.8 74.8 75.8"/><path d="M84.5 82.6 C82.4 79.1 74.2 77.4 72.5 70.7"/><path d="M289.0 40.5 C290.5 46.8 296.8 44.5 302.0 43.1"/><path d="M85.5 106.2 C88.4 106.2 93.3 112.6 99.0 108.2"/><path d="M80.1 182.1 C80.7 186.6 83.0 194.3 77.8 200.0"/><path d="M12.4 28.3 C18.4 33.1 15.9 40.9 12.7 47.7"/><path d="M166.7 138.1 C172.0 135.1 172.9 142.7 176.5 145.6"/><path d="M284.4 81.1 C281.8 76.7 275.5 73.2 268.4 73.6"/><path d="M177.7 70.4 C185.4 71.8 188.5 79.3 188.0 87.6"/><path d="M68.6 179.5 C68.0 173.1 62.0 169.6 54.4 170.5"/><path d="M36.6 157.6 C39.1 154.4 42.4 163.9 47.5 159.5"/><path d="M241.8 106.5 C242.9 103.5 250.2 109.4 252.4 102.7"/><path d="M268.4 146.3 C263.5 145.1 261.0 136.8 254.9 134.1"/><path d="M170.7 89.4 C173.2 92.3 180.1 86.2 184.3 91.6"/><path d="M223.8 75.6 C217.9 75.9 218.5 70.4 219.8 65.4"/><path d="M169.3 7.4 C167.0 6.4 164.3 2.1 163.3 -2.4"/><path d="M83.3 45.4 C88.5 42.0 82.0 37.7 81.1 33.2"/><path d="M106.4 206.9 C107.9 202.3 115.7 197.1 113.9 189.1"/><path d="M174.0 191.4 C170.9 187.0 162.2 189.9 156.9 185.8"/><path d="M210.2 48.4 C203.1 46.8 198.4 40.0 198.6 31.3"/><path d="M8.7 80.4 C5.6 79.5 -0.4 79.7 -1.2 86.7"/><path d="M102.8 12.1 C105.1 10.6 106.8 4.8 110.9 1.9"/><path d="M21.8 115.0 C17.3 117.3 13.5 108.9 7.3 109.7"/><path d="M67.7 87.2 C67.8 89.2 66.3 93.9 64.7 97.9"/><path d="M276.8 149.0 C276.6 146.4 278.1 140.5 274.7 136.2"/><path d="M25.2 150.3 C29.3 153.3 28.8 142.3 35.2 144.6"/><path d="M254.5 83.8 C252.3 86.8 247.1 89.9 241.9 85.1"/><path d="M-5.3 22.9 C-10.1 21.6 -16.0 16.4 -21.8 13.3"/><path d="M184.7 24.5 C180.7 22.7 174.7 18.8 173.4 11.9"/><path d="M34.9 61.9 C37.1 55.6 25.1 56.6 25.0 49.4"/><path d="M233.4 107.3 C231.4 113.2 224.6 117.0 216.9 117.4"/><path d="M98.2 11.6 C103.7 15.7 94.8 21.5 96.8 27.3"/><path d="M253.0 216.6 C257.9 221.8 249.7 229.5 252.2 236.4"/><path d="M12.0 148.9 C7.2 145.9 2.4 152.7 -3.3 153.6"/><path d="M135.6 12.5 C138.3 7.7 144.4 2.6 152.2 3.0"/><path d="M126.2 11.3 C124.2 14.8 119.4 20.7 122.1 27.5"/><path d="M12.0 21.5 C11.1 16.1 1.6 20.3 -1.4 14.2"/><path d="M251.7 117.8 C246.7 117.6 246.1 111.0 244.3 106.2"/><path d="M182.8 3.9 C177.8 2.0 174.7 -3.7 178.0 -10.6"/><path d="M75.8 7.5 C80.8 3.9 83.5 14.3 89.9 13.0"/><path d="M-0.3 5.2 C-6.0 8.4 -10.3 15.3 -7.3 23.7"/><path d="M66.6 135.6 C61.4 135.7 57.0 143.0 50.9 145.3"/><path d="M219.4 56.2 C219.9 62.5 210.2 63.4 207.3 69.2"/><path d="M170.6 56.2 C168.7 61.4 171.6 66.7 179.1 67.4"/><path d="M67.3 21.4 C69.9 24.3 63.3 28.7 65.2 33.7"/><path d="M271.3 184.7 C269.6 189.9 268.8 199.1 260.7 202.6"/><path d="M171.0 66.7 C175.9 66.2 177.6 58.0 183.1 55.2"/><path d="M206.9 46.0 C203.9 44.7 196.9 48.5 192.4 43.5"/><path d="M152.6 133.0 C156.8 133.8 163.7 136.2 169.4 138.8"/><path d="M30.4 96.7 C24.8 98.2 20.8 106.2 14.9 110.1"/><path d="M130.0 38.9 C126.3 40.3 125.7 45.5 127.1 50.4"/><path d="M56.4 14.4 C59.1 13.0 64.5 14.3 68.9 16.2"/><path d="M139.4 130.7 C138.3 126.7 145.6 122.0 143.9 115.7"/><path d="M172.0 216.9 C177.0 217.1 178.2 225.9 184.3 227.9"/><path d="M124.9 163.9 C130.7 165.4 132.1 170.8 127.4 176.5"/><path d="M293.7 133.5 C299.2 136.4 298.5 127.8 302.6 125.7"/><path d="M181.5 170.6 C185.2 167.7 192.0 164.5 198.5 163.5"/><path d="M191.5 120.2 C186.6 119.9 182.2 113.2 176.5 110.6"/><path d="M141.8 33.6 C144.6 37.8 151.4 29.6 156.3 34.6"/><path d="M210.4 34.5 C215.2 40.0 224.5 31.7 231.2 36.8"/><path d="M289.0 199.1 C293.0 198.2 300.9 199.3 305.4 193.6"/><path d="M124.7 189.4 C122.0 186.6 116.3 182.9 112.3 178.6"/><path d="M171.0 69.5 C166.4 68.0 160.6 73.1 154.7 74.2"/><path d="M12.8 141.3 C16.0 145.1 21.8 143.8 26.6 140.2"/><path d="M121.6 128.1 C122.5 124.1 119.5 116.6 123.8 111.0"/><path d="M69.3 216.3 C71.4 220.0 78.8 216.5 83.0 220.4"/><path d="M197.0 55.8 C198.6 60.8 190.9 62.0 188.3 66.3"/><path d="M170.3 114.3 C175.6 110.3 181.4 114.7 186.2 119.3"/><path d="M286.4 -1.5 C282.7 -5.6 276.3 -10.9 268.2 -7.7"/><path d="M140.0 185.1 C138.3 179.0 132.8 178.8 127.5 183.6"/><path d="M143.5 216.0 C147.3 219.2 155.1 223.3 155.2 231.6"/><path d="M70.2 79.2 C71.8 73.9 77.7 78.5 82.2 77.7"/><path d="M142.3 173.9 C147.8 170.7 147.0 163.5 144.8 157.2"/><path d="M145.6 147.5 C144.0 143.4 141.0 136.4 143.1 129.8"/><path d="M97.8 219.0 C102.4 221.6 109.2 220.9 113.3 214.5"/><path d="M24.0 2.3 C22.5 -2.8 16.3 -5.5 9.8 -6.0"/><path d="M129.8 31.8 C133.4 36.0 135.1 44.5 138.8 50.7"/><path d="M203.9 187.2 C206.6 190.6 197.4 194.5 200.9 200.3"/><path d="M149.4 38.6 C154.1 34.7 157.2 42.6 162.2 43.8"/><path d="M276.1 100.6 C274.4 104.1 270.4 110.3 274.2 116.4"/><path d="M270.8 147.7 C273.9 145.0 276.3 138.7 277.4 132.9"/><path d="M1.0 104.4 C3.6 101.8 8.6 107.9 13.4 105.3"/><path d="M72.3 128.9 C76.5 127.9 81.4 120.9 88.5 121.4"/><path d="M27.2 103.5 C21.9 100.5 27.6 94.6 27.5 89.5"/><path d="M40.1 135.4 C41.1 130.3 37.8 125.5 30.4 126.4"/><path d="M279.3 78.4 C274.7 80.0 267.8 72.0 261.0 76.9"/><path d="M15.5 51.3 C11.5 55.2 13.4 63.3 12.1 69.7"/><path d="M174.0 111.2 C176.5 107.8 170.8 104.6 169.3 100.5"/><path d="M135.4 140.0 C138.8 142.6 147.4 140.7 151.4 146.9"/></g><g stroke="#a2a2a2" stroke-width="0.8" fill="none"><path d="M112.9 49.8 L115.9 49.6"/><path d="M242.7 213.6 L244.2 211.0"/><path d="M202.4 150.2 L199.5 150.9"/><path d="M163.3 79.0 L164.0 76.1"/><path d="M92.5 35.9 L95.4 36.2"/><path d="M205.2 21.3 L208.0 20.4"/><path d="M254.2 8.0 L254.2 5.0"/><path d="M70.7 156.8 L72.1 154.1"/><path d="M164.4 90.5 L165.2 93.4"/><path d="M107.9 146.3 L107.5 143.4"/><path d="M284.0 26.0 L285.2 28.8"/><path d="M289.5 6.9 L290.2 9.9"/><path d="M290.9 23.0 L292.4 20.4"/><path d="M87.8 175.8 L86.2 178.3"/><path d="M287.2 83.4 L288.2 86.3"/><path d="M27.8 205.7 L27.8 202.7"/><path d="M164.0 28.3 L166.1 30.4"/><path d="M73.0 7.5 L70.3 6.3"/><path d="M139.5 220.0 L138.6 217.1"/><path d="M113.5 8.9 L116.4 9.9"/><path d="M252.6 219.3 L255.4 218.3"/><path d="M46.1 22.7 L43.4 21.3"/><path d="M-0.9 43.2 L-3.8 44.0"/><path d="M214.3 85.7 L213.3 88.5"/><path d="M278.1 86.3 L278.9 89.2"/><path d="M63.4 83.2 L65.5 81.0"/><path d="M101.1 58.7 L98.6 60.4"/><path d="M58.7 162.9 L61.6 163.8"/><path d="M100.0 92.7 L97.0 92.6"/><path d="M278.6 42.0 L276.4 44.0"/><path d="M123.7 212.2 L123.1 209.3"/><path d="M197.0 208.9 L198.3 206.2"/><path d="M184.4 80.9 L186.2 83.3"/><path d="M182.6 109.4 L185.3 110.6"/><path d="M193.5 90.2 L195.8 88.2"/><path d="M5.6 136.9 L8.4 135.9"/><path d="M135.1 219.0 L135.3 222.0"/><path d="M253.5 24.5 L250.5 24.6"/><path d="M274.3 182.3 L273.4 185.1"/><path d="M207.2 52.3 L206.2 55.1"/><path d="M79.0 140.6 L76.3 139.2"/><path d="M233.4 188.0 L233.0 191.0"/><path d="M104.6 18.5 L101.7 17.8"/><path d="M49.9 83.3 L48.2 85.7"/><path d="M57.4 137.3 L55.2 139.4"/><path d="M0.6 72.3 L1.8 69.5"/><path d="M49.6 24.8 L50.7 27.6"/><path d="M177.1 76.3 L176.1 73.5"/><path d="M88.1 87.7 L86.3 85.3"/><path d="M131.6 109.8 L128.8 110.8"/><path d="M80.6 192.0 L81.2 189.1"/><path d="M111.0 162.9 L113.5 164.7"/><path d="M126.9 210.4 L127.7 207.5"/><path d="M35.2 197.1 L35.3 194.1"/><path d="M171.3 118.6 L168.9 116.9"/><path d="M210.6 146.3 L212.3 143.8"/><path d="M135.3 77.2 L138.2 76.6"/><path d="M285.8 218.9 L288.2 217.1"/><path d="M15.8 99.8 L18.2 98.1"/><path d="M105.8 28.1 L108.2 26.3"/><path d="M180.9 162.7 L181.0 159.7"/><path d="M135.1 -0.5 L133.2 1.9"/><path d="M155.1 115.9 L152.8 113.9"/><path d="M164.5 25.1 L162.0 23.6"/><path d="M118.9 8.2 L118.2 5.3"/><path d="M27.0 186.9 L25.3 184.5"/><path d="M252.4 212.5 L255.0 210.9"/><path d="M207.5 31.2 L210.4 31.7"/><path d="M186.9 186.4 L184.0 185.5"/><path d="M268.7 69.8 L271.7 69.6"/><path d="M144.7 199.0 L147.0 197.2"/><path d="M123.4 103.1 L125.3 100.8"/><path d="M14.3 114.6 L17.2 115.4"/><path d="M89.3 104.7 L88.9 101.7"/><path d="M282.8 -2.4 L285.3 -0.7"/><path d="M85.4 132.8 L87.9 134.4"/><path d="M11.7 16.9 L11.8 13.9"/><path d="M115.4 60.2 L116.7 62.9"/><path d="M90.2 180.0 L89.5 182.9"/><path d="M181.4 120.0 L178.7 121.3"/><path d="M168.1 -2.7 L168.3 0.2"/><path d="M18.2 171.5 L21.0 170.4"/><path d="M31.0 67.9 L31.3 70.8"/><path d="M158.7 21.4 L156.5 19.4"/><path d="M58.7 89.2 L61.6 89.8"/><path d="M5.3 93.0 L7.5 90.9"/><path d="M111.2 170.9 L108.8 169.0"/><path d="M98.8 32.8 L100.5 30.4"/><path d="M246.0 76.5 L248.6 78.0"/><path d="M65.3 54.7 L65.7 57.7"/><path d="M108.1 156.9 L110.8 155.7"/><path d="M131.3 105.3 L130.9 102.4"/><path d="M6.4 152.9 L9.1 154.1"/><path d="M223.0 177.0 L220.5 175.2"/><path d="M177.0 23.1 L176.7 26.1"/><path d="M104.0 209.6 L104.6 212.5"/><path d="M70.0 0.6 L72.9 1.3"/><path d="M139.9 57.2 L140.6 54.3"/><path d="M251.1 188.0 L253.5 189.9"/><path d="M268.8 170.1 L269.0 167.1"/><path d="M65.3 97.7 L67.3 95.5"/><path d="M99.5 48.1 L96.7 49.1"/><path d="M263.6 18.9 L266.4 20.1"/><path d="M14.2 145.7 L11.5 144.4"/><path d="M249.9 172.3 L252.8 172.7"/><path d="M101.1 108.1 L100.2 105.2"/><path d="M140.5 121.2 L137.6 121.7"/><path d="M204.4 206.9 L201.4 207.3"/><path d="M2.0 106.0 L4.5 107.6"/><path d="M21.6 112.6 L18.7 113.4"/><path d="M3.1 3.2 L1.7 5.8"/><path d="M235.8 -3.8 L233.0 -5.1"/><path d="M95.6 73.9 L92.6 73.6"/><path d="M95.5 147.6 L98.4 146.7"/><path d="M71.2 103.6 L70.6 106.5"/><path d="M151.2 53.3 L149.0 55.4"/><path d="M211.6 147.4 L210.9 150.3"/><path d="M60.7 89.1 L57.7 89.3"/><path d="M110.9 26.4 L110.2 29.4"/><path d="M81.2 129.3 L81.4 132.3"/><path d="M108.9 10.6 L106.3 12.2"/><path d="M272.5 72.8 L269.7 74.1"/><path d="M36.3 148.3 L34.1 150.3"/><path d="M31.7 57.3 L28.9 58.4"/><path d="M87.1 37.1 L85.0 35.0"/><path d="M152.3 208.7 L149.7 207.3"/><path d="M270.3 109.2 L268.7 106.6"/><path d="M284.7 99.3 L287.1 101.1"/><path d="M286.2 1.5 L286.0 4.5"/><path d="M214.6 43.5 L211.6 43.2"/><path d="M134.0 37.0 L131.1 36.7"/><path d="M105.6 102.2 L107.8 104.3"/><path d="M119.8 117.3 L122.7 116.6"/><path d="M249.2 194.1 L247.6 191.5"/><path d="M210.7 48.8 L213.3 50.3"/><path d="M200.0 74.0 L202.8 75.1"/><path d="M-3.5 107.5 L-3.2 104.5"/><path d="M143.7 104.2 L145.6 106.5"/><path d="M233.4 48.7 L232.0 51.3"/><path d="M122.5 120.7 L119.7 121.7"/><path d="M145.3 72.9 L144.3 70.1"/><path d="M268.2 149.9 L267.3 152.7"/><path d="M237.8 64.1 L237.7 61.1"/><path d="M231.0 133.1 L228.4 134.7"/><path d="M28.5 216.6 L26.4 218.8"/><path d="M288.4 135.9 L286.2 133.8"/><path d="M229.1 192.2 L231.8 193.5"/><path d="M100.9 1.1 L99.3 -1.4"/><path d="M202.1 111.9 L203.3 109.1"/><path d="M275.6 70.2 L273.0 71.6"/><path d="M281.7 169.9 L283.2 167.3"/><path d="M252.0 116.3 L254.9 115.8"/><path d="M67.6 69.6 L64.9 68.3"/><path d="M185.8 89.1 L188.3 87.4"/><path d="M124.5 150.0 L124.3 153.0"/><path d="M70.5 117.6 L67.5 117.6"/><path d="M40.6 119.8 L41.0 116.8"/><path d="M188.2 154.6 L191.1 153.8"/><path d="M259.7 8.6 L257.0 7.3"/><path d="M122.3 124.7 L122.4 127.7"/><path d="M9.8 155.6 L7.7 153.4"/><path d="M112.0 101.2 L109.7 99.4"/><path d="M89.7 216.9 L87.5 214.9"/><path d="M117.8 85.6 L115.5 87.5"/><path d="M104.6 94.1 L107.4 93.2"/><path d="M225.4 98.2 L228.3 97.7"/><path d="M285.8 172.5 L288.2 170.7"/><path d="M277.9 143.3 L279.4 145.9"/><path d="M156.0 216.1 L157.7 213.6"/><path d="M73.0 133.8 L72.5 130.8"/><path d="M13.7 126.9 L12.4 129.6"/><path d="M222.1 163.7 L224.7 165.1"/><path d="M289.0 26.7 L288.4 29.6"/><path d="M164.3 114.7 L167.3 114.6"/><path d="M81.8 177.0 L84.4 175.6"/><path d="M290.2 123.9 L287.3 124.8"/><path d="M201.4 151.0 L199.9 153.7"/><path d="M3.2 80.1 L4.8 82.6"/><path d="M70.1 36.0 L67.9 33.9"/><path d="M141.2 152.2 L138.2 151.7"/><path d="M203.5 71.7 L201.4 73.8"/><path d="M237.1 124.0 L239.4 125.9"/><path d="M40.6 212.6 L42.2 210.0"/><path d="M196.9 34.5 L198.8 32.1"/><path d="M63.2 77.8 L62.8 74.8"/><path d="M245.6 118.0 L248.2 119.5"/><path d="M174.1 189.7 L171.3 188.5"/><path d="M76.9 145.8 L77.9 148.6"/><path d="M101.6 76.9 L101.6 73.9"/><path d="M171.7 56.3 L169.4 54.4"/><path d="M259.3 165.4 L261.4 167.4"/><path d="M111.8 109.2 L114.7 108.6"/><path d="M62.5 1.0 L63.4 -1.9"/><path d="M52.8 191.1 L51.2 193.7"/><path d="M113.9 120.2 L111.8 122.2"/><path d="M69.3 214.1 L72.2 214.9"/><path d="M289.9 13.0 L286.9 13.1"/><path d="M28.8 122.3 L26.1 123.4"/><path d="M47.4 100.2 L45.0 102.0"/><path d="M96.0 125.8 L98.0 128.0"/><path d="M17.6 167.1 L19.1 164.5"/><path d="M73.8 178.9 L74.3 181.9"/><path d="M37.7 41.3 L34.8 40.8"/><path d="M73.0 182.0 L71.8 179.2"/><path d="M163.2 82.0 L161.8 84.7"/><path d="M283.4 49.9 L283.9 46.9"/><path d="M66.4 61.1 L64.7 63.6"/><path d="M109.7 157.1 L112.7 157.0"/><path d="M10.5 2.3 L7.5 2.6"/><path d="M267.5 36.5 L270.5 36.5"/><path d="M52.3 158.7 L49.6 157.3"/><path d="M246.5 135.2 L246.6 138.2"/><path d="M39.8 32.5 L36.9 31.8"/><path d="M9.9 186.1 L12.3 187.9"/><path d="M52.7 21.2 L51.8 18.3"/><path d="M107.5 29.6 L110.2 30.8"/><path d="M178.6 39.4 L180.1 36.9"/><path d="M156.8 207.1 L154.8 204.9"/><path d="M265.6 5.2 L266.2 2.2"/><path d="M270.5 37.7 L272.8 35.8"/><path d="M215.8 190.5 L217.7 188.2"/><path d="M260.1 220.4 L258.5 222.9"/><path d="M163.4 25.6 L162.8 28.5"/><path d="M176.1 39.0 L178.9 38.0"/><path d="M201.9 38.6 L200.2 41.1"/><path d="M-3.7 -3.6 L-2.3 -6.2"/><path d="M208.5 48.2 L211.5 47.9"/><path d="M90.3 85.3 L91.5 82.5"/><path d="M228.3 213.1 L227.5 210.3"/><path d="M50.4 160.1 L53.1 161.4"/><path d="M6.6 99.2 L5.3 101.9"/><path d="M29.5 140.1 L26.6 139.6"/><path d="M153.8 24.8 L156.2 26.6"/><path d="M212.2 194.5 L215.1 195.5"/><path d="M81.2 169.9 L83.2 172.1"/><path d="M174.5 110.4 L177.5 110.6"/><path d="M290.0 174.0 L290.7 171.1"/><path d="M269.2 104.7 L271.6 102.9"/><path d="M114.6 13.8 L115.9 16.5"/><path d="M222.6 95.8 L223.5 93.0"/><path d="M258.9 104.5 L256.9 102.3"/><path d="M196.4 44.0 L199.2 43.0"/><path d="M38.7 171.2 L36.4 169.3"/><path d="M230.7 42.4 L227.8 41.5"/><path d="M57.9 140.5 L55.2 139.1"/><path d="M210.9 198.9 L210.0 201.8"/><path d="M278.0 190.3 L277.9 187.3"/><path d="M221.4 71.6 L224.0 70.2"/><path d="M24.4 34.1 L23.0 36.7"/><path d="M48.2 214.9 L50.6 216.7"/><path d="M224.5 132.6 L222.4 134.7"/><path d="M117.9 78.2 L119.7 80.6"/><path d="M196.7 185.5 L199.0 183.5"/><path d="M233.0 202.9 L234.0 200.1"/><path d="M260.8 14.9 L260.8 11.9"/><path d="M136.5 41.3 L137.3 38.4"/><path d="M185.6 176.3 L187.0 173.6"/><path d="M175.0 -0.6 L177.9 -1.5"/><path d="M100.9 214.4 L102.9 212.1"/><path d="M235.8 16.3 L238.6 17.3"/><path d="M290.4 125.8 L288.0 127.6"/><path d="M226.8 146.3 L225.2 143.8"/><path d="M200.5 124.0 L199.8 126.9"/><path d="M43.6 211.4 L44.7 208.6"/><path d="M227.1 70.5 L225.4 73.0"/><path d="M258.4 11.6 L258.7 8.6"/><path d="M150.5 41.7 L153.4 41.0"/><path d="M54.6 115.7 L57.2 117.2"/><path d="M43.1 181.5 L40.2 181.9"/><path d="M57.9 23.1 L56.4 20.5"/><path d="M33.8 75.2 L33.7 72.2"/><path d="M131.6 101.1 L133.7 98.9"/><path d="M164.2 28.6 L161.4 27.7"/><path d="M122.4 207.6 L120.8 210.2"/><path d="M36.7 128.6 L35.1 131.1"/><path d="M223.1 47.8 L223.6 50.8"/><path d="M224.2 161.5 L225.2 158.7"/><path d="M73.7 178.0 L71.0 179.5"/><path d="M290.3 41.0 L289.3 43.9"/><path d="M198.0 41.8 L195.6 43.6"/><path d="M82.8 90.1 L80.0 91.1"/><path d="M213.0 72.5 L212.6 69.5"/><path d="M114.7 122.9 L115.5 120.0"/><path d="M108.1 56.6 L105.3 55.7"/><path d="M138.7 0.4 L136.5 2.5"/><path d="M26.1 172.4 L28.9 173.4"/><path d="M231.2 183.7 L228.8 185.6"/><path d="M167.9 114.0 L166.6 116.7"/><path d="M173.6 200.0 L170.7 199.1"/><path d="M163.1 28.4 L163.0 31.4"/><path d="M-1.9 46.5 L-1.6 49.4"/><path d="M206.5 160.3 L203.7 159.2"/><path d="M96.4 19.4 L94.1 21.4"/><path d="M195.5 20.7 L197.0 18.1"/><path d="M275.1 205.2 L272.5 206.9"/><path d="M186.9 132.2 L188.7 129.7"/><path d="M58.2 160.2 L56.5 162.7"/><path d="M262.4 55.1 L260.0 53.3"/><path d="M217.7 168.4 L220.6 168.5"/><path d="M185.7 29.0 L182.8 29.5"/><path d="M270.6 184.9 L268.9 187.4"/><path d="M244.1 184.2 L241.2 183.4"/><path d="M290.0 96.4 L291.4 99.1"/><path d="M16.1 198.2 L16.6 201.1"/><path d="M198.0 119.1 L195.7 117.2"/><path d="M61.7 89.4 L62.7 92.2"/><path d="M176.7 160.4 L179.0 162.3"/><path d="M12.0 149.0 L9.5 150.6"/><path d="M237.2 218.4 L240.1 217.6"/><path d="M177.7 77.6 L174.7 77.5"/><path d="M249.1 169.5 L246.1 169.6"/><path d="M92.7 74.9 L89.7 75.0"/><path d="M86.7 84.7 L84.5 82.6"/><path d="M286.1 39.9 L289.0 40.5"/><path d="M82.5 105.7 L85.5 106.2"/><path d="M80.5 179.1 L80.1 182.1"/><path d="M12.4 25.3 L12.4 28.3"/><path d="M164.3 136.2 L166.7 138.1"/><path d="M287.1 82.4 L284.4 81.1"/><path d="M176.2 67.8 L177.7 70.4"/><path d="M71.1 181.1 L68.6 179.5"/><path d="M33.6 157.1 L36.6 157.6"/><path d="M238.9 107.5 L241.8 106.5"/><path d="M270.7 148.3 L268.4 146.3"/><path d="M167.8 88.9 L170.7 89.4"/><path d="M224.9 78.4 L223.8 75.6"/><path d="M170.8 10.0 L169.3 7.4"/><path d="M83.9 48.4 L83.3 45.4"/><path d="M105.2 209.6 L106.4 206.9"/><path d="M176.9 192.4 L174.0 191.4"/><path d="M211.8 50.9 L210.2 48.4"/><path d="M11.2 78.8 L8.7 80.4"/><path d="M101.0 14.5 L102.8 12.1"/><path d="M24.6 116.0 L21.8 115.0"/><path d="M68.4 84.3 L67.7 87.2"/><path d="M277.3 152.0 L276.8 149.0"/><path d="M22.6 151.8 L25.2 150.3"/><path d="M257.5 83.5 L254.5 83.8"/><path d="M-2.7 24.4 L-5.3 22.9"/><path d="M186.7 26.7 L184.7 24.5"/><path d="M36.7 64.3 L34.9 61.9"/><path d="M236.0 105.7 L233.4 107.3"/><path d="M98.5 8.6 L98.2 11.6"/><path d="M253.2 213.6 L253.0 216.6"/><path d="M14.9 148.0 L12.0 148.9"/><path d="M133.0 14.0 L135.6 12.5"/><path d="M126.9 8.4 L126.2 11.3"/><path d="M14.7 22.9 L12.0 21.5"/><path d="M253.3 120.3 L251.7 117.8"/><path d="M183.7 6.8 L182.8 3.9"/><path d="M73.0 6.5 L75.8 7.5"/><path d="M0.7 2.4 L-0.3 5.2"/><path d="M69.2 134.0 L66.6 135.6"/><path d="M221.4 54.0 L219.4 56.2"/><path d="M168.8 53.8 L170.6 56.2"/><path d="M67.8 18.5 L67.3 21.4"/><path d="M272.8 182.1 L271.3 184.7"/><path d="M168.8 68.7 L171.0 66.7"/><path d="M209.8 46.6 L206.9 46.0"/><path d="M149.7 132.1 L152.6 133.0"/><path d="M32.7 94.7 L30.4 96.7"/><path d="M130.8 36.0 L130.0 38.9"/><path d="M53.4 13.9 L56.4 14.4"/><path d="M138.6 133.6 L139.4 130.7"/><path d="M169.8 214.9 L172.0 216.9"/><path d="M124.3 161.0 L124.9 163.9"/><path d="M291.5 135.5 L293.7 133.5"/><path d="M178.8 171.8 L181.5 170.6"/><path d="M194.0 121.8 L191.5 120.2"/><path d="M138.8 33.4 L141.8 33.6"/><path d="M207.4 34.2 L210.4 34.5"/><path d="M286.1 200.0 L289.0 199.1"/><path d="M126.9 191.3 L124.7 189.4"/><path d="M173.9 68.6 L171.0 69.5"/><path d="M9.8 141.5 L12.8 141.3"/><path d="M121.2 131.1 L121.6 128.1"/><path d="M66.4 215.4 L69.3 216.3"/><path d="M198.9 53.5 L197.0 55.8"/><path d="M167.4 113.4 L170.3 114.3"/><path d="M289.2 -0.5 L286.4 -1.5"/><path d="M143.0 185.5 L140.0 185.1"/><path d="M141.7 213.6 L143.5 216.0"/><path d="M67.2 79.6 L70.2 79.2"/><path d="M141.9 176.9 L142.3 173.9"/><path d="M146.0 150.5 L145.6 147.5"/><path d="M94.9 219.8 L97.8 219.0"/><path d="M26.6 3.8 L24.0 2.3"/><path d="M128.5 29.1 L129.8 31.8"/><path d="M204.6 184.3 L203.9 187.2"/><path d="M146.6 37.5 L149.4 38.6"/><path d="M276.4 97.6 L276.1 100.6"/><path d="M269.6 150.5 L270.8 147.7"/><path d="M-2.0 104.2 L1.0 104.4"/><path d="M69.6 130.2 L72.3 128.9"/><path d="M27.2 106.5 L27.2 103.5"/><path d="M42.3 137.4 L40.1 135.4"/><path d="M282.3 78.6 L279.3 78.4"/><path d="M16.0 48.3 L15.5 51.3"/><path d="M175.2 114.0 L174.0 111.2"/><path d="M132.6 138.9 L135.4 140.0"/></g><g fill="#bababa"><ellipse cx="111.6" cy="49.8" rx="2.0" ry="1.1" transform="rotate(178 111.6 49.8)"/><ellipse cx="242.0" cy="214.7" rx="2.0" ry="1.1" transform="rotate(120 242.0 214.7)"/><ellipse cx="203.7" cy="149.9" rx="2.0" ry="1.1" transform="rotate(347 203.7 149.9)"/><ellipse cx="163.1" cy="80.3" rx="2.0" ry="1.1" transform="rotate(103 163.1 80.3)"/><ellipse cx="91.2" cy="35.8" rx="2.0" ry="1.1" transform="rotate(185 91.2 35.8)"/><ellipse cx="203.9" cy="21.7" rx="2.0" ry="1.1" transform="rotate(163 203.9 21.7)"/><ellipse cx="254.1" cy="9.3" rx="2.0" ry="1.1" transform="rotate(91 254.1 9.3)"/><ellipse cx="70.1" cy="157.9" rx="2.0" ry="1.1" transform="rotate(118 70.1 157.9)"/><ellipse cx="164.1" cy="89.2" rx="2.0" ry="1.1" transform="rotate(254 164.1 89.2)"/><ellipse cx="108.0" cy="147.6" rx="2.0" ry="1.1" transform="rotate(83 108.0 147.6)"/><ellipse cx="283.5" cy="24.8" rx="2.0" ry="1.1" transform="rotate(248 283.5 24.8)"/><ellipse cx="289.2" cy="5.7" rx="2.0" ry="1.1" transform="rotate(257 289.2 5.7)"/><ellipse cx="290.3" cy="24.1" rx="2.0" ry="1.1" transform="rotate(119 290.3 24.1)"/><ellipse cx="88.5" cy="174.7" rx="2.0" ry="1.1" transform="rotate(302 88.5 174.7)"/><ellipse cx="286.7" cy="82.2" rx="2.0" ry="1.1" transform="rotate(250 286.7 82.2)"/><ellipse cx="27.8" cy="207.0" rx="2.0" ry="1.1" transform="rotate(90 27.8 207.0)"/><ellipse cx="163.0" cy="27.3" rx="2.0" ry="1.1" transform="rotate(225 163.0 27.3)"/><ellipse cx="74.2" cy="8.0" rx="2.0" ry="1.1" transform="rotate(23 74.2 8.0)"/><ellipse cx="139.9" cy="221.2" rx="2.0" ry="1.1" transform="rotate(73 139.9 221.2)"/><ellipse cx="112.3" cy="8.5" rx="2.0" ry="1.1" transform="rotate(198 112.3 8.5)"/><ellipse cx="251.4" cy="219.8" rx="2.0" ry="1.1" transform="rotate(160 251.4 219.8)"/><ellipse cx="47.3" cy="23.3" rx="2.0" ry="1.1" transform="rotate(27 47.3 23.3)"/><ellipse cx="0.4" cy="42.9" rx="2.0" ry="1.1" transform="rotate(345 0.4 42.9)"/><ellipse cx="214.7" cy="84.4" rx="2.0" ry="1.1" transform="rotate(289 214.7 84.4)"/><ellipse cx="277.7" cy="85.1" rx="2.0" ry="1.1" transform="rotate(254 277.7 85.1)"/><ellipse cx="62.6" cy="84.2" rx="2.0" ry="1.1" transform="rotate(133 62.6 84.2)"/><ellipse cx="102.2" cy="58.0" rx="2.0" ry="1.1" transform="rotate(326 102.2 58.0)"/><ellipse cx="57.5" cy="162.5" rx="2.0" ry="1.1" transform="rotate(197 57.5 162.5)"/><ellipse cx="101.3" cy="92.8" rx="2.0" ry="1.1" transform="rotate(3 101.3 92.8)"/><ellipse cx="279.6" cy="41.1" rx="2.0" ry="1.1" transform="rotate(317 279.6 41.1)"/><ellipse cx="123.9" cy="213.5" rx="2.0" ry="1.1" transform="rotate(79 123.9 213.5)"/><ellipse cx="196.4" cy="210.0" rx="2.0" ry="1.1" transform="rotate(116 196.4 210.0)"/><ellipse cx="183.6" cy="79.9" rx="2.0" ry="1.1" transform="rotate(232 183.6 79.9)"/><ellipse cx="181.4" cy="108.9" rx="2.0" ry="1.1" transform="rotate(204 181.4 108.9)"/><ellipse cx="192.5" cy="91.1" rx="2.0" ry="1.1" transform="rotate(138 192.5 91.1)"/><ellipse cx="4.3" cy="137.3" rx="2.0" ry="1.1" transform="rotate(161 4.3 137.3)"/><ellipse cx="135.0" cy="217.7" rx="2.0" ry="1.1" transform="rotate(266 135.0 217.7)"/><ellipse cx="254.8" cy="24.4" rx="2.0" ry="1.1" transform="rotate(356 254.8 24.4)"/><ellipse cx="274.7" cy="181.0" rx="2.0" ry="1.1" transform="rotate(287 274.7 181.0)"/><ellipse cx="207.7" cy="51.1" rx="2.0" ry="1.1" transform="rotate(291 207.7 51.1)"/><ellipse cx="80.2" cy="141.2" rx="2.0" ry="1.1" transform="rotate(26 80.2 141.2)"/><ellipse cx="233.6" cy="186.8" rx="2.0" ry="1.1" transform="rotate(277 233.6 186.8)"/><ellipse cx="105.8" cy="18.8" rx="2.0" ry="1.1" transform="rotate(13 105.8 18.8)"/><ellipse cx="50.7" cy="82.2" rx="2.0" ry="1.1" transform="rotate(306 50.7 82.2)"/><ellipse cx="58.3" cy="136.4" rx="2.0" ry="1.1" transform="rotate(316 58.3 136.4)"/><ellipse cx="0.0" cy="73.5" rx="2.0" ry="1.1" transform="rotate(114 0.0 73.5)"/><ellipse cx="49.2" cy="23.5" rx="2.0" ry="1.1" transform="rotate(250 49.2 23.5)"/><ellipse cx="177.5" cy="77.5" rx="2.0" ry="1.1" transform="rotate(71 177.5 77.5)"/><ellipse cx="88.9" cy="88.7" rx="2.0" ry="1.1" transform="rotate(53 88.9 88.7)"/><ellipse cx="132.8" cy="109.3" rx="2.0" ry="1.1" transform="rotate(339 132.8 109.3)"/><ellipse cx="80.3" cy="193.3" rx="2.0" ry="1.1" transform="rotate(103 80.3 193.3)"/><ellipse cx="110.0" cy="162.2" rx="2.0" ry="1.1" transform="rotate(216 110.0 162.2)"/><ellipse cx="126.5" cy="211.6" rx="2.0" ry="1.1" transform="rotate(105 126.5 211.6)"/><ellipse cx="35.2" cy="198.4" rx="2.0" ry="1.1" transform="rotate(91 35.2 198.4)"/><ellipse cx="172.4" cy="119.4" rx="2.0" ry="1.1" transform="rotate(36 172.4 119.4)"/><ellipse cx="209.9" cy="147.4" rx="2.0" ry="1.1" transform="rotate(124 209.9 147.4)"/><ellipse cx="134.0" cy="77.5" rx="2.0" ry="1.1" transform="rotate(167 134.0 77.5)"/><ellipse cx="284.8" cy="219.7" rx="2.0" ry="1.1" transform="rotate(142 284.8 219.7)"/><ellipse cx="14.7" cy="100.6" rx="2.0" ry="1.1" transform="rotate(144 14.7 100.6)"/><ellipse cx="104.8" cy="28.9" rx="2.0" ry="1.1" transform="rotate(142 104.8 28.9)"/><ellipse cx="180.9" cy="164.0" rx="2.0" ry="1.1" transform="rotate(91 180.9 164.0)"/><ellipse cx="135.9" cy="-1.5" rx="2.0" ry="1.1" transform="rotate(309 135.9 -1.5)"/><ellipse cx="156.0" cy="116.7" rx="2.0" ry="1.1" transform="rotate(40 156.0 116.7)"/><ellipse cx="165.6" cy="25.8" rx="2.0" ry="1.1" transform="rotate(32 165.6 25.8)"/><ellipse cx="119.1" cy="9.5" rx="2.0" ry="1.1" transform="rotate(78 119.1 9.5)"/><ellipse cx="27.7" cy="188.0" rx="2.0" ry="1.1" transform="rotate(56 27.7 188.0)"/><ellipse cx="251.3" cy="213.1" rx="2.0" ry="1.1" transform="rotate(149 251.3 213.1)"/><ellipse cx="206.2" cy="30.9" rx="2.0" ry="1.1" transform="rotate(191 206.2 30.9)"/><ellipse cx="188.1" cy="186.8" rx="2.0" ry="1.1" transform="rotate(17 188.1 186.8)"/><ellipse cx="267.4" cy="69.9" rx="2.0" ry="1.1" transform="rotate(176 267.4 69.9)"/><ellipse cx="143.7" cy="199.8" rx="2.0" ry="1.1" transform="rotate(142 143.7 199.8)"/><ellipse cx="122.6" cy="104.1" rx="2.0" ry="1.1" transform="rotate(129 122.6 104.1)"/><ellipse cx="13.1" cy="114.2" rx="2.0" ry="1.1" transform="rotate(197 13.1 114.2)"/><ellipse cx="89.5" cy="106.0" rx="2.0" ry="1.1" transform="rotate(83 89.5 106.0)"/><ellipse cx="281.7" cy="-3.1" rx="2.0" ry="1.1" transform="rotate(214 281.7 -3.1)"/><ellipse cx="84.3" cy="132.1" rx="2.0" ry="1.1" transform="rotate(212 84.3 132.1)"/><ellipse cx="11.7" cy="18.1" rx="2.0" ry="1.1" transform="rotate(91 11.7 18.1)"/><ellipse cx="114.8" cy="59.0" rx="2.0" ry="1.1" transform="rotate(245 114.8 59.0)"/><ellipse cx="90.5" cy="178.8" rx="2.0" ry="1.1" transform="rotate(284 90.5 178.8)"/><ellipse cx="182.6" cy="119.4" rx="2.0" ry="1.1" transform="rotate(334 182.6 119.4)"/><ellipse cx="168.0" cy="-4.0" rx="2.0" ry="1.1" transform="rotate(265 168.0 -4.0)"/><ellipse cx="17.0" cy="172.0" rx="2.0" ry="1.1" transform="rotate(159 17.0 172.0)"/><ellipse cx="30.9" cy="66.6" rx="2.0" ry="1.1" transform="rotate(264 30.9 66.6)"/><ellipse cx="159.6" cy="22.3" rx="2.0" ry="1.1" transform="rotate(43 159.6 22.3)"/><ellipse cx="57.4" cy="88.9" rx="2.0" ry="1.1" transform="rotate(193 57.4 88.9)"/><ellipse cx="4.4" cy="93.9" rx="2.0" ry="1.1" transform="rotate(136 4.4 93.9)"/><ellipse cx="112.2" cy="171.7" rx="2.0" ry="1.1" transform="rotate(38 112.2 171.7)"/><ellipse cx="98.0" cy="33.9" rx="2.0" ry="1.1" transform="rotate(126 98.0 33.9)"/><ellipse cx="244.9" cy="75.8" rx="2.0" ry="1.1" transform="rotate(210 244.9 75.8)"/><ellipse cx="65.2" cy="53.4" rx="2.0" ry="1.1" transform="rotate(263 65.2 53.4)"/><ellipse cx="106.9" cy="157.5" rx="2.0" ry="1.1" transform="rotate(156 106.9 157.5)"/><ellipse cx="131.4" cy="106.6" rx="2.0" ry="1.1" transform="rotate(83 131.4 106.6)"/><ellipse cx="5.2" cy="152.3" rx="2.0" ry="1.1" transform="rotate(205 5.2 152.3)"/><ellipse cx="224.0" cy="177.7" rx="2.0" ry="1.1" transform="rotate(35 224.0 177.7)"/><ellipse cx="177.1" cy="21.8" rx="2.0" ry="1.1" transform="rotate(275 177.1 21.8)"/><ellipse cx="103.8" cy="208.3" rx="2.0" ry="1.1" transform="rotate(259 103.8 208.3)"/><ellipse cx="68.7" cy="0.3" rx="2.0" ry="1.1" transform="rotate(193 68.7 0.3)"/><ellipse cx="139.6" cy="58.5" rx="2.0" ry="1.1" transform="rotate(103 139.6 58.5)"/><ellipse cx="250.1" cy="187.1" rx="2.0" ry="1.1" transform="rotate(219 250.1 187.1)"/><ellipse cx="268.8" cy="171.4" rx="2.0" ry="1.1" transform="rotate(94 268.8 171.4)"/><ellipse cx="64.4" cy="98.7" rx="2.0" ry="1.1" transform="rotate(133 64.4 98.7)"/><ellipse cx="100.7" cy="47.7" rx="2.0" ry="1.1" transform="rotate(342 100.7 47.7)"/><ellipse cx="262.4" cy="18.4" rx="2.0" ry="1.1" transform="rotate(204 262.4 18.4)"/><ellipse cx="15.4" cy="146.2" rx="2.0" ry="1.1" transform="rotate(24 15.4 146.2)"/><ellipse cx="248.6" cy="172.1" rx="2.0" ry="1.1" transform="rotate(188 248.6 172.1)"/><ellipse cx="101.6" cy="109.3" rx="2.0" ry="1.1" transform="rotate(71 101.6 109.3)"/><ellipse cx="141.8" cy="121.0" rx="2.0" ry="1.1" transform="rotate(350 141.8 121.0)"/><ellipse cx="205.7" cy="206.7" rx="2.0" ry="1.1" transform="rotate(351 205.7 206.7)"/><ellipse cx="0.9" cy="105.3" rx="2.0" ry="1.1" transform="rotate(213 0.9 105.3)"/><ellipse cx="22.9" cy="112.3" rx="2.0" ry="1.1" transform="rotate(345 22.9 112.3)"/><ellipse cx="3.8" cy="2.0" rx="2.0" ry="1.1" transform="rotate(299 3.8 2.0)"/><ellipse cx="236.9" cy="-3.3" rx="2.0" ry="1.1" transform="rotate(24 236.9 -3.3)"/><ellipse cx="96.9" cy="74.0" rx="2.0" ry="1.1" transform="rotate(5 96.9 74.0)"/><ellipse cx="94.3" cy="147.9" rx="2.0" ry="1.1" transform="rotate(164 94.3 147.9)"/><ellipse cx="71.5" cy="102.3" rx="2.0" ry="1.1" transform="rotate(282 71.5 102.3)"/><ellipse cx="152.1" cy="52.3" rx="2.0" ry="1.1" transform="rotate(316 152.1 52.3)"/><ellipse cx="211.9" cy="146.2" rx="2.0" ry="1.1" transform="rotate(285 211.9 146.2)"/><ellipse cx="62.0" cy="89.0" rx="2.0" ry="1.1" transform="rotate(356 62.0 89.0)"/><ellipse cx="111.2" cy="25.2" rx="2.0" ry="1.1" transform="rotate(284 111.2 25.2)"/><ellipse cx="81.1" cy="128.0" rx="2.0" ry="1.1" transform="rotate(267 81.1 128.0)"/><ellipse cx="110.0" cy="10.0" rx="2.0" ry="1.1" transform="rotate(329 110.0 10.0)"/><ellipse cx="273.6" cy="72.2" rx="2.0" ry="1.1" transform="rotate(335 273.6 72.2)"/><ellipse cx="37.2" cy="147.5" rx="2.0" ry="1.1" transform="rotate(318 37.2 147.5)"/><ellipse cx="32.9" cy="56.8" rx="2.0" ry="1.1" transform="rotate(338 32.9 56.8)"/><ellipse cx="88.0" cy="38.0" rx="2.0" ry="1.1" transform="rotate(44 88.0 38.0)"/><ellipse cx="153.5" cy="209.4" rx="2.0" ry="1.1" transform="rotate(29 153.5 209.4)"/><ellipse cx="271.0" cy="110.3" rx="2.0" ry="1.1" transform="rotate(58 271.0 110.3)"/><ellipse cx="283.6" cy="98.5" rx="2.0" ry="1.1" transform="rotate(217 283.6 98.5)"/><ellipse cx="286.3" cy="0.2" rx="2.0" ry="1.1" transform="rotate(275 286.3 0.2)"/><ellipse cx="215.8" cy="43.7" rx="2.0" ry="1.1" transform="rotate(7 215.8 43.7)"/><ellipse cx="135.3" cy="37.1" rx="2.0" ry="1.1" transform="rotate(5 135.3 37.1)"/><ellipse cx="104.7" cy="101.3" rx="2.0" ry="1.1" transform="rotate(225 104.7 101.3)"/><ellipse cx="118.5" cy="117.6" rx="2.0" ry="1.1" transform="rotate(166 118.5 117.6)"/><ellipse cx="249.8" cy="195.2" rx="2.0" ry="1.1" transform="rotate(59 249.8 195.2)"/><ellipse cx="209.6" cy="48.2" rx="2.0" ry="1.1" transform="rotate(210 209.6 48.2)"/><ellipse cx="198.8" cy="73.5" rx="2.0" ry="1.1" transform="rotate(201 198.8 73.5)"/><ellipse cx="-3.7" cy="108.8" rx="2.0" ry="1.1" transform="rotate(97 -3.7 108.8)"/><ellipse cx="142.8" cy="103.2" rx="2.0" ry="1.1" transform="rotate(231 142.8 103.2)"/><ellipse cx="234.0" cy="47.5" rx="2.0" ry="1.1" transform="rotate(298 234.0 47.5)"/><ellipse cx="123.7" cy="120.3" rx="2.0" ry="1.1" transform="rotate(341 123.7 120.3)"/><ellipse cx="145.7" cy="74.1" rx="2.0" ry="1.1" transform="rotate(71 145.7 74.1)"/><ellipse cx="268.6" cy="148.6" rx="2.0" ry="1.1" transform="rotate(287 268.6 148.6)"/><ellipse cx="237.9" cy="65.4" rx="2.0" ry="1.1" transform="rotate(88 237.9 65.4)"/><ellipse cx="232.1" cy="132.4" rx="2.0" ry="1.1" transform="rotate(328 232.1 132.4)"/><ellipse cx="29.4" cy="215.7" rx="2.0" ry="1.1" transform="rotate(314 29.4 215.7)"/><ellipse cx="289.3" cy="136.8" rx="2.0" ry="1.1" transform="rotate(45 289.3 136.8)"/><ellipse cx="227.9" cy="191.7" rx="2.0" ry="1.1" transform="rotate(205 227.9 191.7)"/><ellipse cx="101.6" cy="2.2" rx="2.0" ry="1.1" transform="rotate(58 101.6 2.2)"/><ellipse cx="201.6" cy="113.0" rx="2.0" ry="1.1" transform="rotate(114 201.6 113.0)"/><ellipse cx="276.8" cy="69.7" rx="2.0" ry="1.1" transform="rotate(334 276.8 69.7)"/><ellipse cx="281.0" cy="171.0" rx="2.0" ry="1.1" transform="rotate(120 281.0 171.0)"/><ellipse cx="250.7" cy="116.5" rx="2.0" ry="1.1" transform="rotate(170 250.7 116.5)"/><ellipse cx="68.8" cy="70.1" rx="2.0" ry="1.1" transform="rotate(25 68.8 70.1)"/><ellipse cx="184.8" cy="89.8" rx="2.0" ry="1.1" transform="rotate(146 184.8 89.8)"/><ellipse cx="124.6" cy="148.7" rx="2.0" ry="1.1" transform="rotate(274 124.6 148.7)"/><ellipse cx="71.8" cy="117.5" rx="2.0" ry="1.1" transform="rotate(359 71.8 117.5)"/><ellipse cx="40.4" cy="121.1" rx="2.0" ry="1.1" transform="rotate(98 40.4 121.1)"/><ellipse cx="187.0" cy="154.9" rx="2.0" ry="1.1" transform="rotate(164 187.0 154.9)"/><ellipse cx="260.9" cy="9.2" rx="2.0" ry="1.1" transform="rotate(26 260.9 9.2)"/><ellipse cx="122.3" cy="123.4" rx="2.0" ry="1.1" transform="rotate(268 122.3 123.4)"/><ellipse cx="10.7" cy="156.5" rx="2.0" ry="1.1" transform="rotate(46 10.7 156.5)"/><ellipse cx="113.1" cy="102.0" rx="2.0" ry="1.1" transform="rotate(38 113.1 102.0)"/><ellipse cx="90.6" cy="217.8" rx="2.0" ry="1.1" transform="rotate(43 90.6 217.8)"/><ellipse cx="118.8" cy="84.7" rx="2.0" ry="1.1" transform="rotate(319 118.8 84.7)"/><ellipse cx="103.3" cy="94.5" rx="2.0" ry="1.1" transform="rotate(163 103.3 94.5)"/><ellipse cx="224.1" cy="98.4" rx="2.0" ry="1.1" transform="rotate(170 224.1 98.4)"/><ellipse cx="284.7" cy="173.2" rx="2.0" ry="1.1" transform="rotate(145 284.7 173.2)"/><ellipse cx="277.3" cy="142.2" rx="2.0" ry="1.1" transform="rotate(241 277.3 142.2)"/><ellipse cx="155.3" cy="217.2" rx="2.0" ry="1.1" transform="rotate(123 155.3 217.2)"/><ellipse cx="73.2" cy="135.1" rx="2.0" ry="1.1" transform="rotate(80 73.2 135.1)"/><ellipse cx="14.3" cy="125.8" rx="2.0" ry="1.1" transform="rotate(296 14.3 125.8)"/><ellipse cx="220.9" cy="163.1" rx="2.0" ry="1.1" transform="rotate(208 220.9 163.1)"/><ellipse cx="289.2" cy="25.4" rx="2.0" ry="1.1" transform="rotate(281 289.2 25.4)"/><ellipse cx="163.0" cy="114.7" rx="2.0" ry="1.1" transform="rotate(178 163.0 114.7)"/><ellipse cx="80.7" cy="177.7" rx="2.0" ry="1.1" transform="rotate(151 80.7 177.7)"/><ellipse cx="291.4" cy="123.5" rx="2.0" ry="1.1" transform="rotate(343 291.4 123.5)"/><ellipse cx="202.0" cy="149.9" rx="2.0" ry="1.1" transform="rotate(298 202.0 149.9)"/><ellipse cx="2.5" cy="79.0" rx="2.0" ry="1.1" transform="rotate(237 2.5 79.0)"/><ellipse cx="71.1" cy="36.8" rx="2.0" ry="1.1" transform="rotate(42 71.1 36.8)"/><ellipse cx="142.4" cy="152.4" rx="2.0" ry="1.1" transform="rotate(10 142.4 152.4)"/><ellipse cx="204.5" cy="70.8" rx="2.0" ry="1.1" transform="rotate(316 204.5 70.8)"/><ellipse cx="236.1" cy="123.2" rx="2.0" ry="1.1" transform="rotate(219 236.1 123.2)"/><ellipse cx="39.9" cy="213.7" rx="2.0" ry="1.1" transform="rotate(123 39.9 213.7)"/><ellipse cx="196.1" cy="35.5" rx="2.0" ry="1.1" transform="rotate(128 196.1 35.5)"/><ellipse cx="63.4" cy="79.1" rx="2.0" ry="1.1" transform="rotate(82 63.4 79.1)"/><ellipse cx="244.5" cy="117.4" rx="2.0" ry="1.1" transform="rotate(210 244.5 117.4)"/><ellipse cx="175.3" cy="190.2" rx="2.0" ry="1.1" transform="rotate(23 175.3 190.2)"/><ellipse cx="76.5" cy="144.6" rx="2.0" ry="1.1" transform="rotate(250 76.5 144.6)"/><ellipse cx="101.6" cy="78.2" rx="2.0" ry="1.1" transform="rotate(90 101.6 78.2)"/><ellipse cx="172.7" cy="57.2" rx="2.0" ry="1.1" transform="rotate(41 172.7 57.2)"/><ellipse cx="258.4" cy="164.5" rx="2.0" ry="1.1" transform="rotate(224 258.4 164.5)"/><ellipse cx="110.5" cy="109.5" rx="2.0" ry="1.1" transform="rotate(169 110.5 109.5)"/><ellipse cx="62.1" cy="2.2" rx="2.0" ry="1.1" transform="rotate(108 62.1 2.2)"/><ellipse cx="53.4" cy="190.0" rx="2.0" ry="1.1" transform="rotate(301 53.4 190.0)"/><ellipse cx="114.9" cy="119.3" rx="2.0" ry="1.1" transform="rotate(317 114.9 119.3)"/><ellipse cx="68.0" cy="213.7" rx="2.0" ry="1.1" transform="rotate(196 68.0 213.7)"/><ellipse cx="291.2" cy="12.9" rx="2.0" ry="1.1" transform="rotate(358 291.2 12.9)"/><ellipse cx="30.0" cy="121.8" rx="2.0" ry="1.1" transform="rotate(338 30.0 121.8)"/><ellipse cx="48.5" cy="99.4" rx="2.0" ry="1.1" transform="rotate(324 48.5 99.4)"/><ellipse cx="95.1" cy="124.8" rx="2.0" ry="1.1" transform="rotate(227 95.1 124.8)"/><ellipse cx="16.9" cy="168.2" rx="2.0" ry="1.1" transform="rotate(120 16.9 168.2)"/><ellipse cx="73.6" cy="177.6" rx="2.0" ry="1.1" transform="rotate(261 73.6 177.6)"/><ellipse cx="39.0" cy="41.6" rx="2.0" ry="1.1" transform="rotate(11 39.0 41.6)"/><ellipse cx="73.5" cy="183.1" rx="2.0" ry="1.1" transform="rotate(66 73.5 183.1)"/><ellipse cx="163.7" cy="80.8" rx="2.0" ry="1.1" transform="rotate(297 163.7 80.8)"/><ellipse cx="283.2" cy="51.2" rx="2.0" ry="1.1" transform="rotate(100 283.2 51.2)"/><ellipse cx="67.1" cy="60.0" rx="2.0" ry="1.1" transform="rotate(304 67.1 60.0)"/><ellipse cx="108.4" cy="157.2" rx="2.0" ry="1.1" transform="rotate(178 108.4 157.2)"/><ellipse cx="11.8" cy="2.1" rx="2.0" ry="1.1" transform="rotate(354 11.8 2.1)"/><ellipse cx="266.2" cy="36.5" rx="2.0" ry="1.1" transform="rotate(180 266.2 36.5)"/><ellipse cx="53.4" cy="159.4" rx="2.0" ry="1.1" transform="rotate(28 53.4 159.4)"/><ellipse cx="246.5" cy="133.9" rx="2.0" ry="1.1" transform="rotate(268 246.5 133.9)"/><ellipse cx="41.1" cy="32.8" rx="2.0" ry="1.1" transform="rotate(14 41.1 32.8)"/><ellipse cx="8.8" cy="185.3" rx="2.0" ry="1.1" transform="rotate(217 8.8 185.3)"/><ellipse cx="53.1" cy="22.4" rx="2.0" ry="1.1" transform="rotate(72 53.1 22.4)"/><ellipse cx="106.3" cy="29.1" rx="2.0" ry="1.1" transform="rotate(205 106.3 29.1)"/><ellipse cx="177.9" cy="40.5" rx="2.0" ry="1.1" transform="rotate(121 177.9 40.5)"/><ellipse cx="157.7" cy="208.1" rx="2.0" ry="1.1" transform="rotate(48 157.7 208.1)"/><ellipse cx="265.3" cy="6.4" rx="2.0" ry="1.1" transform="rotate(102 265.3 6.4)"/><ellipse cx="269.4" cy="38.5" rx="2.0" ry="1.1" transform="rotate(142 269.4 38.5)"/><ellipse cx="214.9" cy="191.5" rx="2.0" ry="1.1" transform="rotate(130 214.9 191.5)"/><ellipse cx="260.8" cy="219.3" rx="2.0" ry="1.1" transform="rotate(302 260.8 219.3)"/><ellipse cx="163.7" cy="24.3" rx="2.0" ry="1.1" transform="rotate(281 163.7 24.3)"/><ellipse cx="174.9" cy="39.4" rx="2.0" ry="1.1" transform="rotate(161 174.9 39.4)"/><ellipse cx="202.7" cy="37.6" rx="2.0" ry="1.1" transform="rotate(306 202.7 37.6)"/><ellipse cx="-4.3" cy="-2.4" rx="2.0" ry="1.1" transform="rotate(118 -4.3 -2.4)"/><ellipse cx="207.2" cy="48.4" rx="2.0" ry="1.1" transform="rotate(173 207.2 48.4)"/><ellipse cx="89.8" cy="86.5" rx="2.0" ry="1.1" transform="rotate(113 89.8 86.5)"/><ellipse cx="228.7" cy="214.4" rx="2.0" ry="1.1" transform="rotate(73 228.7 214.4)"/><ellipse cx="49.2" cy="159.5" rx="2.0" ry="1.1" transform="rotate(206 49.2 159.5)"/><ellipse cx="7.2" cy="98.0" rx="2.0" ry="1.1" transform="rotate(297 7.2 98.0)"/><ellipse cx="30.8" cy="140.3" rx="2.0" ry="1.1" transform="rotate(9 30.8 140.3)"/><ellipse cx="152.7" cy="24.0" rx="2.0" ry="1.1" transform="rotate(217 152.7 24.0)"/><ellipse cx="211.0" cy="194.1" rx="2.0" ry="1.1" transform="rotate(199 211.0 194.1)"/><ellipse cx="80.3" cy="169.0" rx="2.0" ry="1.1" transform="rotate(228 80.3 169.0)"/><ellipse cx="173.2" cy="110.3" rx="2.0" ry="1.1" transform="rotate(184 173.2 110.3)"/><ellipse cx="289.7" cy="175.3" rx="2.0" ry="1.1" transform="rotate(104 289.7 175.3)"/><ellipse cx="268.2" cy="105.5" rx="2.0" ry="1.1" transform="rotate(143 268.2 105.5)"/><ellipse cx="114.0" cy="12.7" rx="2.0" ry="1.1" transform="rotate(244 114.0 12.7)"/><ellipse cx="222.3" cy="97.1" rx="2.0" ry="1.1" transform="rotate(106 222.3 97.1)"/><ellipse cx="259.8" cy="105.4" rx="2.0" ry="1.1" transform="rotate(48 259.8 105.4)"/><ellipse cx="195.1" cy="44.5" rx="2.0" ry="1.1" transform="rotate(161 195.1 44.5)"/><ellipse cx="39.7" cy="172.1" rx="2.0" ry="1.1" transform="rotate(39 39.7 172.1)"/><ellipse cx="231.9" cy="42.7" rx="2.0" ry="1.1" transform="rotate(16 231.9 42.7)"/><ellipse cx="59.0" cy="141.1" rx="2.0" ry="1.1" transform="rotate(26 59.0 141.1)"/><ellipse cx="211.2" cy="197.7" rx="2.0" ry="1.1" transform="rotate(286 211.2 197.7)"/><ellipse cx="278.0" cy="191.6" rx="2.0" ry="1.1" transform="rotate(90 278.0 191.6)"/><ellipse cx="220.2" cy="72.2" rx="2.0" ry="1.1" transform="rotate(151 220.2 72.2)"/><ellipse cx="25.0" cy="32.9" rx="2.0" ry="1.1" transform="rotate(297 25.0 32.9)"/><ellipse cx="47.2" cy="214.1" rx="2.0" ry="1.1" transform="rotate(218 47.2 214.1)"/><ellipse cx="225.4" cy="131.7" rx="2.0" ry="1.1" transform="rotate(316 225.4 131.7)"/><ellipse cx="117.1" cy="77.2" rx="2.0" ry="1.1" transform="rotate(233 117.1 77.2)"/><ellipse cx="195.7" cy="186.3" rx="2.0" ry="1.1" transform="rotate(139 195.7 186.3)"/><ellipse cx="232.6" cy="204.2" rx="2.0" ry="1.1" transform="rotate(109 232.6 204.2)"/><ellipse cx="260.7" cy="16.2" rx="2.0" ry="1.1" transform="rotate(92 260.7 16.2)"/><ellipse cx="136.2" cy="42.5" rx="2.0" ry="1.1" transform="rotate(105 136.2 42.5)"/><ellipse cx="185.0" cy="177.4" rx="2.0" ry="1.1" transform="rotate(117 185.0 177.4)"/><ellipse cx="173.7" cy="-0.2" rx="2.0" ry="1.1" transform="rotate(163 173.7 -0.2)"/><ellipse cx="100.1" cy="215.4" rx="2.0" ry="1.1" transform="rotate(130 100.1 215.4)"/><ellipse cx="234.5" cy="15.8" rx="2.0" ry="1.1" transform="rotate(201 234.5 15.8)"/><ellipse cx="291.4" cy="125.0" rx="2.0" ry="1.1" transform="rotate(323 291.4 125.0)"/><ellipse cx="227.5" cy="147.4" rx="2.0" ry="1.1" transform="rotate(57 227.5 147.4)"/><ellipse cx="200.8" cy="122.7" rx="2.0" ry="1.1" transform="rotate(284 200.8 122.7)"/><ellipse cx="43.1" cy="212.6" rx="2.0" ry="1.1" transform="rotate(111 43.1 212.6)"/><ellipse cx="227.8" cy="69.4" rx="2.0" ry="1.1" transform="rotate(304 227.8 69.4)"/><ellipse cx="258.2" cy="12.9" rx="2.0" ry="1.1" transform="rotate(96 258.2 12.9)"/><ellipse cx="149.2" cy="42.0" rx="2.0" ry="1.1" transform="rotate(166 149.2 42.0)"/><ellipse cx="53.5" cy="115.1" rx="2.0" ry="1.1" transform="rotate(209 53.5 115.1)"/><ellipse cx="44.4" cy="181.3" rx="2.0" ry="1.1" transform="rotate(352 44.4 181.3)"/><ellipse cx="58.6" cy="24.2" rx="2.0" ry="1.1" transform="rotate(59 58.6 24.2)"/><ellipse cx="33.9" cy="76.5" rx="2.0" ry="1.1" transform="rotate(87 33.9 76.5)"/><ellipse cx="130.7" cy="102.0" rx="2.0" ry="1.1" transform="rotate(133 130.7 102.0)"/><ellipse cx="165.5" cy="28.9" rx="2.0" ry="1.1" transform="rotate(16 165.5 28.9)"/><ellipse cx="123.0" cy="206.5" rx="2.0" ry="1.1" transform="rotate(302 123.0 206.5)"/><ellipse cx="37.4" cy="127.5" rx="2.0" ry="1.1" transform="rotate(302 37.4 127.5)"/><ellipse cx="222.9" cy="46.6" rx="2.0" ry="1.1" transform="rotate(261 222.9 46.6)"/><ellipse cx="223.8" cy="162.7" rx="2.0" ry="1.1" transform="rotate(109 223.8 162.7)"/><ellipse cx="74.8" cy="177.4" rx="2.0" ry="1.1" transform="rotate(331 74.8 177.4)"/><ellipse cx="290.7" cy="39.8" rx="2.0" ry="1.1" transform="rotate(290 290.7 39.8)"/><ellipse cx="199.1" cy="41.0" rx="2.0" ry="1.1" transform="rotate(323 199.1 41.0)"/><ellipse cx="84.0" cy="89.6" rx="2.0" ry="1.1" transform="rotate(339 84.0 89.6)"/><ellipse cx="213.2" cy="73.8" rx="2.0" ry="1.1" transform="rotate(82 213.2 73.8)"/><ellipse cx="114.4" cy="124.2" rx="2.0" ry="1.1" transform="rotate(105 114.4 124.2)"/><ellipse cx="109.3" cy="57.1" rx="2.0" ry="1.1" transform="rotate(19 109.3 57.1)"/><ellipse cx="139.6" cy="-0.5" rx="2.0" ry="1.1" transform="rotate(316 139.6 -0.5)"/><ellipse cx="24.9" cy="171.9" rx="2.0" ry="1.1" transform="rotate(200 24.9 171.9)"/><ellipse cx="232.2" cy="182.9" rx="2.0" ry="1.1" transform="rotate(322 232.2 182.9)"/><ellipse cx="168.4" cy="112.8" rx="2.0" ry="1.1" transform="rotate(295 168.4 112.8)"/><ellipse cx="174.8" cy="200.4" rx="2.0" ry="1.1" transform="rotate(18 174.8 200.4)"/><ellipse cx="163.1" cy="27.1" rx="2.0" ry="1.1" transform="rotate(271 163.1 27.1)"/><ellipse cx="-2.0" cy="45.2" rx="2.0" ry="1.1" transform="rotate(264 -2.0 45.2)"/><ellipse cx="207.7" cy="160.8" rx="2.0" ry="1.1" transform="rotate(22 207.7 160.8)"/><ellipse cx="97.3" cy="18.6" rx="2.0" ry="1.1" transform="rotate(319 97.3 18.6)"/><ellipse cx="194.9" cy="21.8" rx="2.0" ry="1.1" transform="rotate(120 194.9 21.8)"/><ellipse cx="276.1" cy="204.5" rx="2.0" ry="1.1" transform="rotate(327 276.1 204.5)"/><ellipse cx="186.2" cy="133.2" rx="2.0" ry="1.1" transform="rotate(126 186.2 133.2)"/><ellipse cx="58.9" cy="159.1" rx="2.0" ry="1.1" transform="rotate(303 58.9 159.1)"/><ellipse cx="263.5" cy="55.9" rx="2.0" ry="1.1" transform="rotate(37 263.5 55.9)"/><ellipse cx="216.4" cy="168.3" rx="2.0" ry="1.1" transform="rotate(183 216.4 168.3)"/><ellipse cx="187.0" cy="28.7" rx="2.0" ry="1.1" transform="rotate(350 187.0 28.7)"/><ellipse cx="271.4" cy="183.9" rx="2.0" ry="1.1" transform="rotate(305 271.4 183.9)"/><ellipse cx="245.3" cy="184.5" rx="2.0" ry="1.1" transform="rotate(16 245.3 184.5)"/><ellipse cx="289.5" cy="95.2" rx="2.0" ry="1.1" transform="rotate(243 289.5 95.2)"/><ellipse cx="15.9" cy="196.9" rx="2.0" ry="1.1" transform="rotate(260 15.9 196.9)"/><ellipse cx="199.0" cy="119.9" rx="2.0" ry="1.1" transform="rotate(39 199.0 119.9)"/><ellipse cx="61.3" cy="88.1" rx="2.0" ry="1.1" transform="rotate(250 61.3 88.1)"/><ellipse cx="175.7" cy="159.5" rx="2.0" ry="1.1" transform="rotate(221 175.7 159.5)"/><ellipse cx="13.1" cy="148.3" rx="2.0" ry="1.1" transform="rotate(328 13.1 148.3)"/><ellipse cx="235.9" cy="218.7" rx="2.0" ry="1.1" transform="rotate(165 235.9 218.7)"/><ellipse cx="179.0" cy="77.6" rx="2.0" ry="1.1" transform="rotate(2 179.0 77.6)"/><ellipse cx="250.4" cy="169.4" rx="2.0" ry="1.1" transform="rotate(357 250.4 169.4)"/><ellipse cx="94.0" cy="74.8" rx="2.0" ry="1.1" transform="rotate(357 94.0 74.8)"/><ellipse cx="87.6" cy="85.6" rx="2.0" ry="1.1" transform="rotate(45 87.6 85.6)"/><ellipse cx="284.8" cy="39.7" rx="2.0" ry="1.1" transform="rotate(191 284.8 39.7)"/><ellipse cx="81.2" cy="105.5" rx="2.0" ry="1.1" transform="rotate(189 81.2 105.5)"/><ellipse cx="80.6" cy="177.9" rx="2.0" ry="1.1" transform="rotate(277 80.6 177.9)"/><ellipse cx="12.4" cy="24.0" rx="2.0" ry="1.1" transform="rotate(269 12.4 24.0)"/><ellipse cx="163.3" cy="135.4" rx="2.0" ry="1.1" transform="rotate(218 163.3 135.4)"/><ellipse cx="288.3" cy="83.0" rx="2.0" ry="1.1" transform="rotate(25 288.3 83.0)"/><ellipse cx="175.5" cy="66.7" rx="2.0" ry="1.1" transform="rotate(239 175.5 66.7)"/><ellipse cx="72.2" cy="181.8" rx="2.0" ry="1.1" transform="rotate(32 72.2 181.8)"/><ellipse cx="32.4" cy="156.9" rx="2.0" ry="1.1" transform="rotate(190 32.4 156.9)"/><ellipse cx="237.7" cy="107.9" rx="2.0" ry="1.1" transform="rotate(161 237.7 107.9)"/><ellipse cx="271.6" cy="149.2" rx="2.0" ry="1.1" transform="rotate(42 271.6 149.2)"/><ellipse cx="166.5" cy="88.7" rx="2.0" ry="1.1" transform="rotate(189 166.5 88.7)"/><ellipse cx="225.4" cy="79.6" rx="2.0" ry="1.1" transform="rotate(69 225.4 79.6)"/><ellipse cx="171.5" cy="11.1" rx="2.0" ry="1.1" transform="rotate(59 171.5 11.1)"/><ellipse cx="84.1" cy="49.7" rx="2.0" ry="1.1" transform="rotate(80 84.1 49.7)"/><ellipse cx="104.7" cy="210.8" rx="2.0" ry="1.1" transform="rotate(113 104.7 210.8)"/><ellipse cx="178.1" cy="192.8" rx="2.0" ry="1.1" transform="rotate(18 178.1 192.8)"/><ellipse cx="212.5" cy="52.0" rx="2.0" ry="1.1" transform="rotate(56 212.5 52.0)"/><ellipse cx="12.3" cy="78.1" rx="2.0" ry="1.1" transform="rotate(328 12.3 78.1)"/><ellipse cx="100.2" cy="15.5" rx="2.0" ry="1.1" transform="rotate(128 100.2 15.5)"/><ellipse cx="25.8" cy="116.5" rx="2.0" ry="1.1" transform="rotate(20 25.8 116.5)"/><ellipse cx="68.8" cy="83.1" rx="2.0" ry="1.1" transform="rotate(285 68.8 83.1)"/><ellipse cx="277.6" cy="153.3" rx="2.0" ry="1.1" transform="rotate(80 277.6 153.3)"/><ellipse cx="21.5" cy="152.5" rx="2.0" ry="1.1" transform="rotate(150 21.5 152.5)"/><ellipse cx="258.8" cy="83.4" rx="2.0" ry="1.1" transform="rotate(354 258.8 83.4)"/><ellipse cx="-1.6" cy="25.0" rx="2.0" ry="1.1" transform="rotate(30 -1.6 25.0)"/><ellipse cx="187.6" cy="27.7" rx="2.0" ry="1.1" transform="rotate(48 187.6 27.7)"/><ellipse cx="37.5" cy="65.3" rx="2.0" ry="1.1" transform="rotate(52 37.5 65.3)"/><ellipse cx="237.1" cy="105.0" rx="2.0" ry="1.1" transform="rotate(328 237.1 105.0)"/><ellipse cx="98.6" cy="7.4" rx="2.0" ry="1.1" transform="rotate(275 98.6 7.4)"/><ellipse cx="253.2" cy="212.3" rx="2.0" ry="1.1" transform="rotate(272 253.2 212.3)"/><ellipse cx="16.1" cy="147.6" rx="2.0" ry="1.1" transform="rotate(343 16.1 147.6)"/><ellipse cx="131.9" cy="14.6" rx="2.0" ry="1.1" transform="rotate(150 131.9 14.6)"/><ellipse cx="127.2" cy="7.1" rx="2.0" ry="1.1" transform="rotate(284 127.2 7.1)"/><ellipse cx="15.8" cy="23.6" rx="2.0" ry="1.1" transform="rotate(29 15.8 23.6)"/><ellipse cx="254.0" cy="121.4" rx="2.0" ry="1.1" transform="rotate(57 254.0 121.4)"/><ellipse cx="184.1" cy="8.0" rx="2.0" ry="1.1" transform="rotate(72 184.1 8.0)"/><ellipse cx="71.8" cy="6.0" rx="2.0" ry="1.1" transform="rotate(201 71.8 6.0)"/><ellipse cx="1.2" cy="1.2" rx="2.0" ry="1.1" transform="rotate(291 1.2 1.2)"/><ellipse cx="70.3" cy="133.3" rx="2.0" ry="1.1" transform="rotate(328 70.3 133.3)"/><ellipse cx="222.3" cy="53.0" rx="2.0" ry="1.1" transform="rotate(313 222.3 53.0)"/><ellipse cx="168.0" cy="52.7" rx="2.0" ry="1.1" transform="rotate(233 168.0 52.7)"/><ellipse cx="68.0" cy="17.2" rx="2.0" ry="1.1" transform="rotate(280 68.0 17.2)"/><ellipse cx="273.4" cy="181.0" rx="2.0" ry="1.1" transform="rotate(300 273.4 181.0)"/><ellipse cx="167.8" cy="69.6" rx="2.0" ry="1.1" transform="rotate(137 167.8 69.6)"/><ellipse cx="211.1" cy="46.8" rx="2.0" ry="1.1" transform="rotate(10 211.1 46.8)"/><ellipse cx="148.5" cy="131.6" rx="2.0" ry="1.1" transform="rotate(199 148.5 131.6)"/><ellipse cx="33.6" cy="93.9" rx="2.0" ry="1.1" transform="rotate(319 33.6 93.9)"/><ellipse cx="131.1" cy="34.8" rx="2.0" ry="1.1" transform="rotate(284 131.1 34.8)"/><ellipse cx="52.1" cy="13.7" rx="2.0" ry="1.1" transform="rotate(188 52.1 13.7)"/><ellipse cx="138.2" cy="134.8" rx="2.0" ry="1.1" transform="rotate(106 138.2 134.8)"/><ellipse cx="168.8" cy="214.0" rx="2.0" ry="1.1" transform="rotate(222 168.8 214.0)"/><ellipse cx="124.1" cy="159.7" rx="2.0" ry="1.1" transform="rotate(259 124.1 159.7)"/><ellipse cx="290.5" cy="136.4" rx="2.0" ry="1.1" transform="rotate(138 290.5 136.4)"/><ellipse cx="177.6" cy="172.3" rx="2.0" ry="1.1" transform="rotate(157 177.6 172.3)"/><ellipse cx="195.1" cy="122.5" rx="2.0" ry="1.1" transform="rotate(33 195.1 122.5)"/><ellipse cx="137.5" cy="33.3" rx="2.0" ry="1.1" transform="rotate(184 137.5 33.3)"/><ellipse cx="206.1" cy="34.1" rx="2.0" ry="1.1" transform="rotate(186 206.1 34.1)"/><ellipse cx="284.9" cy="200.5" rx="2.0" ry="1.1" transform="rotate(161 284.9 200.5)"/><ellipse cx="127.9" cy="192.2" rx="2.0" ry="1.1" transform="rotate(41 127.9 192.2)"/><ellipse cx="175.1" cy="68.3" rx="2.0" ry="1.1" transform="rotate(344 175.1 68.3)"/><ellipse cx="8.5" cy="141.6" rx="2.0" ry="1.1" transform="rotate(176 8.5 141.6)"/><ellipse cx="121.1" cy="132.4" rx="2.0" ry="1.1" transform="rotate(97 121.1 132.4)"/><ellipse cx="65.1" cy="215.0" rx="2.0" ry="1.1" transform="rotate(197 65.1 215.0)"/><ellipse cx="199.8" cy="52.5" rx="2.0" ry="1.1" transform="rotate(310 199.8 52.5)"/><ellipse cx="166.2" cy="113.1" rx="2.0" ry="1.1" transform="rotate(197 166.2 113.1)"/><ellipse cx="290.4" cy="-0.1" rx="2.0" ry="1.1" transform="rotate(19 290.4 -0.1)"/><ellipse cx="144.3" cy="185.7" rx="2.0" ry="1.1" transform="rotate(7 144.3 185.7)"/><ellipse cx="140.9" cy="212.5" rx="2.0" ry="1.1" transform="rotate(233 140.9 212.5)"/><ellipse cx="65.9" cy="79.8" rx="2.0" ry="1.1" transform="rotate(173 65.9 79.8)"/><ellipse cx="141.7" cy="178.1" rx="2.0" ry="1.1" transform="rotate(98 141.7 178.1)"/><ellipse cx="146.2" cy="151.7" rx="2.0" ry="1.1" transform="rotate(82 146.2 151.7)"/><ellipse cx="93.7" cy="220.1" rx="2.0" ry="1.1" transform="rotate(164 93.7 220.1)"/><ellipse cx="27.7" cy="4.5" rx="2.0" ry="1.1" transform="rotate(30 27.7 4.5)"/><ellipse cx="127.9" cy="27.9" rx="2.0" ry="1.1" transform="rotate(245 127.9 27.9)"/><ellipse cx="204.9" cy="183.0" rx="2.0" ry="1.1" transform="rotate(283 204.9 183.0)"/><ellipse cx="145.4" cy="37.0" rx="2.0" ry="1.1" transform="rotate(202 145.4 37.0)"/><ellipse cx="276.6" cy="96.3" rx="2.0" ry="1.1" transform="rotate(277 276.6 96.3)"/><ellipse cx="269.0" cy="151.7" rx="2.0" ry="1.1" transform="rotate(114 269.0 151.7)"/><ellipse cx="-3.3" cy="104.1" rx="2.0" ry="1.1" transform="rotate(184 -3.3 104.1)"/><ellipse cx="68.4" cy="130.7" rx="2.0" ry="1.1" transform="rotate(155 68.4 130.7)"/><ellipse cx="27.1" cy="107.8" rx="2.0" ry="1.1" transform="rotate(91 27.1 107.8)"/><ellipse cx="43.3" cy="138.3" rx="2.0" ry="1.1" transform="rotate(43 43.3 138.3)"/><ellipse cx="283.6" cy="78.7" rx="2.0" ry="1.1" transform="rotate(5 283.6 78.7)"/><ellipse cx="16.3" cy="47.1" rx="2.0" ry="1.1" transform="rotate(280 16.3 47.1)"/><ellipse cx="175.7" cy="115.2" rx="2.0" ry="1.1" transform="rotate(67 175.7 115.2)"/><ellipse cx="131.4" cy="138.4" rx="2.0" ry="1.1" transform="rotate(203 131.4 138.4)"/></g><circle cx="93.4" cy="36.0" r="0.9" fill="#ece030"/><circle cx="164.7" cy="91.3" r="0.9" fill="#ece030"/><circle cx="27.8" cy="204.8" r="0.9" fill="#ece030"/><circle cx="253.5" cy="219.0" r="0.9" fill="#ece030"/><circle cx="214.0" cy="86.5" r="0.9" fill="#ece030"/><circle cx="59.6" cy="163.2" r="0.9" fill="#ece030"/><circle cx="278.0" cy="42.6" r="0.8" fill="#e0463a"/><circle cx="197.4" cy="208.0" r="0.9" fill="#ece030"/><circle cx="6.4" cy="136.6" r="0.9" fill="#ece030"/><circle cx="233.3" cy="188.9" r="0.9" fill="#ece030"/><circle cx="103.7" cy="18.3" r="0.9" fill="#ece030"/><circle cx="49.4" cy="84.0" r="0.8" fill="#e0463a"/><circle cx="136.1" cy="77.1" r="0.8" fill="#e0463a"/><circle cx="286.5" cy="218.4" r="0.8" fill="#e0463a"/><circle cx="180.9" cy="161.8" r="0.9" fill="#ece030"/><circle cx="154.4" cy="115.3" r="0.9" fill="#ece030"/><circle cx="186.0" cy="186.1" r="0.9" fill="#ece030"/><circle cx="90.0" cy="180.9" r="0.9" fill="#ece030"/><circle cx="70.8" cy="0.8" r="0.9" fill="#ece030"/><circle cx="98.7" cy="48.4" r="0.9" fill="#ece030"/><circle cx="100.8" cy="107.2" r="0.9" fill="#ece030"/><circle cx="96.4" cy="147.3" r="0.9" fill="#ece030"/><circle cx="59.8" cy="89.1" r="0.8" fill="#e0463a"/><circle cx="30.8" cy="57.7" r="0.9" fill="#ece030"/><circle cx="211.5" cy="49.3" r="0.9" fill="#ece030"/><circle cx="-3.4" cy="106.6" r="0.9" fill="#ece030"/><circle cx="144.2" cy="104.9" r="0.9" fill="#ece030"/><circle cx="145.0" cy="72.1" r="0.8" fill="#e0463a"/><circle cx="282.1" cy="169.1" r="0.9" fill="#ece030"/><circle cx="186.6" cy="88.6" r="0.9" fill="#ece030"/><circle cx="69.6" cy="117.6" r="0.9" fill="#ece030"/><circle cx="258.9" cy="8.2" r="0.9" fill="#ece030"/><circle cx="9.2" cy="154.9" r="0.9" fill="#ece030"/><circle cx="63.1" cy="76.9" r="0.9" fill="#ece030"/><circle cx="246.4" cy="118.5" r="0.8" fill="#e0463a"/><circle cx="113.3" cy="120.8" r="0.9" fill="#ece030"/><circle cx="72.6" cy="181.1" r="0.9" fill="#ece030"/><circle cx="39.0" cy="32.2" r="0.9" fill="#ece030"/><circle cx="108.3" cy="30.0" r="0.9" fill="#ece030"/><circle cx="271.2" cy="37.2" r="0.8" fill="#e0463a"/><circle cx="201.4" cy="39.4" r="0.9" fill="#ece030"/><circle cx="-3.3" cy="-4.4" r="0.9" fill="#ece030"/><circle cx="90.6" cy="84.4" r="0.9" fill="#ece030"/><circle cx="51.2" cy="160.5" r="0.9" fill="#ece030"/><circle cx="28.6" cy="140.0" r="0.9" fill="#ece030"/><circle cx="213.1" cy="194.8" r="0.8" fill="#e0463a"/><circle cx="270.0" cy="104.2" r="0.9" fill="#ece030"/><circle cx="222.9" cy="95.0" r="0.9" fill="#ece030"/><circle cx="258.3" cy="103.8" r="0.9" fill="#ece030"/><circle cx="222.2" cy="71.2" r="0.9" fill="#ece030"/><circle cx="197.4" cy="184.9" r="0.9" fill="#ece030"/><circle cx="136.7" cy="40.4" r="0.9" fill="#ece030"/><circle cx="101.5" cy="213.7" r="0.9" fill="#ece030"/><circle cx="236.6" cy="16.6" r="0.9" fill="#ece030"/><circle cx="200.3" cy="124.8" r="0.9" fill="#ece030"/><circle cx="226.6" cy="71.2" r="0.9" fill="#ece030"/><circle cx="151.4" cy="41.4" r="0.9" fill="#ece030"/><circle cx="163.4" cy="28.3" r="0.9" fill="#ece030"/><circle cx="36.2" cy="129.4" r="0.9" fill="#ece030"/><circle cx="107.3" cy="56.3" r="0.9" fill="#ece030"/><circle cx="138.0" cy="1.0" r="0.9" fill="#ece030"/><circle cx="-1.8" cy="47.3" r="0.9" fill="#ece030"/><circle cx="187.5" cy="131.4" r="0.9" fill="#ece030"/><circle cx="248.2" cy="169.5" r="0.9" fill="#ece030"/><circle cx="91.8" cy="74.9" r="0.9" fill="#ece030"/><circle cx="12.4" cy="26.2" r="0.9" fill="#ece030"/><circle cx="224.6" cy="77.6" r="0.8" fill="#e0463a"/><circle cx="105.6" cy="208.8" r="0.9" fill="#ece030"/><circle cx="-3.5" cy="23.9" r="0.9" fill="#ece030"/><circle cx="14.0" cy="148.2" r="0.9" fill="#ece030"/><circle cx="208.3" cy="34.3" r="0.9" fill="#ece030"/><circle cx="168.3" cy="113.7" r="0.9" fill="#ece030"/><circle cx="145.9" cy="149.6" r="0.8" fill="#e0463a"/><circle cx="204.4" cy="185.1" r="0.9" fill="#ece030"/><path d="M246.6 203.8 L248.3 205.3 L249.2 205.8 L248.0 204.3 L248.8 203.4 L249.3 203.8 L249.9 203.8" stroke="#3fb8c0" stroke-width="0.55" fill="none"/><path d="M74.4 69.7 L75.3 71.7 L74.4 71.1 L74.2 71.0 L74.8 72.4 L76.2 74.1 L77.3 76.4" stroke="#3fb8c0" stroke-width="0.55" fill="none"/><path d="M130.6 97.8 L131.4 97.2 L133.0 97.1 L133.3 97.4 L132.6 95.5 L131.5 95.6 L133.8 94.3" stroke="#3fb8c0" stroke-width="0.55" fill="none"/><path d="M252.7 201.2 L254.1 200.5 L251.7 202.4 L249.6 201.8 L251.8 202.8 L253.4 204.6 L251.8 204.8" stroke="#3fb8c0" stroke-width="0.55" fill="none"/><path d="M35.4 84.5 L35.4 86.2 L34.3 87.2 L32.5 86.3 L30.3 86.9 L30.8 88.1 L30.4 90.4" stroke="#3fb8c0" stroke-width="0.55" fill="none"/><path d="M204.2 121.7 L206.1 120.5 L205.0 121.0 L205.5 123.3 L206.4 121.5 L208.6 121.6 L207.2 123.1" stroke="#3fb8c0" stroke-width="0.55" fill="none"/><path d="M178.9 178.0 L179.1 177.2 L179.0 177.3 L178.2 177.9 L176.5 177.0 L174.6 175.1 L174.7 176.5" stroke="#3fb8c0" stroke-width="0.55" fill="none"/><path d="M118.2 187.4 L118.8 188.3 L117.7 190.4 L116.9 192.2 L115.7 194.5 L116.6 193.3 L117.7 192.0" stroke="#3fb8c0" stroke-width="0.55" fill="none"/><path d="M113.6 84.4 L112.8 84.0 L111.1 83.8 L109.0 85.4 L108.3 86.6 L108.0 89.0 L109.8 90.2" stroke="#3fb8c0" stroke-width="0.55" fill="none"/><path d="M236.0 189.6 L238.2 189.5 L238.7 187.8 L238.0 187.3 L238.6 185.3 L239.9 183.6 L239.5 183.8" stroke="#3fb8c0" stroke-width="0.55" fill="none"/><path d="M236.3 134.3 L234.6 135.3 L233.2 136.1 L232.8 138.4 L232.5 137.6 L231.6 139.9 L230.8 139.0" stroke="#3fb8c0" stroke-width="0.55" fill="none"/><path d="M153.8 141.7 L156.0 140.1 L155.2 141.3 L155.1 142.4 L156.0 140.9 L153.8 139.7 L152.8 138.5" stroke="#3fb8c0" stroke-width="0.55" fill="none"/><path d="M87.1 32.5 L84.7 32.8 L86.0 31.5 L84.0 32.8 L81.9 31.5 L81.9 30.8 L83.3 31.1" stroke="#3fb8c0" stroke-width="0.55" fill="none"/><path d="M150.7 83.6 L148.3 85.2 L147.8 87.0 L145.8 86.9 L146.0 85.6 L143.9 87.8 L146.1 90.3" stroke="#3fb8c0" stroke-width="0.55" fill="none"/></g><rect x="7.5" y="7.2" width="275.0" height="202.4" fill="none" stroke="#2d2f8c" stroke-width="0.95"/></svg>
<div class="t" style="left:238.2px;top:367.60px;font-size:5.2px;color:#111;font-weight:bold;transform:scaleX(1.036)">Captured: 12/13/2021 3:08 PM</div>
<div class="t" style="left:318.9px;top:367.60px;font-size:5.2px;color:#111;font-weight:bold;transform:scaleX(0.964)">X:5 pix</div>
<div class="t" style="left:340.7px;top:367.60px;font-size:5.2px;color:#111;font-weight:bold;transform:scaleX(1.049)">Y:447 pix</div>
<div class="t" style="left:369px;top:367.60px;font-size:5.2px;color:#111;font-weight:bold;transform:scaleX(0.981)">X:5 &micro;m</div>
<div class="t" style="left:390.8px;top:367.60px;font-size:5.2px;color:#111;font-weight:bold;transform:scaleX(1.022)">Y:447 &micro;m</div>
<div class="t" style="left:419.9px;top:367.60px;font-size:5.2px;color:#111;font-weight:bold;transform:scaleX(0.971)">Intensity:62</div>
<div class="t" style="left:453px;top:367.60px;font-size:5.2px;color:#111;font-weight:bold;transform:scaleX(1.026)">59.84fps</div>
<div class="r" style="left:54.5px;top:384px;width:469.5px;height:39.5px;background:#fff;border:0.7px solid #cfcfcf"></div>
<div class="r" style="left:55.2px;top:384.7px;width:468.3px;height:8.5px;background:linear-gradient(#fdfdfd,#f5f5f5)"></div>
<div class="t" style="left:56px;top:387.10px;font-size:5.2px;color:#111;font-weight:bold;transform:scaleX(0.797)">Analysis Name:</div>
<div class="t" style="left:88.5px;top:387.10px;font-size:5.2px;color:#111;transform:scaleX(1.026)">KITANOHANA L067 U1_20211213_150858</div>
<div class="r" style="left:193.8px;top:385.5px;width:0.7px;height:6.5px;background:#c8c8c8"></div>
<div class="t" style="left:196px;top:387.10px;font-size:5.2px;color:#111;font-weight:bold;transform:scaleX(0.885)">Video Count: 5</div>
<div class="r" style="left:231.5px;top:385.5px;width:0.7px;height:6.5px;background:#c8c8c8"></div>
<div class="r" style="left:517.5px;top:387.3px;width:4.5px;height:2.6px;background:#8fb0dc;border-radius:1.3px"></div>
<svg style="left:62.4px;top:394.1px" width="24" height="18" viewBox="0 0 24 18"><rect width="24" height="18" fill="#2e4f78"/><path d="M3.0 0 V18" stroke="#5a7ba3" stroke-width="0.4"/><path d="M6.0 0 V18" stroke="#5a7ba3" stroke-width="0.4"/><path d="M9.0 0 V18" stroke="#5a7ba3" stroke-width="0.4"/><path d="M12.0 0 V18" stroke="#5a7ba3" stroke-width="0.4"/><path d="M15.0 0 V18" stroke="#5a7ba3" stroke-width="0.4"/><path d="M18.0 0 V18" stroke="#5a7ba3" stroke-width="0.4"/><path d="M21.0 0 V18" stroke="#5a7ba3" stroke-width="0.4"/><path d="M0 3.0 H24" stroke="#5a7ba3" stroke-width="0.4"/><path d="M0 6.0 H24" stroke="#5a7ba3" stroke-width="0.4"/><path d="M0 9.0 H24" stroke="#5a7ba3" stroke-width="0.4"/><path d="M0 12.0 H24" stroke="#5a7ba3" stroke-width="0.4"/><path d="M0 15.0 H24" stroke="#5a7ba3" stroke-width="0.4"/></svg>
<div class="t" style="left:65.8px;top:414.88px;font-size:5px;color:#1e1e1e;transform:scaleX(0.883)">15:08:58</div>
<svg style="left:102.3px;top:394.1px" width="24" height="18" viewBox="0 0 24 18"><rect width="24" height="18" fill="#434343"/><circle cx="13.1" cy="13.2" r="0.3" fill="#8a8a8a"/><circle cx="14.4" cy="8.6" r="0.3" fill="#8a8a8a"/><circle cx="4.1" cy="11.6" r="0.3" fill="#8a8a8a"/><circle cx="10.6" cy="12.2" r="0.3" fill="#8a8a8a"/><circle cx="1.0" cy="5.3" r="0.3" fill="#8a8a8a"/><circle cx="2.7" cy="13.7" r="0.3" fill="#8a8a8a"/><circle cx="11.5" cy="5.2" r="0.3" fill="#8a8a8a"/><circle cx="18.8" cy="9.4" r="0.3" fill="#8a8a8a"/><circle cx="7.0" cy="7.1" r="0.3" fill="#8a8a8a"/><circle cx="0.0" cy="1.1" r="0.3" fill="#8a8a8a"/><circle cx="0.9" cy="17.3" r="0.3" fill="#8a8a8a"/><circle cx="21.1" cy="9.8" r="0.3" fill="#8a8a8a"/><circle cx="22.6" cy="9.7" r="0.3" fill="#8a8a8a"/><circle cx="16.4" cy="1.9" r="0.3" fill="#8a8a8a"/><circle cx="10.5" cy="11.0" r="0.3" fill="#8a8a8a"/><circle cx="9.8" cy="11.7" r="0.3" fill="#8a8a8a"/><circle cx="8.2" cy="11.8" r="0.3" fill="#8a8a8a"/><circle cx="5.0" cy="8.8" r="0.3" fill="#8a8a8a"/><circle cx="10.3" cy="9.5" r="0.3" fill="#8a8a8a"/><circle cx="1.3" cy="4.4" r="0.3" fill="#8a8a8a"/><circle cx="17.2" cy="3.0" r="0.3" fill="#8a8a8a"/><circle cx="11.4" cy="17.9" r="0.3" fill="#8a8a8a"/><circle cx="14.6" cy="13.2" r="0.3" fill="#8a8a8a"/><circle cx="18.5" cy="17.4" r="0.3" fill="#8a8a8a"/><circle cx="9.3" cy="7.1" r="0.3" fill="#8a8a8a"/></svg>
<div class="t" style="left:105.7px;top:414.88px;font-size:5px;color:#1e1e1e;transform:scaleX(0.883)">15:09:01</div>
<svg style="left:142.2px;top:394.1px" width="24" height="18" viewBox="0 0 24 18"><rect width="24" height="18" fill="#434343"/><circle cx="18.1" cy="0.5" r="0.3" fill="#8a8a8a"/><circle cx="11.2" cy="4.9" r="0.3" fill="#8a8a8a"/><circle cx="13.4" cy="13.2" r="0.3" fill="#8a8a8a"/><circle cx="20.7" cy="9.1" r="0.3" fill="#8a8a8a"/><circle cx="16.6" cy="1.4" r="0.3" fill="#8a8a8a"/><circle cx="15.8" cy="16.7" r="0.3" fill="#8a8a8a"/><circle cx="14.8" cy="8.8" r="0.3" fill="#8a8a8a"/><circle cx="12.3" cy="7.4" r="0.3" fill="#8a8a8a"/><circle cx="4.3" cy="3.6" r="0.3" fill="#8a8a8a"/><circle cx="19.1" cy="9.3" r="0.3" fill="#8a8a8a"/><circle cx="0.9" cy="11.1" r="0.3" fill="#8a8a8a"/><circle cx="19.9" cy="11.7" r="0.3" fill="#8a8a8a"/><circle cx="4.3" cy="17.1" r="0.3" fill="#8a8a8a"/><circle cx="4.4" cy="9.1" r="0.3" fill="#8a8a8a"/><circle cx="11.0" cy="3.0" r="0.3" fill="#8a8a8a"/><circle cx="6.4" cy="3.4" r="0.3" fill="#8a8a8a"/><circle cx="4.0" cy="0.7" r="0.3" fill="#8a8a8a"/><circle cx="15.5" cy="12.0" r="0.3" fill="#8a8a8a"/><circle cx="6.0" cy="17.1" r="0.3" fill="#8a8a8a"/><circle cx="10.2" cy="8.2" r="0.3" fill="#8a8a8a"/><circle cx="22.3" cy="11.7" r="0.3" fill="#8a8a8a"/><circle cx="11.2" cy="13.4" r="0.3" fill="#8a8a8a"/><circle cx="17.8" cy="5.5" r="0.3" fill="#8a8a8a"/><circle cx="1.7" cy="13.2" r="0.3" fill="#8a8a8a"/><circle cx="18.0" cy="10.8" r="0.3" fill="#8a8a8a"/></svg>
<div class="t" style="left:145.6px;top:414.88px;font-size:5px;color:#1e1e1e;transform:scaleX(0.883)">15:09:02</div>
<svg style="left:182.4px;top:394.1px" width="24" height="18" viewBox="0 0 24 18"><rect width="24" height="18" fill="#434343"/><circle cx="2.8" cy="13.4" r="0.3" fill="#8a8a8a"/><circle cx="4.2" cy="14.4" r="0.3" fill="#8a8a8a"/><circle cx="14.9" cy="11.5" r="0.3" fill="#8a8a8a"/><circle cx="1.8" cy="6.6" r="0.3" fill="#8a8a8a"/><circle cx="17.6" cy="2.0" r="0.3" fill="#8a8a8a"/><circle cx="0.9" cy="7.4" r="0.3" fill="#8a8a8a"/><circle cx="20.5" cy="11.3" r="0.3" fill="#8a8a8a"/><circle cx="5.5" cy="1.5" r="0.3" fill="#8a8a8a"/><circle cx="20.1" cy="15.2" r="0.3" fill="#8a8a8a"/><circle cx="16.8" cy="3.7" r="0.3" fill="#8a8a8a"/><circle cx="18.0" cy="0.2" r="0.3" fill="#8a8a8a"/><circle cx="4.1" cy="5.8" r="0.3" fill="#8a8a8a"/><circle cx="23.0" cy="0.6" r="0.3" fill="#8a8a8a"/><circle cx="3.9" cy="13.2" r="0.3" fill="#8a8a8a"/><circle cx="18.3" cy="4.8" r="0.3" fill="#8a8a8a"/><circle cx="1.8" cy="15.4" r="0.3" fill="#8a8a8a"/><circle cx="23.3" cy="16.4" r="0.3" fill="#8a8a8a"/><circle cx="13.6" cy="1.5" r="0.3" fill="#8a8a8a"/><circle cx="17.8" cy="11.7" r="0.3" fill="#8a8a8a"/><circle cx="20.0" cy="13.7" r="0.3" fill="#8a8a8a"/><circle cx="12.1" cy="17.6" r="0.3" fill="#8a8a8a"/><circle cx="11.1" cy="8.0" r="0.3" fill="#8a8a8a"/><circle cx="15.3" cy="14.2" r="0.3" fill="#8a8a8a"/><circle cx="14.1" cy="16.9" r="0.3" fill="#8a8a8a"/><circle cx="6.5" cy="16.1" r="0.3" fill="#8a8a8a"/></svg>
<div class="t" style="left:185.8px;top:414.88px;font-size:5px;color:#1e1e1e;transform:scaleX(0.883)">15:09:04</div>
<svg style="left:221.6px;top:394.1px" width="24" height="18" viewBox="0 0 24 18"><rect width="24" height="18" fill="#434343"/><circle cx="21.1" cy="6.2" r="0.3" fill="#8a8a8a"/><circle cx="0.7" cy="10.8" r="0.3" fill="#8a8a8a"/><circle cx="14.9" cy="17.3" r="0.3" fill="#8a8a8a"/><circle cx="13.4" cy="13.0" r="0.3" fill="#8a8a8a"/><circle cx="18.2" cy="3.0" r="0.3" fill="#8a8a8a"/><circle cx="16.0" cy="7.9" r="0.3" fill="#8a8a8a"/><circle cx="5.2" cy="4.9" r="0.3" fill="#8a8a8a"/><circle cx="8.7" cy="13.2" r="0.3" fill="#8a8a8a"/><circle cx="13.2" cy="5.8" r="0.3" fill="#8a8a8a"/><circle cx="1.3" cy="14.2" r="0.3" fill="#8a8a8a"/><circle cx="18.1" cy="15.1" r="0.3" fill="#8a8a8a"/><circle cx="18.9" cy="1.1" r="0.3" fill="#8a8a8a"/><circle cx="6.7" cy="8.3" r="0.3" fill="#8a8a8a"/><circle cx="7.1" cy="14.8" r="0.3" fill="#8a8a8a"/><circle cx="4.9" cy="0.3" r="0.3" fill="#8a8a8a"/><circle cx="10.8" cy="0.9" r="0.3" fill="#8a8a8a"/><circle cx="0.7" cy="10.9" r="0.3" fill="#8a8a8a"/><circle cx="14.5" cy="9.8" r="0.3" fill="#8a8a8a"/><circle cx="1.7" cy="10.1" r="0.3" fill="#8a8a8a"/><circle cx="12.5" cy="5.5" r="0.3" fill="#8a8a8a"/><circle cx="5.4" cy="2.8" r="0.3" fill="#8a8a8a"/><circle cx="11.6" cy="6.6" r="0.3" fill="#8a8a8a"/><circle cx="14.1" cy="12.1" r="0.3" fill="#8a8a8a"/><circle cx="6.6" cy="10.9" r="0.3" fill="#8a8a8a"/><circle cx="6.2" cy="13.4" r="0.3" fill="#8a8a8a"/></svg>
<div class="t" style="left:225.0px;top:414.88px;font-size:5px;color:#1e1e1e;transform:scaleX(0.883)">15:09:06</div>
<svg style="left:5px;top:436.2px" width="10" height="9" viewBox="0 0 10 9"><path d="M0 1.2 L4.4 0.6 L4.4 4.2 L0 4.2 Z M5 0.5 L10 0 L10 4.2 L5 4.2 Z M0 4.8 L4.4 4.8 L4.4 8.4 L0 7.8 Z M5 4.8 L10 4.8 L10 9 L5 8.5 Z" fill="#f4f6f8"/></svg>
<svg style="left:24.5px;top:434.3px" width="12" height="11.5" viewBox="0 0 12 11.5"><path d="M3.2 6.8 H10.2 Q10.6 2.2 6.6 2.2 Q2.4 2.3 2.3 6.5 Q2.3 10.6 6.6 10.7 Q9 10.7 10 8.8 H7.8 Q7.4 9.4 6.5 9.4 Q4 9.2 3.7 7.3" fill="#45b5ec"/><path d="M3.2 5.4 H8.3 Q8 3.5 6.2 3.5 Q4 3.6 3.6 5.4 Z" fill="#4e6e85"/><path d="M1.3 10.8 Q0 8.5 4.5 4 Q9.5 -0.5 11.3 1.1 Q12 2.5 10.5 4.5" stroke="#e6b53a" stroke-width="0.9" fill="none"/></svg>
<div class="r" style="left:43.2px;top:433px;width:21.4px;height:12.7px;background:#6887a0"></div>
<svg style="left:47.5px;top:435.5px" width="13" height="10.5" viewBox="0 0 13 10.5"><path d="M0.5 1.5 H5 L6 2.8 H12.5 V10 H0.5 Z" fill="#f0d46a"/><path d="M0.5 4.2 H12.5 V10 H0.5 Z" fill="#f6e08a"/><rect x="0.5" y="3.2" width="12" height="1" fill="#e9c24e"/><rect x="2.5" y="6.5" width="8" height="3.5" fill="#56a6d6"/><path d="M1.5 1 H3 M4 1 H6" stroke="#d94a3a" stroke-width="0.7"/></svg>
<svg style="left:70.9px;top:434px" width="12" height="11.5" viewBox="0 0 12 11.5"><rect x="0" y="0" width="12" height="11.5" fill="#2f6fc4"/><path d="M6 1.3 L10 2.6 L10 5.8 Q10 8.9 6 10.4 Q2 8.9 2 5.8 L2 2.6 Z" fill="#fff"/><path d="M6 2 V10 M2.4 5.6 H9.6" stroke="#2f6fc4" stroke-width="1.2"/></svg>
<svg style="left:94px;top:434.5px" width="12" height="11.5" viewBox="0 0 12 11.5"><circle cx="5" cy="4.8" r="4.2" fill="#d85a6c"/><circle cx="5" cy="4.8" r="2.8" fill="#f0eef2"/><path d="M3.6 4.6 H6.4 M5 3 V6.4" stroke="#c33" stroke-width="0.7"/><circle cx="8.8" cy="8.2" r="2.2" fill="#4f6cb8"/><circle cx="8.8" cy="8.2" r="1" fill="#9fb3e0"/></svg>
<svg style="left:117px;top:434.5px" width="11.5" height="11.5" viewBox="0 0 11.5 11.5"><rect x="0.3" y="0.3" width="10.9" height="10.9" fill="#e3f0e0" stroke="#9cc49a" stroke-width="0.5"/><path d="M2.2 2.2 L7.5 8.8 M7.5 2.2 L2.2 8.8" stroke="#2d8a3a" stroke-width="1.8"/><rect x="7.5" y="5.5" width="3.5" height="5" fill="#bfe0b8"/></svg>
<svg style="left:140.7px;top:434.5px" width="11.5" height="11.5" viewBox="0 0 11.5 11.5"><circle cx="5.75" cy="5.75" r="5.5" fill="#db4437"/><path d="M5.75 5.75 L10.5 3 A5.5 5.5 0 0 1 8.5 10.5 Z" fill="#f4c20d"/><path d="M5.75 5.75 L8.5 10.5 A5.5 5.5 0 0 1 1 8.5 Z" fill="#3cba54"/><path d="M5.75 5.75 L1 8.5 A5.5 5.5 0 0 1 1 3 Z" fill="#3cba54"/><circle cx="5.75" cy="5.75" r="2.6" fill="#fff"/><circle cx="5.75" cy="5.75" r="2" fill="#4a86e8"/></svg>
<div class="r" style="left:158.2px;top:433px;width:21.6px;height:12.7px;background:#6887a0"></div>
<svg style="left:163.8px;top:434.5px" width="10" height="11.5" viewBox="0 0 10 11.5"><rect x="0.3" y="0.3" width="9.4" height="10.9" fill="#f2f5fa" stroke="#b8c6dc" stroke-width="0.5"/><text x="4.6" y="8.8" font-size="8" font-family="Liberation Sans" font-weight="bold" fill="#2b5aa8" text-anchor="middle">W</text></svg>
<div class="r" style="left:180.5px;top:433px;width:22.4px;height:12.7px;background:#7e97ac"></div>
<svg style="left:186.8px;top:434.5px" width="10.5" height="11.5" viewBox="0 0 10.5 11.5"><rect x="0.3" y="0.3" width="9.9" height="10.9" fill="#3f6fc2" stroke="#7d9ed8" stroke-width="0.5"/><rect x="2.5" y="2.5" width="5.5" height="6.5" fill="none" stroke="#a9c1ea" stroke-width="0.7"/><path d="M2.5 5.7 H8 M5.2 2.5 V9" stroke="#a9c1ea" stroke-width="0.6"/></svg>
<svg style="left:651px;top:439px" width="4" height="3" viewBox="0 0 4 3"><path d="M0.5 2.5 L2 1 L3.5 2.5" stroke="#c8d2da" stroke-width="0.6" fill="none"/></svg>
<svg style="left:659px;top:437px" width="7" height="7" viewBox="0 0 7 7"><path d="M1 0.5 V6.5 M1 0.8 H5 L4 2 H1" stroke="#eee" stroke-width="0.8" fill="#eee"/><circle cx="4.5" cy="5" r="1.8" fill="#d83a3a"/></svg>
<svg style="left:667px;top:437px" width="7" height="6" viewBox="0 0 7 6"><path d="M0.5 5.5 L6.5 0.5 L6.5 5.5 Z" fill="#8d9aa4"/></svg>
<svg style="left:677px;top:437px" width="7" height="6" viewBox="0 0 7 6"><path d="M0.5 2 H2 L4 0.3 V5.7 L2 4 H0.5 Z" fill="#eee"/><path d="M5.2 1.5 Q6.3 3 5.2 4.5" stroke="#ccc" stroke-width="0.5" fill="none"/></svg>
<div class="t" style="left:549px;width:300px;text-align:center;top:436.51px;font-size:4.4px;color:#d5dde4;">3:09 PM</div>
<div class="t" style="left:549px;width:300px;text-align:center;top:442.11px;font-size:4.4px;color:#d5dde4;">12/13/2021</div>
<div class="r" style="left:0px;top:0px;width:716px;height:1.2px;background:#1a1a1a"></div>
<div class="r" style="left:0px;top:0px;width:1px;height:446px;background:#1a1a1a"></div>
<div class="r" style="left:715px;top:0px;width:1px;height:446px;background:#1a1a1a"></div>
</body></html>
